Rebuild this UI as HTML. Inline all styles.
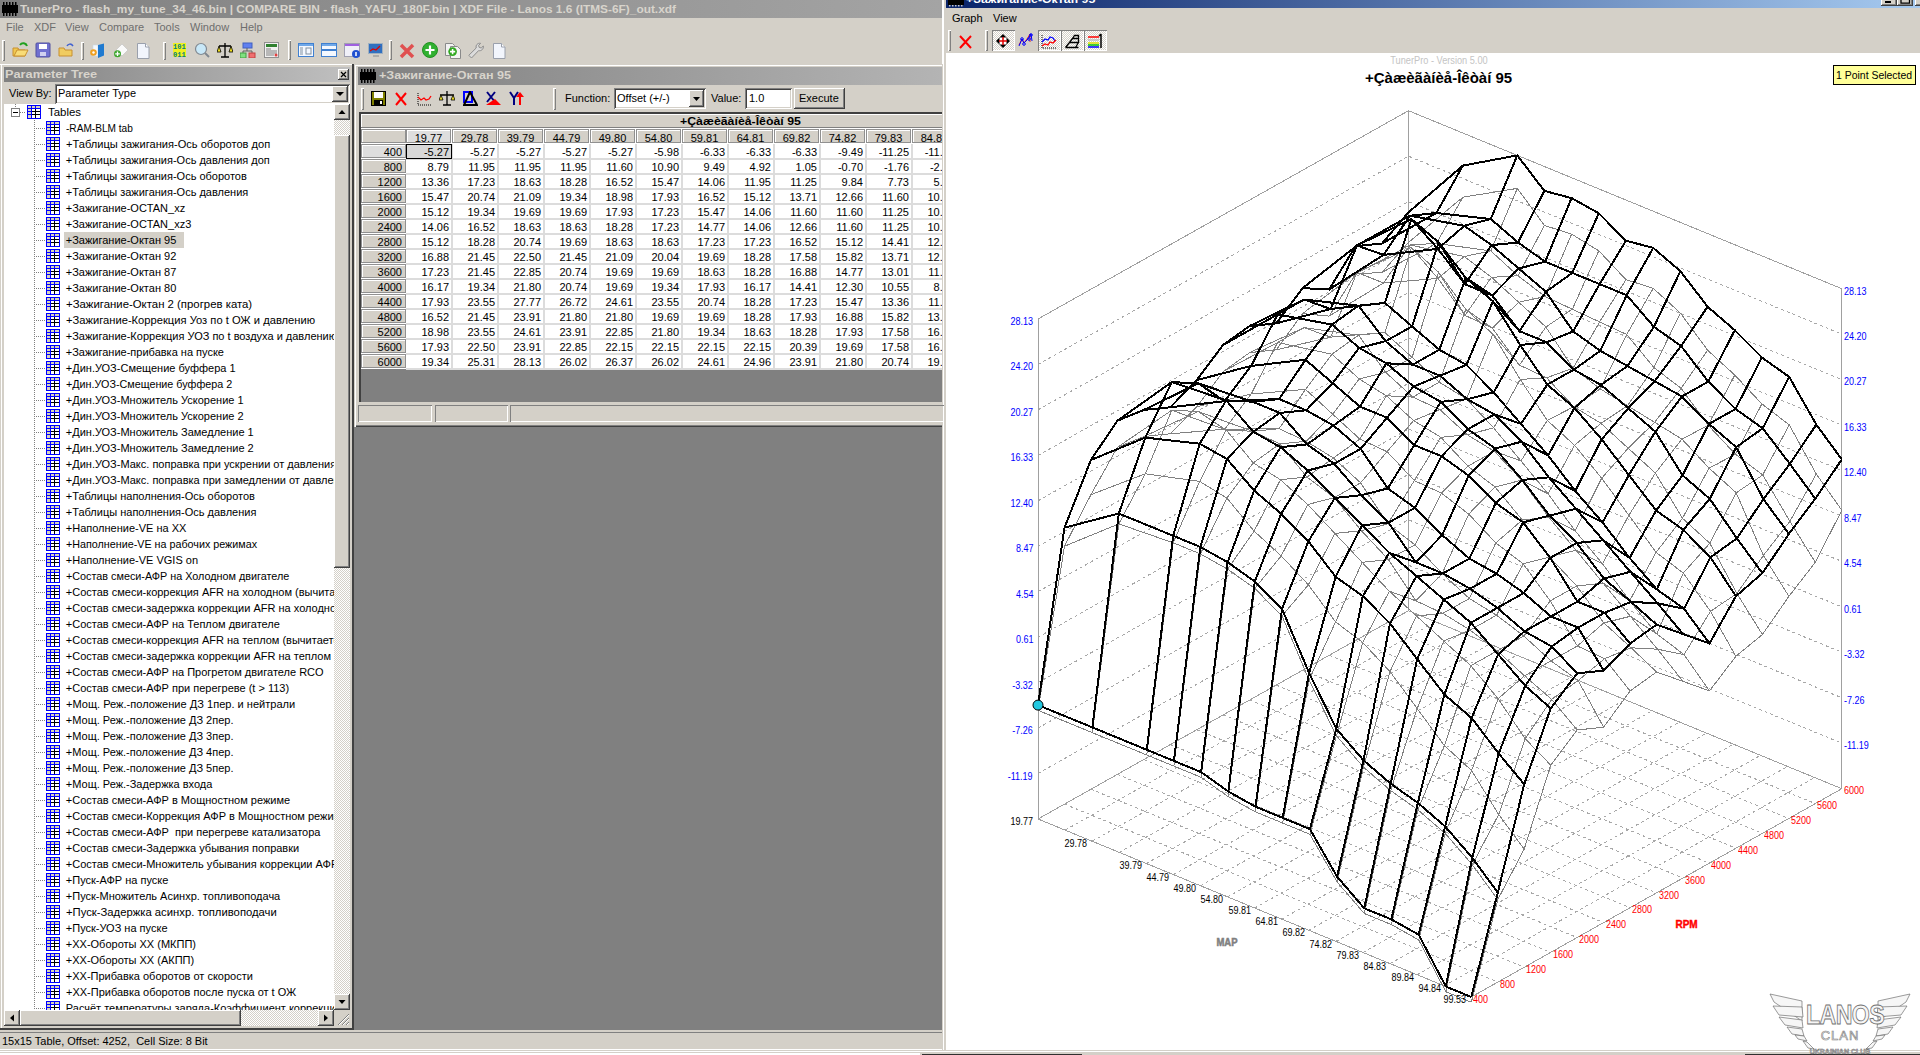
<!DOCTYPE html>
<html><head><meta charset="utf-8"><style>
html,body{margin:0;padding:0}
body{width:1920px;height:1055px;overflow:hidden;position:relative;background:#d4d0c8;font-family:"Liberation Sans", sans-serif;font-size:11px;color:#000}
div{box-sizing:content-box}
</style></head><body>
<div style="position:absolute;left:0px;top:0px;width:944px;height:1053px;background:#d4d0c8"></div><div style="position:absolute;left:0px;top:0px;width:942px;height:18px;background:linear-gradient(90deg,#808080,#a4a4a4)"></div><svg style="position:absolute;left:2px;top:2px" width="16" height="14"><rect x="0" y="3" width="16" height="8" fill="#000"/><rect x="1" y="0" width="1.5" height="3" fill="#000"/><rect x="1" y="11" width="1.5" height="3" fill="#000"/><rect x="4" y="0" width="1.5" height="3" fill="#000"/><rect x="4" y="11" width="1.5" height="3" fill="#000"/><rect x="7" y="0" width="1.5" height="3" fill="#000"/><rect x="7" y="11" width="1.5" height="3" fill="#000"/><rect x="10" y="0" width="1.5" height="3" fill="#000"/><rect x="10" y="11" width="1.5" height="3" fill="#000"/><rect x="13" y="0" width="1.5" height="3" fill="#000"/><rect x="13" y="11" width="1.5" height="3" fill="#000"/></svg><div style="position:absolute;left:19.5px;top:2.6px;font-size:11px;line-height:13px;color:#d8d4cc;font-weight:bold;white-space:pre;transform:scaleX(1.08);transform-origin:0 0;">TunerPro - flash_my_tune_34_46.bin | COMPARE BIN - flash_YAFU_180F.bin | XDF File - Lanos 1.6 (ITMS-6F)_out.xdf</div><div style="position:absolute;left:6px;top:21px;font-size:11px;line-height:13px;color:#6e6e6e;font-weight:normal;white-space:pre;">File</div><div style="position:absolute;left:34px;top:21px;font-size:11px;line-height:13px;color:#6e6e6e;font-weight:normal;white-space:pre;">XDF</div><div style="position:absolute;left:65px;top:21px;font-size:11px;line-height:13px;color:#6e6e6e;font-weight:normal;white-space:pre;">View</div><div style="position:absolute;left:99px;top:21px;font-size:11px;line-height:13px;color:#6e6e6e;font-weight:normal;white-space:pre;">Compare</div><div style="position:absolute;left:154px;top:21px;font-size:11px;line-height:13px;color:#6e6e6e;font-weight:normal;white-space:pre;">Tools</div><div style="position:absolute;left:190px;top:21px;font-size:11px;line-height:13px;color:#6e6e6e;font-weight:normal;white-space:pre;">Window</div><div style="position:absolute;left:240px;top:21px;font-size:11px;line-height:13px;color:#6e6e6e;font-weight:normal;white-space:pre;">Help</div><div style="position:absolute;left:2px;top:40px;width:3px;height:21px;box-shadow:inset 1px 1px #fff,inset -1px -1px #808080"></div><svg style="position:absolute;left:12px;top:42px" width="17" height="16" viewBox="0 0 17 16"><path d="M1 6h5l1 2h6v6H1z" fill="#f0c850" stroke="#c89030"/><path d="M2 14l3-6h11l-3 6z" fill="#f8dc78" stroke="#c89030"/><path d="M8 3c2-3 6-2 7 1" stroke="#20a020" stroke-width="2" fill="none"/></svg><svg style="position:absolute;left:35px;top:42px" width="16" height="16" viewBox="0 0 16 16"><rect x="1" y="1" width="14" height="14" rx="1" fill="#7070d0" stroke="#5050a0"/><rect x="4" y="2" width="8" height="5" fill="#fff"/><rect x="5" y="10" width="6" height="4" fill="#d0d0f0"/></svg><svg style="position:absolute;left:58px;top:42px" width="17" height="16" viewBox="0 0 17 16"><path d="M1 6h5l1 2h7v6H1z" fill="#f0cc60" stroke="#c89030"/><path d="M9 4c1-2 4-3 6 0" stroke="#4060d0" stroke-width="1.5" fill="none"/></svg><div style="position:absolute;left:81px;top:42px;width:3px;height:18px;box-shadow:inset 1px 1px #fff,inset -1px -1px #808080"></div><svg style="position:absolute;left:90px;top:42px" width="16" height="17" viewBox="0 0 16 17"><path d="M3 3h5v11H3z" fill="#f4f8fc" stroke="#c8d8e8" stroke-width="0.6"/><path d="M8 3l6-1.5v12l-6 2.5z" fill="#1f7ad0"/><circle cx="3.5" cy="10.5" r="3.3" fill="#f0a020"/><circle cx="3.5" cy="10.5" r="1.2" fill="#fff"/></svg><svg style="position:absolute;left:113px;top:42px" width="16" height="17" viewBox="0 0 16 17"><path d="M9 2l6 6-6 6-6-6z" fill="#fafafa" stroke="#c4c4c4" stroke-width="0.7"/><circle cx="4.5" cy="11.8" r="3.5" fill="#40a830"/><path d="M4.5 9.5v4.6M2.2 11.8h4.6" stroke="#fff" stroke-width="1.3"/></svg><svg style="position:absolute;left:137px;top:42px" width="13" height="17" viewBox="0 0 13 17"><path d="M0.5 1.5h8l3.5 3.5v11.5H0.5z" fill="#f2f5fc" stroke="#9aa0ac"/><path d="M8.5 1.5v3.5h3.5" fill="#fff" stroke="#9aa0ac"/></svg><div style="position:absolute;left:163px;top:42px;width:3px;height:18px;box-shadow:inset 1px 1px #fff,inset -1px -1px #808080"></div><svg style="position:absolute;left:172px;top:42px" width="16" height="16" viewBox="0 0 16 16"><rect x="1" y="1" width="13" height="14" fill="#f0f020"/><text x="1" y="7" font-size="7" font-weight="bold" fill="#008080" font-family="Liberation Mono">101</text><text x="1" y="15" font-size="7" font-weight="bold" fill="#008080" font-family="Liberation Mono">011</text></svg><svg style="position:absolute;left:194px;top:42px" width="16" height="16" viewBox="0 0 16 16"><circle cx="7" cy="7" r="5.5" fill="#c8e8f8" stroke="#808890" stroke-width="1.2"/><path d="M11 11l4 4" stroke="#808890" stroke-width="2"/></svg><svg style="position:absolute;left:217px;top:42px" width="16" height="16" viewBox="0 0 16 16"><path d="M8 1v14M4 15h8M2 4h12" stroke="#000" stroke-width="1.3"/><path d="M0 10l2-6 2 6zM12 10l2-6 2 6z" fill="#f0e020" stroke="#000" stroke-width="0.8"/></svg><svg style="position:absolute;left:240px;top:42px" width="16" height="16" viewBox="0 0 16 16"><rect x="3" y="1" width="9" height="5" fill="#6080f0" stroke="#4060c0"/><path d="M7 6v3M3 9h9v2M3 9v2" stroke="#606060" fill="none"/><rect x="0" y="11" width="6" height="5" fill="#80e080" stroke="#40a040"/><rect x="9" y="11" width="6" height="5" fill="#f07070" stroke="#c04040"/></svg><svg style="position:absolute;left:264px;top:42px" width="15" height="16" viewBox="0 0 15 16"><rect x="0.5" y="0.5" width="14" height="15" fill="#f0f0f0" stroke="#909090"/><rect x="2" y="2" width="11" height="3" fill="#308030"/><path d="M2 7h5M2 9h11M2 11h11M2 13h8" stroke="#808080"/><circle cx="12" cy="13" r="1.5" fill="#e04040"/></svg><div style="position:absolute;left:288px;top:40px;width:3px;height:20px;box-shadow:inset 1px 1px #fff,inset -1px -1px #808080"></div><svg style="position:absolute;left:298px;top:42px" width="16" height="16" viewBox="0 0 16 16"><rect x="0.5" y="1.5" width="15" height="13" fill="#f4f8ff" stroke="#4080d0"/><rect x="1" y="2" width="14" height="2" fill="#70a8e8"/><rect x="8" y="6" width="5" height="6" fill="none" stroke="#8090a0"/><path d="M2 6h3M2 8h3M2 10h3M2 12h3" stroke="#8090a0"/></svg><svg style="position:absolute;left:321px;top:42px" width="16" height="16" viewBox="0 0 16 16"><rect x="0.5" y="1.5" width="15" height="13" fill="#f4f8ff" stroke="#4080d0"/><rect x="1" y="2" width="14" height="2" fill="#70a8e8"/><path d="M1 8h14" stroke="#4080d0" stroke-width="2"/></svg><svg style="position:absolute;left:344px;top:42px" width="16" height="16" viewBox="0 0 16 16"><rect x="0.5" y="1.5" width="15" height="13" fill="#f0f0f8" stroke="#a0a0b0"/><rect x="1" y="2" width="14" height="2" fill="#a060e0"/><circle cx="12" cy="12" r="4" fill="#2050d0"/><path d="M12 10v4" stroke="#fff" stroke-width="1.5"/></svg><svg style="position:absolute;left:368px;top:42px" width="16" height="16" viewBox="0 0 16 16"><rect x="0.5" y="1.5" width="14" height="10" fill="#3070c0" stroke="#a0b0c0"/><path d="M2 9l3-2 3 1 4-4" stroke="#e00000" stroke-width="1.3" fill="none"/><path d="M5 14h6" stroke="#a0a0a0" stroke-width="1.5"/></svg><div style="position:absolute;left:389px;top:40px;width:3px;height:20px;box-shadow:inset 1px 1px #fff,inset -1px -1px #808080"></div><svg style="position:absolute;left:399px;top:43px" width="16" height="16" viewBox="0 0 16 16"><path d="M2 2l12 12M14 2L2 14" stroke="#e05050" stroke-width="3.5"/></svg><svg style="position:absolute;left:422px;top:42px" width="16" height="16" viewBox="0 0 16 16"><circle cx="8" cy="8" r="7.5" fill="#30b030" stroke="#209020"/><path d="M8 3.5v9M3.5 8h9" stroke="#fff" stroke-width="2.2"/></svg><svg style="position:absolute;left:445px;top:42px" width="17" height="17" viewBox="0 0 17 17"><path d="M0.5 1.5h7l2 2v10h-9z" fill="#f2f2f2" stroke="#8a8a8a"/><path d="M5.5 4.5h7l3 3v9h-10z" fill="#f4f4f4" stroke="#8a8a8a"/><circle cx="7.6" cy="9.6" r="4.3" fill="#30a820"/><path d="M7.6 7v5.2M5 9.6h5.2" stroke="#fff" stroke-width="1.6"/></svg><svg style="position:absolute;left:468px;top:42px" width="17" height="17" viewBox="0 0 17 17"><path d="M3.5 16 L0.8 13.3 L8.2 6 C7.5 3.2 9.5 0.8 12.6 1.3 L10.6 3.4 L11.2 5.4 L13.2 6 L15.3 4 C15.8 7 13.3 9.3 10.6 8.6 Z" fill="#dcdcdc" stroke="#8c8c8c" stroke-width="1"/></svg><svg style="position:absolute;left:493px;top:42px" width="13" height="17" viewBox="0 0 13 17"><path d="M0.5 1.5h8l3.5 3.5v11.5H0.5z" fill="#f2f5fc" stroke="#9aa0ac"/><path d="M8.5 1.5v3.5h3.5" fill="#fff" stroke="#9aa0ac"/></svg><div style="position:absolute;left:0px;top:64px;width:942px;height:1px;background:#fff"></div><div style="position:absolute;left:1px;top:65px;width:1px;height:965px;background:#fff"></div><div style="position:absolute;left:4px;top:67px;width:346px;height:15px;background:linear-gradient(90deg,#808080,#c0c0c0)"></div><div style="position:absolute;left:5px;top:68.3px;font-size:11px;line-height:13px;color:#d8d4cc;font-weight:bold;white-space:pre;transform:scaleX(1.16);transform-origin:0 0;">Parameter Tree</div><div style="position:absolute;left:338px;top:69px;width:11px;height:11px;background:#d4d0c8;box-shadow:inset -1px -1px #404040,inset 1px 1px #fff,inset -2px -2px #808080,inset 2px 2px #d4d0c8;"></div><svg style="position:absolute;left:338px;top:69px" width="11" height="11" viewBox="0 0 11 11"><path d="M3 3l5 5M8 3l-5 5" stroke="#000" stroke-width="1.2"/></svg><div style="position:absolute;left:9px;top:87px;font-size:11px;line-height:13px;color:#000;font-weight:normal;white-space:pre;">View By:</div><div style="position:absolute;left:55px;top:84px;width:295px;height:20px;background:#fff;box-shadow:inset 1px 1px #808080,inset -1px -1px #fff,inset 2px 2px #404040,inset -2px -2px #d4d0c8;"></div><div style="position:absolute;left:58px;top:87px;font-size:11px;line-height:13px;color:#000;font-weight:normal;white-space:pre;">Parameter Type</div><div style="position:absolute;left:332px;top:86px;width:16px;height:16px;background:#d4d0c8;box-shadow:inset -1px -1px #404040,inset 1px 1px #fff,inset -2px -2px #808080,inset 2px 2px #d4d0c8;"></div><svg style="position:absolute;left:332px;top:86px" width="16" height="16" viewBox="0 0 16 16"><path d="M4 6h8l-4 4z" fill="#000"/></svg><div style="position:absolute;left:4px;top:104px;width:330px;height:906px;background:#fff;overflow:hidden"></div><div style="position:absolute;left:4px;top:104px;width:330px;height:906px;overflow:hidden;background:#fff"><div style="position:absolute;left:11px;top:0px;width:1px;height:4px;background:repeating-linear-gradient(180deg,#808080 0 1px,transparent 1px 2px)"></div><div style="position:absolute;left:7px;top:4px;width:9px;height:9px;box-sizing:border-box;border:1px solid #808080;background:#fff"></div><div style="position:absolute;left:9px;top:8px;width:5px;height:1px;background:#000"></div><div style="position:absolute;left:16px;top:8px;width:6px;height:1px;background:repeating-linear-gradient(90deg,#808080 0 1px,transparent 1px 2px)"></div><svg style="position:absolute;left:23px;top:1px" width="14" height="14"><rect width="14" height="14" fill="#0000ff"/><rect x="5" y="4" width="8" height="9" fill="#fff"/><rect x="1" y="1" width="3" height="2" fill="#d8d4bc"/><rect x="5" y="1" width="3" height="2" fill="#d8d4bc"/><rect x="9" y="1" width="4" height="2" fill="#d8d4bc"/><rect x="1" y="4" width="3" height="2" fill="#d8d4bc"/><rect x="1" y="7" width="3" height="2" fill="#d8d4bc"/><rect x="1" y="10" width="3" height="3" fill="#d8d4bc"/><rect x="8" y="4" width="1" height="9" fill="#000"/><rect x="5" y="6" width="8" height="1" fill="#000"/><rect x="5" y="9" width="8" height="1" fill="#000"/></svg><div style="position:absolute;left:43.5px;top:1.7999999999999972px;font-size:11px;line-height:13px;white-space:pre;transform:scaleX(1.04);transform-origin:0 0">Tables</div><div style="position:absolute;left:30px;top:16px;width:1px;height:906px;background:repeating-linear-gradient(180deg,#808080 0 1px,transparent 1px 2px)"></div><div style="position:absolute;left:32px;top:24px;width:10px;height:1px;background:repeating-linear-gradient(90deg,#808080 0 1px,transparent 1px 2px)"></div><svg style="position:absolute;left:42px;top:17px" width="14" height="14"><rect width="14" height="14" fill="#0000ff"/><rect x="5" y="4" width="8" height="9" fill="#fff"/><rect x="1" y="1" width="3" height="2" fill="#d8d4bc"/><rect x="5" y="1" width="3" height="2" fill="#d8d4bc"/><rect x="9" y="1" width="4" height="2" fill="#d8d4bc"/><rect x="1" y="4" width="3" height="2" fill="#d8d4bc"/><rect x="1" y="7" width="3" height="2" fill="#d8d4bc"/><rect x="1" y="10" width="3" height="3" fill="#d8d4bc"/><rect x="8" y="4" width="1" height="9" fill="#000"/><rect x="5" y="6" width="8" height="1" fill="#000"/><rect x="5" y="9" width="8" height="1" fill="#000"/></svg><div style="position:absolute;left:61.8px;top:17.799999999999997px;font-size:11px;line-height:13px;white-space:pre;transform:scaleX(0.918);transform-origin:0 0">-RAM-BLM tab</div><div style="position:absolute;left:32px;top:40px;width:10px;height:1px;background:repeating-linear-gradient(90deg,#808080 0 1px,transparent 1px 2px)"></div><svg style="position:absolute;left:42px;top:33px" width="14" height="14"><rect width="14" height="14" fill="#0000ff"/><rect x="5" y="4" width="8" height="9" fill="#fff"/><rect x="1" y="1" width="3" height="2" fill="#d8d4bc"/><rect x="5" y="1" width="3" height="2" fill="#d8d4bc"/><rect x="9" y="1" width="4" height="2" fill="#d8d4bc"/><rect x="1" y="4" width="3" height="2" fill="#d8d4bc"/><rect x="1" y="7" width="3" height="2" fill="#d8d4bc"/><rect x="1" y="10" width="3" height="3" fill="#d8d4bc"/><rect x="8" y="4" width="1" height="9" fill="#000"/><rect x="5" y="6" width="8" height="1" fill="#000"/><rect x="5" y="9" width="8" height="1" fill="#000"/></svg><div style="position:absolute;left:61.8px;top:33.80000000000001px;font-size:11px;line-height:13px;white-space:pre;transform:scaleX(1.008);transform-origin:0 0">+Таблицы зажигания-Ось оборотов доп</div><div style="position:absolute;left:32px;top:56px;width:10px;height:1px;background:repeating-linear-gradient(90deg,#808080 0 1px,transparent 1px 2px)"></div><svg style="position:absolute;left:42px;top:49px" width="14" height="14"><rect width="14" height="14" fill="#0000ff"/><rect x="5" y="4" width="8" height="9" fill="#fff"/><rect x="1" y="1" width="3" height="2" fill="#d8d4bc"/><rect x="5" y="1" width="3" height="2" fill="#d8d4bc"/><rect x="9" y="1" width="4" height="2" fill="#d8d4bc"/><rect x="1" y="4" width="3" height="2" fill="#d8d4bc"/><rect x="1" y="7" width="3" height="2" fill="#d8d4bc"/><rect x="1" y="10" width="3" height="3" fill="#d8d4bc"/><rect x="8" y="4" width="1" height="9" fill="#000"/><rect x="5" y="6" width="8" height="1" fill="#000"/><rect x="5" y="9" width="8" height="1" fill="#000"/></svg><div style="position:absolute;left:61.8px;top:49.80000000000001px;font-size:11px;line-height:13px;white-space:pre;transform:scaleX(1.0);transform-origin:0 0">+Таблицы зажигания-Ось давления доп</div><div style="position:absolute;left:32px;top:72px;width:10px;height:1px;background:repeating-linear-gradient(90deg,#808080 0 1px,transparent 1px 2px)"></div><svg style="position:absolute;left:42px;top:65px" width="14" height="14"><rect width="14" height="14" fill="#0000ff"/><rect x="5" y="4" width="8" height="9" fill="#fff"/><rect x="1" y="1" width="3" height="2" fill="#d8d4bc"/><rect x="5" y="1" width="3" height="2" fill="#d8d4bc"/><rect x="9" y="1" width="4" height="2" fill="#d8d4bc"/><rect x="1" y="4" width="3" height="2" fill="#d8d4bc"/><rect x="1" y="7" width="3" height="2" fill="#d8d4bc"/><rect x="1" y="10" width="3" height="3" fill="#d8d4bc"/><rect x="8" y="4" width="1" height="9" fill="#000"/><rect x="5" y="6" width="8" height="1" fill="#000"/><rect x="5" y="9" width="8" height="1" fill="#000"/></svg><div style="position:absolute;left:61.8px;top:65.80000000000001px;font-size:11px;line-height:13px;white-space:pre;transform:scaleX(1.0);transform-origin:0 0">+Таблицы зажигания-Ось оборотов</div><div style="position:absolute;left:32px;top:88px;width:10px;height:1px;background:repeating-linear-gradient(90deg,#808080 0 1px,transparent 1px 2px)"></div><svg style="position:absolute;left:42px;top:81px" width="14" height="14"><rect width="14" height="14" fill="#0000ff"/><rect x="5" y="4" width="8" height="9" fill="#fff"/><rect x="1" y="1" width="3" height="2" fill="#d8d4bc"/><rect x="5" y="1" width="3" height="2" fill="#d8d4bc"/><rect x="9" y="1" width="4" height="2" fill="#d8d4bc"/><rect x="1" y="4" width="3" height="2" fill="#d8d4bc"/><rect x="1" y="7" width="3" height="2" fill="#d8d4bc"/><rect x="1" y="10" width="3" height="3" fill="#d8d4bc"/><rect x="8" y="4" width="1" height="9" fill="#000"/><rect x="5" y="6" width="8" height="1" fill="#000"/><rect x="5" y="9" width="8" height="1" fill="#000"/></svg><div style="position:absolute;left:61.8px;top:81.80000000000001px;font-size:11px;line-height:13px;white-space:pre;transform:scaleX(1.0);transform-origin:0 0">+Таблицы зажигания-Ось давления</div><div style="position:absolute;left:32px;top:104px;width:10px;height:1px;background:repeating-linear-gradient(90deg,#808080 0 1px,transparent 1px 2px)"></div><svg style="position:absolute;left:42px;top:97px" width="14" height="14"><rect width="14" height="14" fill="#0000ff"/><rect x="5" y="4" width="8" height="9" fill="#fff"/><rect x="1" y="1" width="3" height="2" fill="#d8d4bc"/><rect x="5" y="1" width="3" height="2" fill="#d8d4bc"/><rect x="9" y="1" width="4" height="2" fill="#d8d4bc"/><rect x="1" y="4" width="3" height="2" fill="#d8d4bc"/><rect x="1" y="7" width="3" height="2" fill="#d8d4bc"/><rect x="1" y="10" width="3" height="3" fill="#d8d4bc"/><rect x="8" y="4" width="1" height="9" fill="#000"/><rect x="5" y="6" width="8" height="1" fill="#000"/><rect x="5" y="9" width="8" height="1" fill="#000"/></svg><div style="position:absolute;left:61.8px;top:97.80000000000001px;font-size:11px;line-height:13px;white-space:pre;transform:scaleX(1.0);transform-origin:0 0">+Зажигание-OCTAN_xz</div><div style="position:absolute;left:32px;top:120px;width:10px;height:1px;background:repeating-linear-gradient(90deg,#808080 0 1px,transparent 1px 2px)"></div><svg style="position:absolute;left:42px;top:113px" width="14" height="14"><rect width="14" height="14" fill="#0000ff"/><rect x="5" y="4" width="8" height="9" fill="#fff"/><rect x="1" y="1" width="3" height="2" fill="#d8d4bc"/><rect x="5" y="1" width="3" height="2" fill="#d8d4bc"/><rect x="9" y="1" width="4" height="2" fill="#d8d4bc"/><rect x="1" y="4" width="3" height="2" fill="#d8d4bc"/><rect x="1" y="7" width="3" height="2" fill="#d8d4bc"/><rect x="1" y="10" width="3" height="3" fill="#d8d4bc"/><rect x="8" y="4" width="1" height="9" fill="#000"/><rect x="5" y="6" width="8" height="1" fill="#000"/><rect x="5" y="9" width="8" height="1" fill="#000"/></svg><div style="position:absolute;left:61.8px;top:113.80000000000001px;font-size:11px;line-height:13px;white-space:pre;transform:scaleX(1.0);transform-origin:0 0">+Зажигание-OCTAN_xz3</div><div style="position:absolute;left:32px;top:136px;width:10px;height:1px;background:repeating-linear-gradient(90deg,#808080 0 1px,transparent 1px 2px)"></div><svg style="position:absolute;left:42px;top:129px" width="14" height="14"><rect width="14" height="14" fill="#0000ff"/><rect x="5" y="4" width="8" height="9" fill="#fff"/><rect x="1" y="1" width="3" height="2" fill="#d8d4bc"/><rect x="5" y="1" width="3" height="2" fill="#d8d4bc"/><rect x="9" y="1" width="4" height="2" fill="#d8d4bc"/><rect x="1" y="4" width="3" height="2" fill="#d8d4bc"/><rect x="1" y="7" width="3" height="2" fill="#d8d4bc"/><rect x="1" y="10" width="3" height="3" fill="#d8d4bc"/><rect x="8" y="4" width="1" height="9" fill="#000"/><rect x="5" y="6" width="8" height="1" fill="#000"/><rect x="5" y="9" width="8" height="1" fill="#000"/></svg><div style="position:absolute;left:60px;top:128px;width:120px;height:16px;background:#d4d0c8"></div><div style="position:absolute;left:61.8px;top:129.8px;font-size:11px;line-height:13px;white-space:pre;transform:scaleX(1.0);transform-origin:0 0">+Зажигание-Октан 95</div><div style="position:absolute;left:32px;top:152px;width:10px;height:1px;background:repeating-linear-gradient(90deg,#808080 0 1px,transparent 1px 2px)"></div><svg style="position:absolute;left:42px;top:145px" width="14" height="14"><rect width="14" height="14" fill="#0000ff"/><rect x="5" y="4" width="8" height="9" fill="#fff"/><rect x="1" y="1" width="3" height="2" fill="#d8d4bc"/><rect x="5" y="1" width="3" height="2" fill="#d8d4bc"/><rect x="9" y="1" width="4" height="2" fill="#d8d4bc"/><rect x="1" y="4" width="3" height="2" fill="#d8d4bc"/><rect x="1" y="7" width="3" height="2" fill="#d8d4bc"/><rect x="1" y="10" width="3" height="3" fill="#d8d4bc"/><rect x="8" y="4" width="1" height="9" fill="#000"/><rect x="5" y="6" width="8" height="1" fill="#000"/><rect x="5" y="9" width="8" height="1" fill="#000"/></svg><div style="position:absolute;left:61.8px;top:145.8px;font-size:11px;line-height:13px;white-space:pre;transform:scaleX(1.0);transform-origin:0 0">+Зажигание-Октан 92</div><div style="position:absolute;left:32px;top:168px;width:10px;height:1px;background:repeating-linear-gradient(90deg,#808080 0 1px,transparent 1px 2px)"></div><svg style="position:absolute;left:42px;top:161px" width="14" height="14"><rect width="14" height="14" fill="#0000ff"/><rect x="5" y="4" width="8" height="9" fill="#fff"/><rect x="1" y="1" width="3" height="2" fill="#d8d4bc"/><rect x="5" y="1" width="3" height="2" fill="#d8d4bc"/><rect x="9" y="1" width="4" height="2" fill="#d8d4bc"/><rect x="1" y="4" width="3" height="2" fill="#d8d4bc"/><rect x="1" y="7" width="3" height="2" fill="#d8d4bc"/><rect x="1" y="10" width="3" height="3" fill="#d8d4bc"/><rect x="8" y="4" width="1" height="9" fill="#000"/><rect x="5" y="6" width="8" height="1" fill="#000"/><rect x="5" y="9" width="8" height="1" fill="#000"/></svg><div style="position:absolute;left:61.8px;top:161.8px;font-size:11px;line-height:13px;white-space:pre;transform:scaleX(1.0);transform-origin:0 0">+Зажигание-Октан 87</div><div style="position:absolute;left:32px;top:184px;width:10px;height:1px;background:repeating-linear-gradient(90deg,#808080 0 1px,transparent 1px 2px)"></div><svg style="position:absolute;left:42px;top:177px" width="14" height="14"><rect width="14" height="14" fill="#0000ff"/><rect x="5" y="4" width="8" height="9" fill="#fff"/><rect x="1" y="1" width="3" height="2" fill="#d8d4bc"/><rect x="5" y="1" width="3" height="2" fill="#d8d4bc"/><rect x="9" y="1" width="4" height="2" fill="#d8d4bc"/><rect x="1" y="4" width="3" height="2" fill="#d8d4bc"/><rect x="1" y="7" width="3" height="2" fill="#d8d4bc"/><rect x="1" y="10" width="3" height="3" fill="#d8d4bc"/><rect x="8" y="4" width="1" height="9" fill="#000"/><rect x="5" y="6" width="8" height="1" fill="#000"/><rect x="5" y="9" width="8" height="1" fill="#000"/></svg><div style="position:absolute;left:61.8px;top:177.8px;font-size:11px;line-height:13px;white-space:pre;transform:scaleX(1.0);transform-origin:0 0">+Зажигание-Октан 80</div><div style="position:absolute;left:32px;top:200px;width:10px;height:1px;background:repeating-linear-gradient(90deg,#808080 0 1px,transparent 1px 2px)"></div><svg style="position:absolute;left:42px;top:193px" width="14" height="14"><rect width="14" height="14" fill="#0000ff"/><rect x="5" y="4" width="8" height="9" fill="#fff"/><rect x="1" y="1" width="3" height="2" fill="#d8d4bc"/><rect x="5" y="1" width="3" height="2" fill="#d8d4bc"/><rect x="9" y="1" width="4" height="2" fill="#d8d4bc"/><rect x="1" y="4" width="3" height="2" fill="#d8d4bc"/><rect x="1" y="7" width="3" height="2" fill="#d8d4bc"/><rect x="1" y="10" width="3" height="3" fill="#d8d4bc"/><rect x="8" y="4" width="1" height="9" fill="#000"/><rect x="5" y="6" width="8" height="1" fill="#000"/><rect x="5" y="9" width="8" height="1" fill="#000"/></svg><div style="position:absolute;left:61.8px;top:193.8px;font-size:11px;line-height:13px;white-space:pre;transform:scaleX(1.034);transform-origin:0 0">+Зажигание-Октан 2 (прогрев ката)</div><div style="position:absolute;left:32px;top:216px;width:10px;height:1px;background:repeating-linear-gradient(90deg,#808080 0 1px,transparent 1px 2px)"></div><svg style="position:absolute;left:42px;top:209px" width="14" height="14"><rect width="14" height="14" fill="#0000ff"/><rect x="5" y="4" width="8" height="9" fill="#fff"/><rect x="1" y="1" width="3" height="2" fill="#d8d4bc"/><rect x="5" y="1" width="3" height="2" fill="#d8d4bc"/><rect x="9" y="1" width="4" height="2" fill="#d8d4bc"/><rect x="1" y="4" width="3" height="2" fill="#d8d4bc"/><rect x="1" y="7" width="3" height="2" fill="#d8d4bc"/><rect x="1" y="10" width="3" height="3" fill="#d8d4bc"/><rect x="8" y="4" width="1" height="9" fill="#000"/><rect x="5" y="6" width="8" height="1" fill="#000"/><rect x="5" y="9" width="8" height="1" fill="#000"/></svg><div style="position:absolute;left:61.8px;top:209.8px;font-size:11px;line-height:13px;white-space:pre;transform:scaleX(1.016);transform-origin:0 0">+Зажигание-Коррекция Уоз по t ОЖ и давлению</div><div style="position:absolute;left:32px;top:232px;width:10px;height:1px;background:repeating-linear-gradient(90deg,#808080 0 1px,transparent 1px 2px)"></div><svg style="position:absolute;left:42px;top:225px" width="14" height="14"><rect width="14" height="14" fill="#0000ff"/><rect x="5" y="4" width="8" height="9" fill="#fff"/><rect x="1" y="1" width="3" height="2" fill="#d8d4bc"/><rect x="5" y="1" width="3" height="2" fill="#d8d4bc"/><rect x="9" y="1" width="4" height="2" fill="#d8d4bc"/><rect x="1" y="4" width="3" height="2" fill="#d8d4bc"/><rect x="1" y="7" width="3" height="2" fill="#d8d4bc"/><rect x="1" y="10" width="3" height="3" fill="#d8d4bc"/><rect x="8" y="4" width="1" height="9" fill="#000"/><rect x="5" y="6" width="8" height="1" fill="#000"/><rect x="5" y="9" width="8" height="1" fill="#000"/></svg><div style="position:absolute;left:61.8px;top:225.8px;font-size:11px;line-height:13px;white-space:pre;transform:scaleX(1.0);transform-origin:0 0">+Зажигание-Коррекция УОЗ по t воздуха и давлению</div><div style="position:absolute;left:32px;top:248px;width:10px;height:1px;background:repeating-linear-gradient(90deg,#808080 0 1px,transparent 1px 2px)"></div><svg style="position:absolute;left:42px;top:241px" width="14" height="14"><rect width="14" height="14" fill="#0000ff"/><rect x="5" y="4" width="8" height="9" fill="#fff"/><rect x="1" y="1" width="3" height="2" fill="#d8d4bc"/><rect x="5" y="1" width="3" height="2" fill="#d8d4bc"/><rect x="9" y="1" width="4" height="2" fill="#d8d4bc"/><rect x="1" y="4" width="3" height="2" fill="#d8d4bc"/><rect x="1" y="7" width="3" height="2" fill="#d8d4bc"/><rect x="1" y="10" width="3" height="3" fill="#d8d4bc"/><rect x="8" y="4" width="1" height="9" fill="#000"/><rect x="5" y="6" width="8" height="1" fill="#000"/><rect x="5" y="9" width="8" height="1" fill="#000"/></svg><div style="position:absolute;left:61.8px;top:241.8px;font-size:11px;line-height:13px;white-space:pre;transform:scaleX(1.0);transform-origin:0 0">+Зажигание-прибавка на пуске</div><div style="position:absolute;left:32px;top:264px;width:10px;height:1px;background:repeating-linear-gradient(90deg,#808080 0 1px,transparent 1px 2px)"></div><svg style="position:absolute;left:42px;top:257px" width="14" height="14"><rect width="14" height="14" fill="#0000ff"/><rect x="5" y="4" width="8" height="9" fill="#fff"/><rect x="1" y="1" width="3" height="2" fill="#d8d4bc"/><rect x="5" y="1" width="3" height="2" fill="#d8d4bc"/><rect x="9" y="1" width="4" height="2" fill="#d8d4bc"/><rect x="1" y="4" width="3" height="2" fill="#d8d4bc"/><rect x="1" y="7" width="3" height="2" fill="#d8d4bc"/><rect x="1" y="10" width="3" height="3" fill="#d8d4bc"/><rect x="8" y="4" width="1" height="9" fill="#000"/><rect x="5" y="6" width="8" height="1" fill="#000"/><rect x="5" y="9" width="8" height="1" fill="#000"/></svg><div style="position:absolute;left:61.8px;top:257.8px;font-size:11px;line-height:13px;white-space:pre;transform:scaleX(1.0);transform-origin:0 0">+Дин.УОЗ-Смещение буффера 1</div><div style="position:absolute;left:32px;top:280px;width:10px;height:1px;background:repeating-linear-gradient(90deg,#808080 0 1px,transparent 1px 2px)"></div><svg style="position:absolute;left:42px;top:273px" width="14" height="14"><rect width="14" height="14" fill="#0000ff"/><rect x="5" y="4" width="8" height="9" fill="#fff"/><rect x="1" y="1" width="3" height="2" fill="#d8d4bc"/><rect x="5" y="1" width="3" height="2" fill="#d8d4bc"/><rect x="9" y="1" width="4" height="2" fill="#d8d4bc"/><rect x="1" y="4" width="3" height="2" fill="#d8d4bc"/><rect x="1" y="7" width="3" height="2" fill="#d8d4bc"/><rect x="1" y="10" width="3" height="3" fill="#d8d4bc"/><rect x="8" y="4" width="1" height="9" fill="#000"/><rect x="5" y="6" width="8" height="1" fill="#000"/><rect x="5" y="9" width="8" height="1" fill="#000"/></svg><div style="position:absolute;left:61.8px;top:273.8px;font-size:11px;line-height:13px;white-space:pre;transform:scaleX(0.979);transform-origin:0 0">+Дин.УОЗ-Смещение буффера 2</div><div style="position:absolute;left:32px;top:296px;width:10px;height:1px;background:repeating-linear-gradient(90deg,#808080 0 1px,transparent 1px 2px)"></div><svg style="position:absolute;left:42px;top:289px" width="14" height="14"><rect width="14" height="14" fill="#0000ff"/><rect x="5" y="4" width="8" height="9" fill="#fff"/><rect x="1" y="1" width="3" height="2" fill="#d8d4bc"/><rect x="5" y="1" width="3" height="2" fill="#d8d4bc"/><rect x="9" y="1" width="4" height="2" fill="#d8d4bc"/><rect x="1" y="4" width="3" height="2" fill="#d8d4bc"/><rect x="1" y="7" width="3" height="2" fill="#d8d4bc"/><rect x="1" y="10" width="3" height="3" fill="#d8d4bc"/><rect x="8" y="4" width="1" height="9" fill="#000"/><rect x="5" y="6" width="8" height="1" fill="#000"/><rect x="5" y="9" width="8" height="1" fill="#000"/></svg><div style="position:absolute;left:61.8px;top:289.8px;font-size:11px;line-height:13px;white-space:pre;transform:scaleX(1.0);transform-origin:0 0">+Дин.УОЗ-Множитель Ускорение 1</div><div style="position:absolute;left:32px;top:312px;width:10px;height:1px;background:repeating-linear-gradient(90deg,#808080 0 1px,transparent 1px 2px)"></div><svg style="position:absolute;left:42px;top:305px" width="14" height="14"><rect width="14" height="14" fill="#0000ff"/><rect x="5" y="4" width="8" height="9" fill="#fff"/><rect x="1" y="1" width="3" height="2" fill="#d8d4bc"/><rect x="5" y="1" width="3" height="2" fill="#d8d4bc"/><rect x="9" y="1" width="4" height="2" fill="#d8d4bc"/><rect x="1" y="4" width="3" height="2" fill="#d8d4bc"/><rect x="1" y="7" width="3" height="2" fill="#d8d4bc"/><rect x="1" y="10" width="3" height="3" fill="#d8d4bc"/><rect x="8" y="4" width="1" height="9" fill="#000"/><rect x="5" y="6" width="8" height="1" fill="#000"/><rect x="5" y="9" width="8" height="1" fill="#000"/></svg><div style="position:absolute;left:61.8px;top:305.8px;font-size:11px;line-height:13px;white-space:pre;transform:scaleX(1.0);transform-origin:0 0">+Дин.УОЗ-Множитель Ускорение 2</div><div style="position:absolute;left:32px;top:328px;width:10px;height:1px;background:repeating-linear-gradient(90deg,#808080 0 1px,transparent 1px 2px)"></div><svg style="position:absolute;left:42px;top:321px" width="14" height="14"><rect width="14" height="14" fill="#0000ff"/><rect x="5" y="4" width="8" height="9" fill="#fff"/><rect x="1" y="1" width="3" height="2" fill="#d8d4bc"/><rect x="5" y="1" width="3" height="2" fill="#d8d4bc"/><rect x="9" y="1" width="4" height="2" fill="#d8d4bc"/><rect x="1" y="4" width="3" height="2" fill="#d8d4bc"/><rect x="1" y="7" width="3" height="2" fill="#d8d4bc"/><rect x="1" y="10" width="3" height="3" fill="#d8d4bc"/><rect x="8" y="4" width="1" height="9" fill="#000"/><rect x="5" y="6" width="8" height="1" fill="#000"/><rect x="5" y="9" width="8" height="1" fill="#000"/></svg><div style="position:absolute;left:61.8px;top:321.8px;font-size:11px;line-height:13px;white-space:pre;transform:scaleX(1.0);transform-origin:0 0">+Дин.УОЗ-Множитель Замедление 1</div><div style="position:absolute;left:32px;top:344px;width:10px;height:1px;background:repeating-linear-gradient(90deg,#808080 0 1px,transparent 1px 2px)"></div><svg style="position:absolute;left:42px;top:337px" width="14" height="14"><rect width="14" height="14" fill="#0000ff"/><rect x="5" y="4" width="8" height="9" fill="#fff"/><rect x="1" y="1" width="3" height="2" fill="#d8d4bc"/><rect x="5" y="1" width="3" height="2" fill="#d8d4bc"/><rect x="9" y="1" width="4" height="2" fill="#d8d4bc"/><rect x="1" y="4" width="3" height="2" fill="#d8d4bc"/><rect x="1" y="7" width="3" height="2" fill="#d8d4bc"/><rect x="1" y="10" width="3" height="3" fill="#d8d4bc"/><rect x="8" y="4" width="1" height="9" fill="#000"/><rect x="5" y="6" width="8" height="1" fill="#000"/><rect x="5" y="9" width="8" height="1" fill="#000"/></svg><div style="position:absolute;left:61.8px;top:337.8px;font-size:11px;line-height:13px;white-space:pre;transform:scaleX(1.0);transform-origin:0 0">+Дин.УОЗ-Множитель Замедление 2</div><div style="position:absolute;left:32px;top:360px;width:10px;height:1px;background:repeating-linear-gradient(90deg,#808080 0 1px,transparent 1px 2px)"></div><svg style="position:absolute;left:42px;top:353px" width="14" height="14"><rect width="14" height="14" fill="#0000ff"/><rect x="5" y="4" width="8" height="9" fill="#fff"/><rect x="1" y="1" width="3" height="2" fill="#d8d4bc"/><rect x="5" y="1" width="3" height="2" fill="#d8d4bc"/><rect x="9" y="1" width="4" height="2" fill="#d8d4bc"/><rect x="1" y="4" width="3" height="2" fill="#d8d4bc"/><rect x="1" y="7" width="3" height="2" fill="#d8d4bc"/><rect x="1" y="10" width="3" height="3" fill="#d8d4bc"/><rect x="8" y="4" width="1" height="9" fill="#000"/><rect x="5" y="6" width="8" height="1" fill="#000"/><rect x="5" y="9" width="8" height="1" fill="#000"/></svg><div style="position:absolute;left:61.8px;top:353.8px;font-size:11px;line-height:13px;white-space:pre;transform:scaleX(1.0);transform-origin:0 0">+Дин.УОЗ-Макс. поправка при ускрении от давления</div><div style="position:absolute;left:32px;top:376px;width:10px;height:1px;background:repeating-linear-gradient(90deg,#808080 0 1px,transparent 1px 2px)"></div><svg style="position:absolute;left:42px;top:369px" width="14" height="14"><rect width="14" height="14" fill="#0000ff"/><rect x="5" y="4" width="8" height="9" fill="#fff"/><rect x="1" y="1" width="3" height="2" fill="#d8d4bc"/><rect x="5" y="1" width="3" height="2" fill="#d8d4bc"/><rect x="9" y="1" width="4" height="2" fill="#d8d4bc"/><rect x="1" y="4" width="3" height="2" fill="#d8d4bc"/><rect x="1" y="7" width="3" height="2" fill="#d8d4bc"/><rect x="1" y="10" width="3" height="3" fill="#d8d4bc"/><rect x="8" y="4" width="1" height="9" fill="#000"/><rect x="5" y="6" width="8" height="1" fill="#000"/><rect x="5" y="9" width="8" height="1" fill="#000"/></svg><div style="position:absolute;left:61.8px;top:369.8px;font-size:11px;line-height:13px;white-space:pre;transform:scaleX(1.0);transform-origin:0 0">+Дин.УОЗ-Макс. поправка при замедлении от давления</div><div style="position:absolute;left:32px;top:392px;width:10px;height:1px;background:repeating-linear-gradient(90deg,#808080 0 1px,transparent 1px 2px)"></div><svg style="position:absolute;left:42px;top:385px" width="14" height="14"><rect width="14" height="14" fill="#0000ff"/><rect x="5" y="4" width="8" height="9" fill="#fff"/><rect x="1" y="1" width="3" height="2" fill="#d8d4bc"/><rect x="5" y="1" width="3" height="2" fill="#d8d4bc"/><rect x="9" y="1" width="4" height="2" fill="#d8d4bc"/><rect x="1" y="4" width="3" height="2" fill="#d8d4bc"/><rect x="1" y="7" width="3" height="2" fill="#d8d4bc"/><rect x="1" y="10" width="3" height="3" fill="#d8d4bc"/><rect x="8" y="4" width="1" height="9" fill="#000"/><rect x="5" y="6" width="8" height="1" fill="#000"/><rect x="5" y="9" width="8" height="1" fill="#000"/></svg><div style="position:absolute;left:61.8px;top:385.8px;font-size:11px;line-height:13px;white-space:pre;transform:scaleX(1.0);transform-origin:0 0">+Таблицы наполнения-Ось оборотов</div><div style="position:absolute;left:32px;top:408px;width:10px;height:1px;background:repeating-linear-gradient(90deg,#808080 0 1px,transparent 1px 2px)"></div><svg style="position:absolute;left:42px;top:401px" width="14" height="14"><rect width="14" height="14" fill="#0000ff"/><rect x="5" y="4" width="8" height="9" fill="#fff"/><rect x="1" y="1" width="3" height="2" fill="#d8d4bc"/><rect x="5" y="1" width="3" height="2" fill="#d8d4bc"/><rect x="9" y="1" width="4" height="2" fill="#d8d4bc"/><rect x="1" y="4" width="3" height="2" fill="#d8d4bc"/><rect x="1" y="7" width="3" height="2" fill="#d8d4bc"/><rect x="1" y="10" width="3" height="3" fill="#d8d4bc"/><rect x="8" y="4" width="1" height="9" fill="#000"/><rect x="5" y="6" width="8" height="1" fill="#000"/><rect x="5" y="9" width="8" height="1" fill="#000"/></svg><div style="position:absolute;left:61.8px;top:401.8px;font-size:11px;line-height:13px;white-space:pre;transform:scaleX(1.0);transform-origin:0 0">+Таблицы наполнения-Ось давления</div><div style="position:absolute;left:32px;top:424px;width:10px;height:1px;background:repeating-linear-gradient(90deg,#808080 0 1px,transparent 1px 2px)"></div><svg style="position:absolute;left:42px;top:417px" width="14" height="14"><rect width="14" height="14" fill="#0000ff"/><rect x="5" y="4" width="8" height="9" fill="#fff"/><rect x="1" y="1" width="3" height="2" fill="#d8d4bc"/><rect x="5" y="1" width="3" height="2" fill="#d8d4bc"/><rect x="9" y="1" width="4" height="2" fill="#d8d4bc"/><rect x="1" y="4" width="3" height="2" fill="#d8d4bc"/><rect x="1" y="7" width="3" height="2" fill="#d8d4bc"/><rect x="1" y="10" width="3" height="3" fill="#d8d4bc"/><rect x="8" y="4" width="1" height="9" fill="#000"/><rect x="5" y="6" width="8" height="1" fill="#000"/><rect x="5" y="9" width="8" height="1" fill="#000"/></svg><div style="position:absolute;left:61.8px;top:417.79999999999995px;font-size:11px;line-height:13px;white-space:pre;transform:scaleX(1.0);transform-origin:0 0">+Наполнение-VE на XX</div><div style="position:absolute;left:32px;top:440px;width:10px;height:1px;background:repeating-linear-gradient(90deg,#808080 0 1px,transparent 1px 2px)"></div><svg style="position:absolute;left:42px;top:433px" width="14" height="14"><rect width="14" height="14" fill="#0000ff"/><rect x="5" y="4" width="8" height="9" fill="#fff"/><rect x="1" y="1" width="3" height="2" fill="#d8d4bc"/><rect x="5" y="1" width="3" height="2" fill="#d8d4bc"/><rect x="9" y="1" width="4" height="2" fill="#d8d4bc"/><rect x="1" y="4" width="3" height="2" fill="#d8d4bc"/><rect x="1" y="7" width="3" height="2" fill="#d8d4bc"/><rect x="1" y="10" width="3" height="3" fill="#d8d4bc"/><rect x="8" y="4" width="1" height="9" fill="#000"/><rect x="5" y="6" width="8" height="1" fill="#000"/><rect x="5" y="9" width="8" height="1" fill="#000"/></svg><div style="position:absolute;left:61.8px;top:433.79999999999995px;font-size:11px;line-height:13px;white-space:pre;transform:scaleX(0.977);transform-origin:0 0">+Наполнение-VE на рабочих режимах</div><div style="position:absolute;left:32px;top:456px;width:10px;height:1px;background:repeating-linear-gradient(90deg,#808080 0 1px,transparent 1px 2px)"></div><svg style="position:absolute;left:42px;top:449px" width="14" height="14"><rect width="14" height="14" fill="#0000ff"/><rect x="5" y="4" width="8" height="9" fill="#fff"/><rect x="1" y="1" width="3" height="2" fill="#d8d4bc"/><rect x="5" y="1" width="3" height="2" fill="#d8d4bc"/><rect x="9" y="1" width="4" height="2" fill="#d8d4bc"/><rect x="1" y="4" width="3" height="2" fill="#d8d4bc"/><rect x="1" y="7" width="3" height="2" fill="#d8d4bc"/><rect x="1" y="10" width="3" height="3" fill="#d8d4bc"/><rect x="8" y="4" width="1" height="9" fill="#000"/><rect x="5" y="6" width="8" height="1" fill="#000"/><rect x="5" y="9" width="8" height="1" fill="#000"/></svg><div style="position:absolute;left:61.8px;top:449.79999999999995px;font-size:11px;line-height:13px;white-space:pre;transform:scaleX(1.0);transform-origin:0 0">+Наполнение-VE VGIS on</div><div style="position:absolute;left:32px;top:472px;width:10px;height:1px;background:repeating-linear-gradient(90deg,#808080 0 1px,transparent 1px 2px)"></div><svg style="position:absolute;left:42px;top:465px" width="14" height="14"><rect width="14" height="14" fill="#0000ff"/><rect x="5" y="4" width="8" height="9" fill="#fff"/><rect x="1" y="1" width="3" height="2" fill="#d8d4bc"/><rect x="5" y="1" width="3" height="2" fill="#d8d4bc"/><rect x="9" y="1" width="4" height="2" fill="#d8d4bc"/><rect x="1" y="4" width="3" height="2" fill="#d8d4bc"/><rect x="1" y="7" width="3" height="2" fill="#d8d4bc"/><rect x="1" y="10" width="3" height="3" fill="#d8d4bc"/><rect x="8" y="4" width="1" height="9" fill="#000"/><rect x="5" y="6" width="8" height="1" fill="#000"/><rect x="5" y="9" width="8" height="1" fill="#000"/></svg><div style="position:absolute;left:61.8px;top:465.79999999999995px;font-size:11px;line-height:13px;white-space:pre;transform:scaleX(0.982);transform-origin:0 0">+Состав смеси-АФР на Холодном двигателе</div><div style="position:absolute;left:32px;top:488px;width:10px;height:1px;background:repeating-linear-gradient(90deg,#808080 0 1px,transparent 1px 2px)"></div><svg style="position:absolute;left:42px;top:481px" width="14" height="14"><rect width="14" height="14" fill="#0000ff"/><rect x="5" y="4" width="8" height="9" fill="#fff"/><rect x="1" y="1" width="3" height="2" fill="#d8d4bc"/><rect x="5" y="1" width="3" height="2" fill="#d8d4bc"/><rect x="9" y="1" width="4" height="2" fill="#d8d4bc"/><rect x="1" y="4" width="3" height="2" fill="#d8d4bc"/><rect x="1" y="7" width="3" height="2" fill="#d8d4bc"/><rect x="1" y="10" width="3" height="3" fill="#d8d4bc"/><rect x="8" y="4" width="1" height="9" fill="#000"/><rect x="5" y="6" width="8" height="1" fill="#000"/><rect x="5" y="9" width="8" height="1" fill="#000"/></svg><div style="position:absolute;left:61.8px;top:481.79999999999995px;font-size:11px;line-height:13px;white-space:pre;transform:scaleX(1.0);transform-origin:0 0">+Состав смеси-коррекция AFR на холодном (вычитается)</div><div style="position:absolute;left:32px;top:504px;width:10px;height:1px;background:repeating-linear-gradient(90deg,#808080 0 1px,transparent 1px 2px)"></div><svg style="position:absolute;left:42px;top:497px" width="14" height="14"><rect width="14" height="14" fill="#0000ff"/><rect x="5" y="4" width="8" height="9" fill="#fff"/><rect x="1" y="1" width="3" height="2" fill="#d8d4bc"/><rect x="5" y="1" width="3" height="2" fill="#d8d4bc"/><rect x="9" y="1" width="4" height="2" fill="#d8d4bc"/><rect x="1" y="4" width="3" height="2" fill="#d8d4bc"/><rect x="1" y="7" width="3" height="2" fill="#d8d4bc"/><rect x="1" y="10" width="3" height="3" fill="#d8d4bc"/><rect x="8" y="4" width="1" height="9" fill="#000"/><rect x="5" y="6" width="8" height="1" fill="#000"/><rect x="5" y="9" width="8" height="1" fill="#000"/></svg><div style="position:absolute;left:61.8px;top:497.79999999999995px;font-size:11px;line-height:13px;white-space:pre;transform:scaleX(1.0);transform-origin:0 0">+Состав смеси-задержка коррекции AFR на холодном</div><div style="position:absolute;left:32px;top:520px;width:10px;height:1px;background:repeating-linear-gradient(90deg,#808080 0 1px,transparent 1px 2px)"></div><svg style="position:absolute;left:42px;top:513px" width="14" height="14"><rect width="14" height="14" fill="#0000ff"/><rect x="5" y="4" width="8" height="9" fill="#fff"/><rect x="1" y="1" width="3" height="2" fill="#d8d4bc"/><rect x="5" y="1" width="3" height="2" fill="#d8d4bc"/><rect x="9" y="1" width="4" height="2" fill="#d8d4bc"/><rect x="1" y="4" width="3" height="2" fill="#d8d4bc"/><rect x="1" y="7" width="3" height="2" fill="#d8d4bc"/><rect x="1" y="10" width="3" height="3" fill="#d8d4bc"/><rect x="8" y="4" width="1" height="9" fill="#000"/><rect x="5" y="6" width="8" height="1" fill="#000"/><rect x="5" y="9" width="8" height="1" fill="#000"/></svg><div style="position:absolute;left:61.8px;top:513.8px;font-size:11px;line-height:13px;white-space:pre;transform:scaleX(1.0);transform-origin:0 0">+Состав смеси-АФР на Теплом двигателе</div><div style="position:absolute;left:32px;top:536px;width:10px;height:1px;background:repeating-linear-gradient(90deg,#808080 0 1px,transparent 1px 2px)"></div><svg style="position:absolute;left:42px;top:529px" width="14" height="14"><rect width="14" height="14" fill="#0000ff"/><rect x="5" y="4" width="8" height="9" fill="#fff"/><rect x="1" y="1" width="3" height="2" fill="#d8d4bc"/><rect x="5" y="1" width="3" height="2" fill="#d8d4bc"/><rect x="9" y="1" width="4" height="2" fill="#d8d4bc"/><rect x="1" y="4" width="3" height="2" fill="#d8d4bc"/><rect x="1" y="7" width="3" height="2" fill="#d8d4bc"/><rect x="1" y="10" width="3" height="3" fill="#d8d4bc"/><rect x="8" y="4" width="1" height="9" fill="#000"/><rect x="5" y="6" width="8" height="1" fill="#000"/><rect x="5" y="9" width="8" height="1" fill="#000"/></svg><div style="position:absolute;left:61.8px;top:529.8px;font-size:11px;line-height:13px;white-space:pre;transform:scaleX(1.0);transform-origin:0 0">+Состав смеси-коррекция AFR на теплом (вычитается)</div><div style="position:absolute;left:32px;top:552px;width:10px;height:1px;background:repeating-linear-gradient(90deg,#808080 0 1px,transparent 1px 2px)"></div><svg style="position:absolute;left:42px;top:545px" width="14" height="14"><rect width="14" height="14" fill="#0000ff"/><rect x="5" y="4" width="8" height="9" fill="#fff"/><rect x="1" y="1" width="3" height="2" fill="#d8d4bc"/><rect x="5" y="1" width="3" height="2" fill="#d8d4bc"/><rect x="9" y="1" width="4" height="2" fill="#d8d4bc"/><rect x="1" y="4" width="3" height="2" fill="#d8d4bc"/><rect x="1" y="7" width="3" height="2" fill="#d8d4bc"/><rect x="1" y="10" width="3" height="3" fill="#d8d4bc"/><rect x="8" y="4" width="1" height="9" fill="#000"/><rect x="5" y="6" width="8" height="1" fill="#000"/><rect x="5" y="9" width="8" height="1" fill="#000"/></svg><div style="position:absolute;left:61.8px;top:545.8px;font-size:11px;line-height:13px;white-space:pre;transform:scaleX(1.0);transform-origin:0 0">+Состав смеси-задержка коррекции AFR на теплом</div><div style="position:absolute;left:32px;top:568px;width:10px;height:1px;background:repeating-linear-gradient(90deg,#808080 0 1px,transparent 1px 2px)"></div><svg style="position:absolute;left:42px;top:561px" width="14" height="14"><rect width="14" height="14" fill="#0000ff"/><rect x="5" y="4" width="8" height="9" fill="#fff"/><rect x="1" y="1" width="3" height="2" fill="#d8d4bc"/><rect x="5" y="1" width="3" height="2" fill="#d8d4bc"/><rect x="9" y="1" width="4" height="2" fill="#d8d4bc"/><rect x="1" y="4" width="3" height="2" fill="#d8d4bc"/><rect x="1" y="7" width="3" height="2" fill="#d8d4bc"/><rect x="1" y="10" width="3" height="3" fill="#d8d4bc"/><rect x="8" y="4" width="1" height="9" fill="#000"/><rect x="5" y="6" width="8" height="1" fill="#000"/><rect x="5" y="9" width="8" height="1" fill="#000"/></svg><div style="position:absolute;left:61.8px;top:561.8px;font-size:11px;line-height:13px;white-space:pre;transform:scaleX(1.0);transform-origin:0 0">+Состав смеси-АФР на Прогретом двигателе RCO</div><div style="position:absolute;left:32px;top:584px;width:10px;height:1px;background:repeating-linear-gradient(90deg,#808080 0 1px,transparent 1px 2px)"></div><svg style="position:absolute;left:42px;top:577px" width="14" height="14"><rect width="14" height="14" fill="#0000ff"/><rect x="5" y="4" width="8" height="9" fill="#fff"/><rect x="1" y="1" width="3" height="2" fill="#d8d4bc"/><rect x="5" y="1" width="3" height="2" fill="#d8d4bc"/><rect x="9" y="1" width="4" height="2" fill="#d8d4bc"/><rect x="1" y="4" width="3" height="2" fill="#d8d4bc"/><rect x="1" y="7" width="3" height="2" fill="#d8d4bc"/><rect x="1" y="10" width="3" height="3" fill="#d8d4bc"/><rect x="8" y="4" width="1" height="9" fill="#000"/><rect x="5" y="6" width="8" height="1" fill="#000"/><rect x="5" y="9" width="8" height="1" fill="#000"/></svg><div style="position:absolute;left:61.8px;top:577.8px;font-size:11px;line-height:13px;white-space:pre;transform:scaleX(1.0);transform-origin:0 0">+Состав смеси-АФР при перегреве (t &gt; 113)</div><div style="position:absolute;left:32px;top:600px;width:10px;height:1px;background:repeating-linear-gradient(90deg,#808080 0 1px,transparent 1px 2px)"></div><svg style="position:absolute;left:42px;top:593px" width="14" height="14"><rect width="14" height="14" fill="#0000ff"/><rect x="5" y="4" width="8" height="9" fill="#fff"/><rect x="1" y="1" width="3" height="2" fill="#d8d4bc"/><rect x="5" y="1" width="3" height="2" fill="#d8d4bc"/><rect x="9" y="1" width="4" height="2" fill="#d8d4bc"/><rect x="1" y="4" width="3" height="2" fill="#d8d4bc"/><rect x="1" y="7" width="3" height="2" fill="#d8d4bc"/><rect x="1" y="10" width="3" height="3" fill="#d8d4bc"/><rect x="8" y="4" width="1" height="9" fill="#000"/><rect x="5" y="6" width="8" height="1" fill="#000"/><rect x="5" y="9" width="8" height="1" fill="#000"/></svg><div style="position:absolute;left:61.8px;top:593.8px;font-size:11px;line-height:13px;white-space:pre;transform:scaleX(1.005);transform-origin:0 0">+Мощ. Реж.-положение ДЗ 1пер. и нейтрали</div><div style="position:absolute;left:32px;top:616px;width:10px;height:1px;background:repeating-linear-gradient(90deg,#808080 0 1px,transparent 1px 2px)"></div><svg style="position:absolute;left:42px;top:609px" width="14" height="14"><rect width="14" height="14" fill="#0000ff"/><rect x="5" y="4" width="8" height="9" fill="#fff"/><rect x="1" y="1" width="3" height="2" fill="#d8d4bc"/><rect x="5" y="1" width="3" height="2" fill="#d8d4bc"/><rect x="9" y="1" width="4" height="2" fill="#d8d4bc"/><rect x="1" y="4" width="3" height="2" fill="#d8d4bc"/><rect x="1" y="7" width="3" height="2" fill="#d8d4bc"/><rect x="1" y="10" width="3" height="3" fill="#d8d4bc"/><rect x="8" y="4" width="1" height="9" fill="#000"/><rect x="5" y="6" width="8" height="1" fill="#000"/><rect x="5" y="9" width="8" height="1" fill="#000"/></svg><div style="position:absolute;left:61.8px;top:609.8px;font-size:11px;line-height:13px;white-space:pre;transform:scaleX(1.0);transform-origin:0 0">+Мощ. Реж.-положение ДЗ 2пер.</div><div style="position:absolute;left:32px;top:632px;width:10px;height:1px;background:repeating-linear-gradient(90deg,#808080 0 1px,transparent 1px 2px)"></div><svg style="position:absolute;left:42px;top:625px" width="14" height="14"><rect width="14" height="14" fill="#0000ff"/><rect x="5" y="4" width="8" height="9" fill="#fff"/><rect x="1" y="1" width="3" height="2" fill="#d8d4bc"/><rect x="5" y="1" width="3" height="2" fill="#d8d4bc"/><rect x="9" y="1" width="4" height="2" fill="#d8d4bc"/><rect x="1" y="4" width="3" height="2" fill="#d8d4bc"/><rect x="1" y="7" width="3" height="2" fill="#d8d4bc"/><rect x="1" y="10" width="3" height="3" fill="#d8d4bc"/><rect x="8" y="4" width="1" height="9" fill="#000"/><rect x="5" y="6" width="8" height="1" fill="#000"/><rect x="5" y="9" width="8" height="1" fill="#000"/></svg><div style="position:absolute;left:61.8px;top:625.8px;font-size:11px;line-height:13px;white-space:pre;transform:scaleX(1.0);transform-origin:0 0">+Мощ. Реж.-положение ДЗ 3пер.</div><div style="position:absolute;left:32px;top:648px;width:10px;height:1px;background:repeating-linear-gradient(90deg,#808080 0 1px,transparent 1px 2px)"></div><svg style="position:absolute;left:42px;top:641px" width="14" height="14"><rect width="14" height="14" fill="#0000ff"/><rect x="5" y="4" width="8" height="9" fill="#fff"/><rect x="1" y="1" width="3" height="2" fill="#d8d4bc"/><rect x="5" y="1" width="3" height="2" fill="#d8d4bc"/><rect x="9" y="1" width="4" height="2" fill="#d8d4bc"/><rect x="1" y="4" width="3" height="2" fill="#d8d4bc"/><rect x="1" y="7" width="3" height="2" fill="#d8d4bc"/><rect x="1" y="10" width="3" height="3" fill="#d8d4bc"/><rect x="8" y="4" width="1" height="9" fill="#000"/><rect x="5" y="6" width="8" height="1" fill="#000"/><rect x="5" y="9" width="8" height="1" fill="#000"/></svg><div style="position:absolute;left:61.8px;top:641.8px;font-size:11px;line-height:13px;white-space:pre;transform:scaleX(1.0);transform-origin:0 0">+Мощ. Реж.-положение ДЗ 4пер.</div><div style="position:absolute;left:32px;top:664px;width:10px;height:1px;background:repeating-linear-gradient(90deg,#808080 0 1px,transparent 1px 2px)"></div><svg style="position:absolute;left:42px;top:657px" width="14" height="14"><rect width="14" height="14" fill="#0000ff"/><rect x="5" y="4" width="8" height="9" fill="#fff"/><rect x="1" y="1" width="3" height="2" fill="#d8d4bc"/><rect x="5" y="1" width="3" height="2" fill="#d8d4bc"/><rect x="9" y="1" width="4" height="2" fill="#d8d4bc"/><rect x="1" y="4" width="3" height="2" fill="#d8d4bc"/><rect x="1" y="7" width="3" height="2" fill="#d8d4bc"/><rect x="1" y="10" width="3" height="3" fill="#d8d4bc"/><rect x="8" y="4" width="1" height="9" fill="#000"/><rect x="5" y="6" width="8" height="1" fill="#000"/><rect x="5" y="9" width="8" height="1" fill="#000"/></svg><div style="position:absolute;left:61.8px;top:657.8px;font-size:11px;line-height:13px;white-space:pre;transform:scaleX(1.0);transform-origin:0 0">+Мощ. Реж.-положение ДЗ 5пер.</div><div style="position:absolute;left:32px;top:680px;width:10px;height:1px;background:repeating-linear-gradient(90deg,#808080 0 1px,transparent 1px 2px)"></div><svg style="position:absolute;left:42px;top:673px" width="14" height="14"><rect width="14" height="14" fill="#0000ff"/><rect x="5" y="4" width="8" height="9" fill="#fff"/><rect x="1" y="1" width="3" height="2" fill="#d8d4bc"/><rect x="5" y="1" width="3" height="2" fill="#d8d4bc"/><rect x="9" y="1" width="4" height="2" fill="#d8d4bc"/><rect x="1" y="4" width="3" height="2" fill="#d8d4bc"/><rect x="1" y="7" width="3" height="2" fill="#d8d4bc"/><rect x="1" y="10" width="3" height="3" fill="#d8d4bc"/><rect x="8" y="4" width="1" height="9" fill="#000"/><rect x="5" y="6" width="8" height="1" fill="#000"/><rect x="5" y="9" width="8" height="1" fill="#000"/></svg><div style="position:absolute;left:61.8px;top:673.8px;font-size:11px;line-height:13px;white-space:pre;transform:scaleX(1.0);transform-origin:0 0">+Мощ. Реж.-Задержка входа</div><div style="position:absolute;left:32px;top:696px;width:10px;height:1px;background:repeating-linear-gradient(90deg,#808080 0 1px,transparent 1px 2px)"></div><svg style="position:absolute;left:42px;top:689px" width="14" height="14"><rect width="14" height="14" fill="#0000ff"/><rect x="5" y="4" width="8" height="9" fill="#fff"/><rect x="1" y="1" width="3" height="2" fill="#d8d4bc"/><rect x="5" y="1" width="3" height="2" fill="#d8d4bc"/><rect x="9" y="1" width="4" height="2" fill="#d8d4bc"/><rect x="1" y="4" width="3" height="2" fill="#d8d4bc"/><rect x="1" y="7" width="3" height="2" fill="#d8d4bc"/><rect x="1" y="10" width="3" height="3" fill="#d8d4bc"/><rect x="8" y="4" width="1" height="9" fill="#000"/><rect x="5" y="6" width="8" height="1" fill="#000"/><rect x="5" y="9" width="8" height="1" fill="#000"/></svg><div style="position:absolute;left:61.8px;top:689.8px;font-size:11px;line-height:13px;white-space:pre;transform:scaleX(1.0);transform-origin:0 0">+Состав смеси-АФР в Мощностном режиме</div><div style="position:absolute;left:32px;top:712px;width:10px;height:1px;background:repeating-linear-gradient(90deg,#808080 0 1px,transparent 1px 2px)"></div><svg style="position:absolute;left:42px;top:705px" width="14" height="14"><rect width="14" height="14" fill="#0000ff"/><rect x="5" y="4" width="8" height="9" fill="#fff"/><rect x="1" y="1" width="3" height="2" fill="#d8d4bc"/><rect x="5" y="1" width="3" height="2" fill="#d8d4bc"/><rect x="9" y="1" width="4" height="2" fill="#d8d4bc"/><rect x="1" y="4" width="3" height="2" fill="#d8d4bc"/><rect x="1" y="7" width="3" height="2" fill="#d8d4bc"/><rect x="1" y="10" width="3" height="3" fill="#d8d4bc"/><rect x="8" y="4" width="1" height="9" fill="#000"/><rect x="5" y="6" width="8" height="1" fill="#000"/><rect x="5" y="9" width="8" height="1" fill="#000"/></svg><div style="position:absolute;left:61.8px;top:705.8px;font-size:11px;line-height:13px;white-space:pre;transform:scaleX(1.0);transform-origin:0 0">+Состав смеси-Коррекция АФР в Мощностном режиме</div><div style="position:absolute;left:32px;top:728px;width:10px;height:1px;background:repeating-linear-gradient(90deg,#808080 0 1px,transparent 1px 2px)"></div><svg style="position:absolute;left:42px;top:721px" width="14" height="14"><rect width="14" height="14" fill="#0000ff"/><rect x="5" y="4" width="8" height="9" fill="#fff"/><rect x="1" y="1" width="3" height="2" fill="#d8d4bc"/><rect x="5" y="1" width="3" height="2" fill="#d8d4bc"/><rect x="9" y="1" width="4" height="2" fill="#d8d4bc"/><rect x="1" y="4" width="3" height="2" fill="#d8d4bc"/><rect x="1" y="7" width="3" height="2" fill="#d8d4bc"/><rect x="1" y="10" width="3" height="3" fill="#d8d4bc"/><rect x="8" y="4" width="1" height="9" fill="#000"/><rect x="5" y="6" width="8" height="1" fill="#000"/><rect x="5" y="9" width="8" height="1" fill="#000"/></svg><div style="position:absolute;left:61.8px;top:721.8px;font-size:11px;line-height:13px;white-space:pre;transform:scaleX(1.0);transform-origin:0 0">+Состав смеси-АФР  при перегреве катализатора</div><div style="position:absolute;left:32px;top:744px;width:10px;height:1px;background:repeating-linear-gradient(90deg,#808080 0 1px,transparent 1px 2px)"></div><svg style="position:absolute;left:42px;top:737px" width="14" height="14"><rect width="14" height="14" fill="#0000ff"/><rect x="5" y="4" width="8" height="9" fill="#fff"/><rect x="1" y="1" width="3" height="2" fill="#d8d4bc"/><rect x="5" y="1" width="3" height="2" fill="#d8d4bc"/><rect x="9" y="1" width="4" height="2" fill="#d8d4bc"/><rect x="1" y="4" width="3" height="2" fill="#d8d4bc"/><rect x="1" y="7" width="3" height="2" fill="#d8d4bc"/><rect x="1" y="10" width="3" height="3" fill="#d8d4bc"/><rect x="8" y="4" width="1" height="9" fill="#000"/><rect x="5" y="6" width="8" height="1" fill="#000"/><rect x="5" y="9" width="8" height="1" fill="#000"/></svg><div style="position:absolute;left:61.8px;top:737.8px;font-size:11px;line-height:13px;white-space:pre;transform:scaleX(1.0);transform-origin:0 0">+Состав смеси-Задержка убывания поправки</div><div style="position:absolute;left:32px;top:760px;width:10px;height:1px;background:repeating-linear-gradient(90deg,#808080 0 1px,transparent 1px 2px)"></div><svg style="position:absolute;left:42px;top:753px" width="14" height="14"><rect width="14" height="14" fill="#0000ff"/><rect x="5" y="4" width="8" height="9" fill="#fff"/><rect x="1" y="1" width="3" height="2" fill="#d8d4bc"/><rect x="5" y="1" width="3" height="2" fill="#d8d4bc"/><rect x="9" y="1" width="4" height="2" fill="#d8d4bc"/><rect x="1" y="4" width="3" height="2" fill="#d8d4bc"/><rect x="1" y="7" width="3" height="2" fill="#d8d4bc"/><rect x="1" y="10" width="3" height="3" fill="#d8d4bc"/><rect x="8" y="4" width="1" height="9" fill="#000"/><rect x="5" y="6" width="8" height="1" fill="#000"/><rect x="5" y="9" width="8" height="1" fill="#000"/></svg><div style="position:absolute;left:61.8px;top:753.8px;font-size:11px;line-height:13px;white-space:pre;transform:scaleX(1.0);transform-origin:0 0">+Состав смеси-Множитель убывания коррекции АФР</div><div style="position:absolute;left:32px;top:776px;width:10px;height:1px;background:repeating-linear-gradient(90deg,#808080 0 1px,transparent 1px 2px)"></div><svg style="position:absolute;left:42px;top:769px" width="14" height="14"><rect width="14" height="14" fill="#0000ff"/><rect x="5" y="4" width="8" height="9" fill="#fff"/><rect x="1" y="1" width="3" height="2" fill="#d8d4bc"/><rect x="5" y="1" width="3" height="2" fill="#d8d4bc"/><rect x="9" y="1" width="4" height="2" fill="#d8d4bc"/><rect x="1" y="4" width="3" height="2" fill="#d8d4bc"/><rect x="1" y="7" width="3" height="2" fill="#d8d4bc"/><rect x="1" y="10" width="3" height="3" fill="#d8d4bc"/><rect x="8" y="4" width="1" height="9" fill="#000"/><rect x="5" y="6" width="8" height="1" fill="#000"/><rect x="5" y="9" width="8" height="1" fill="#000"/></svg><div style="position:absolute;left:61.8px;top:769.8px;font-size:11px;line-height:13px;white-space:pre;transform:scaleX(1.0);transform-origin:0 0">+Пуск-АФР на пуске</div><div style="position:absolute;left:32px;top:792px;width:10px;height:1px;background:repeating-linear-gradient(90deg,#808080 0 1px,transparent 1px 2px)"></div><svg style="position:absolute;left:42px;top:785px" width="14" height="14"><rect width="14" height="14" fill="#0000ff"/><rect x="5" y="4" width="8" height="9" fill="#fff"/><rect x="1" y="1" width="3" height="2" fill="#d8d4bc"/><rect x="5" y="1" width="3" height="2" fill="#d8d4bc"/><rect x="9" y="1" width="4" height="2" fill="#d8d4bc"/><rect x="1" y="4" width="3" height="2" fill="#d8d4bc"/><rect x="1" y="7" width="3" height="2" fill="#d8d4bc"/><rect x="1" y="10" width="3" height="3" fill="#d8d4bc"/><rect x="8" y="4" width="1" height="9" fill="#000"/><rect x="5" y="6" width="8" height="1" fill="#000"/><rect x="5" y="9" width="8" height="1" fill="#000"/></svg><div style="position:absolute;left:61.8px;top:785.8px;font-size:11px;line-height:13px;white-space:pre;transform:scaleX(1.0);transform-origin:0 0">+Пуск-Множитель Асинхр. топливоподача</div><div style="position:absolute;left:32px;top:808px;width:10px;height:1px;background:repeating-linear-gradient(90deg,#808080 0 1px,transparent 1px 2px)"></div><svg style="position:absolute;left:42px;top:801px" width="14" height="14"><rect width="14" height="14" fill="#0000ff"/><rect x="5" y="4" width="8" height="9" fill="#fff"/><rect x="1" y="1" width="3" height="2" fill="#d8d4bc"/><rect x="5" y="1" width="3" height="2" fill="#d8d4bc"/><rect x="9" y="1" width="4" height="2" fill="#d8d4bc"/><rect x="1" y="4" width="3" height="2" fill="#d8d4bc"/><rect x="1" y="7" width="3" height="2" fill="#d8d4bc"/><rect x="1" y="10" width="3" height="3" fill="#d8d4bc"/><rect x="8" y="4" width="1" height="9" fill="#000"/><rect x="5" y="6" width="8" height="1" fill="#000"/><rect x="5" y="9" width="8" height="1" fill="#000"/></svg><div style="position:absolute;left:61.8px;top:801.8px;font-size:11px;line-height:13px;white-space:pre;transform:scaleX(1.025);transform-origin:0 0">+Пуск-Задержка асинхр. топливоподачи</div><div style="position:absolute;left:32px;top:824px;width:10px;height:1px;background:repeating-linear-gradient(90deg,#808080 0 1px,transparent 1px 2px)"></div><svg style="position:absolute;left:42px;top:817px" width="14" height="14"><rect width="14" height="14" fill="#0000ff"/><rect x="5" y="4" width="8" height="9" fill="#fff"/><rect x="1" y="1" width="3" height="2" fill="#d8d4bc"/><rect x="5" y="1" width="3" height="2" fill="#d8d4bc"/><rect x="9" y="1" width="4" height="2" fill="#d8d4bc"/><rect x="1" y="4" width="3" height="2" fill="#d8d4bc"/><rect x="1" y="7" width="3" height="2" fill="#d8d4bc"/><rect x="1" y="10" width="3" height="3" fill="#d8d4bc"/><rect x="8" y="4" width="1" height="9" fill="#000"/><rect x="5" y="6" width="8" height="1" fill="#000"/><rect x="5" y="9" width="8" height="1" fill="#000"/></svg><div style="position:absolute;left:61.8px;top:817.8px;font-size:11px;line-height:13px;white-space:pre;transform:scaleX(1.0);transform-origin:0 0">+Пуск-УОЗ на пуске</div><div style="position:absolute;left:32px;top:840px;width:10px;height:1px;background:repeating-linear-gradient(90deg,#808080 0 1px,transparent 1px 2px)"></div><svg style="position:absolute;left:42px;top:833px" width="14" height="14"><rect width="14" height="14" fill="#0000ff"/><rect x="5" y="4" width="8" height="9" fill="#fff"/><rect x="1" y="1" width="3" height="2" fill="#d8d4bc"/><rect x="5" y="1" width="3" height="2" fill="#d8d4bc"/><rect x="9" y="1" width="4" height="2" fill="#d8d4bc"/><rect x="1" y="4" width="3" height="2" fill="#d8d4bc"/><rect x="1" y="7" width="3" height="2" fill="#d8d4bc"/><rect x="1" y="10" width="3" height="3" fill="#d8d4bc"/><rect x="8" y="4" width="1" height="9" fill="#000"/><rect x="5" y="6" width="8" height="1" fill="#000"/><rect x="5" y="9" width="8" height="1" fill="#000"/></svg><div style="position:absolute;left:61.8px;top:833.8px;font-size:11px;line-height:13px;white-space:pre;transform:scaleX(1.0);transform-origin:0 0">+XX-Обороты XX (МКПП)</div><div style="position:absolute;left:32px;top:856px;width:10px;height:1px;background:repeating-linear-gradient(90deg,#808080 0 1px,transparent 1px 2px)"></div><svg style="position:absolute;left:42px;top:849px" width="14" height="14"><rect width="14" height="14" fill="#0000ff"/><rect x="5" y="4" width="8" height="9" fill="#fff"/><rect x="1" y="1" width="3" height="2" fill="#d8d4bc"/><rect x="5" y="1" width="3" height="2" fill="#d8d4bc"/><rect x="9" y="1" width="4" height="2" fill="#d8d4bc"/><rect x="1" y="4" width="3" height="2" fill="#d8d4bc"/><rect x="1" y="7" width="3" height="2" fill="#d8d4bc"/><rect x="1" y="10" width="3" height="3" fill="#d8d4bc"/><rect x="8" y="4" width="1" height="9" fill="#000"/><rect x="5" y="6" width="8" height="1" fill="#000"/><rect x="5" y="9" width="8" height="1" fill="#000"/></svg><div style="position:absolute;left:61.8px;top:849.8px;font-size:11px;line-height:13px;white-space:pre;transform:scaleX(1.0);transform-origin:0 0">+XX-Обороты XX (АКПП)</div><div style="position:absolute;left:32px;top:872px;width:10px;height:1px;background:repeating-linear-gradient(90deg,#808080 0 1px,transparent 1px 2px)"></div><svg style="position:absolute;left:42px;top:865px" width="14" height="14"><rect width="14" height="14" fill="#0000ff"/><rect x="5" y="4" width="8" height="9" fill="#fff"/><rect x="1" y="1" width="3" height="2" fill="#d8d4bc"/><rect x="5" y="1" width="3" height="2" fill="#d8d4bc"/><rect x="9" y="1" width="4" height="2" fill="#d8d4bc"/><rect x="1" y="4" width="3" height="2" fill="#d8d4bc"/><rect x="1" y="7" width="3" height="2" fill="#d8d4bc"/><rect x="1" y="10" width="3" height="3" fill="#d8d4bc"/><rect x="8" y="4" width="1" height="9" fill="#000"/><rect x="5" y="6" width="8" height="1" fill="#000"/><rect x="5" y="9" width="8" height="1" fill="#000"/></svg><div style="position:absolute;left:61.8px;top:865.8px;font-size:11px;line-height:13px;white-space:pre;transform:scaleX(1.0);transform-origin:0 0">+XX-Прибавка оборотов от скорости</div><div style="position:absolute;left:32px;top:888px;width:10px;height:1px;background:repeating-linear-gradient(90deg,#808080 0 1px,transparent 1px 2px)"></div><svg style="position:absolute;left:42px;top:881px" width="14" height="14"><rect width="14" height="14" fill="#0000ff"/><rect x="5" y="4" width="8" height="9" fill="#fff"/><rect x="1" y="1" width="3" height="2" fill="#d8d4bc"/><rect x="5" y="1" width="3" height="2" fill="#d8d4bc"/><rect x="9" y="1" width="4" height="2" fill="#d8d4bc"/><rect x="1" y="4" width="3" height="2" fill="#d8d4bc"/><rect x="1" y="7" width="3" height="2" fill="#d8d4bc"/><rect x="1" y="10" width="3" height="3" fill="#d8d4bc"/><rect x="8" y="4" width="1" height="9" fill="#000"/><rect x="5" y="6" width="8" height="1" fill="#000"/><rect x="5" y="9" width="8" height="1" fill="#000"/></svg><div style="position:absolute;left:61.8px;top:881.8px;font-size:11px;line-height:13px;white-space:pre;transform:scaleX(0.999);transform-origin:0 0">+XX-Прибавка оборотов после пуска от t ОЖ</div><div style="position:absolute;left:32px;top:904px;width:10px;height:1px;background:repeating-linear-gradient(90deg,#808080 0 1px,transparent 1px 2px)"></div><svg style="position:absolute;left:42px;top:897px" width="14" height="14"><rect width="14" height="14" fill="#0000ff"/><rect x="5" y="4" width="8" height="9" fill="#fff"/><rect x="1" y="1" width="3" height="2" fill="#d8d4bc"/><rect x="5" y="1" width="3" height="2" fill="#d8d4bc"/><rect x="9" y="1" width="4" height="2" fill="#d8d4bc"/><rect x="1" y="4" width="3" height="2" fill="#d8d4bc"/><rect x="1" y="7" width="3" height="2" fill="#d8d4bc"/><rect x="1" y="10" width="3" height="3" fill="#d8d4bc"/><rect x="8" y="4" width="1" height="9" fill="#000"/><rect x="5" y="6" width="8" height="1" fill="#000"/><rect x="5" y="9" width="8" height="1" fill="#000"/></svg><div style="position:absolute;left:61.8px;top:897.8px;font-size:11px;line-height:13px;white-space:pre;transform:scaleX(1.0);transform-origin:0 0">Расчёт температуры заряда-Коэффициент коррекции</div></div><div style="position:absolute;left:334px;top:104px;width:16px;height:906px;background:repeating-conic-gradient(#fff 0 25%,#d4d0c8 0 50%) 0 0/2px 2px;"></div><div style="position:absolute;left:334px;top:104px;width:16px;height:16px;background:#d4d0c8;box-shadow:inset -1px -1px #404040,inset 1px 1px #fff,inset -2px -2px #808080,inset 2px 2px #d4d0c8;"></div><svg style="position:absolute;left:334px;top:104px" width="16" height="16" viewBox="0 0 16 16"><path d="M4.5 10.0h7l-3.5-4z" fill="#000"/></svg><div style="position:absolute;left:334px;top:135px;width:16px;height:433px;background:#d4d0c8;box-shadow:inset -1px -1px #404040,inset 1px 1px #fff,inset -2px -2px #808080,inset 2px 2px #d4d0c8;"></div><div style="position:absolute;left:334px;top:994px;width:16px;height:16px;background:#d4d0c8;box-shadow:inset -1px -1px #404040,inset 1px 1px #fff,inset -2px -2px #808080,inset 2px 2px #d4d0c8;"></div><svg style="position:absolute;left:334px;top:994px" width="16" height="16" viewBox="0 0 16 16"><path d="M4.5 6.0h7l-3.5 4z" fill="#000"/></svg><div style="position:absolute;left:4px;top:1010px;width:330px;height:16px;background:repeating-conic-gradient(#fff 0 25%,#d4d0c8 0 50%) 0 0/2px 2px;"></div><div style="position:absolute;left:4px;top:1010px;width:16px;height:16px;background:#d4d0c8;box-shadow:inset -1px -1px #404040,inset 1px 1px #fff,inset -2px -2px #808080,inset 2px 2px #d4d0c8;"></div><svg style="position:absolute;left:4px;top:1010px" width="16" height="16" viewBox="0 0 16 16"><path d="M10.0 4.5v7l-4-3.5z" fill="#000"/></svg><div style="position:absolute;left:20px;top:1010px;width:221px;height:16px;background:#d4d0c8;box-shadow:inset -1px -1px #404040,inset 1px 1px #fff,inset -2px -2px #808080,inset 2px 2px #d4d0c8;"></div><div style="position:absolute;left:318px;top:1010px;width:16px;height:16px;background:#d4d0c8;box-shadow:inset -1px -1px #404040,inset 1px 1px #fff,inset -2px -2px #808080,inset 2px 2px #d4d0c8;"></div><svg style="position:absolute;left:318px;top:1010px" width="16" height="16" viewBox="0 0 16 16"><path d="M6.0 4.5v7l4-3.5z" fill="#000"/></svg><div style="position:absolute;left:334px;top:1010px;width:16px;height:16px;background:#d4d0c8"></div><svg style="position:absolute;left:334px;top:1010px" width="16" height="16" viewBox="0 0 16 16"><path d="M15 4L4 15M15 8L8 15M15 12L12 15" stroke="#808080" stroke-width="1"/><path d="M15 5L5 15M15 9L9 15M15 13L13 15" stroke="#fff" stroke-width="1"/></svg><div style="position:absolute;left:352px;top:64px;width:2px;height:966px;background:#404040"></div><div style="position:absolute;left:0px;top:1028px;width:354px;height:2px;background:#404040"></div><div style="position:absolute;left:354px;top:64px;width:588px;height:966px;background:#808080"></div><div style="position:absolute;left:942px;top:0px;width:2px;height:1050px;background:#fff"></div><div style="position:absolute;left:354px;top:64px;width:592px;height:363px;background:#d4d0c8;box-shadow:inset 1px 1px #d4d0c8,inset 2px 2px #fff,inset -1px -1px #404040,inset -2px -2px #808080"></div><div style="position:absolute;left:358px;top:67px;width:584px;height:18px;background:linear-gradient(90deg,#808080,#b4b4b4)"></div><svg style="position:absolute;left:360px;top:69px" width="16" height="14"><rect x="0" y="3" width="16" height="8" fill="#000"/><rect x="1" y="0" width="1.5" height="3" fill="#000"/><rect x="1" y="11" width="1.5" height="3" fill="#000"/><rect x="4" y="0" width="1.5" height="3" fill="#000"/><rect x="4" y="11" width="1.5" height="3" fill="#000"/><rect x="7" y="0" width="1.5" height="3" fill="#000"/><rect x="7" y="11" width="1.5" height="3" fill="#000"/><rect x="10" y="0" width="1.5" height="3" fill="#000"/><rect x="10" y="11" width="1.5" height="3" fill="#000"/><rect x="13" y="0" width="1.5" height="3" fill="#000"/><rect x="13" y="11" width="1.5" height="3" fill="#000"/></svg><div style="position:absolute;left:378.5px;top:69px;font-size:11px;line-height:13px;color:#d8d4cc;font-weight:bold;white-space:pre;transform:scaleX(1.145);transform-origin:0 0;">+Зажигание-Октан 95</div><div style="position:absolute;left:361px;top:88px;width:3px;height:22px;box-shadow:inset 1px 1px #fff,inset -1px -1px #808080"></div><div style="position:absolute;left:553px;top:88px;width:3px;height:22px;box-shadow:inset 1px 1px #fff,inset -1px -1px #808080"></div><svg style="position:absolute;left:371px;top:91px" width="15" height="15" viewBox="0 0 15 15"><rect x="0.5" y="0.5" width="14" height="14" fill="#808000" stroke="#000"/><rect x="3" y="1" width="9" height="6" fill="#fff"/><rect x="3" y="9" width="9" height="5" fill="#000"/><rect x="9" y="10" width="2" height="3" fill="#fff"/></svg><svg style="position:absolute;left:395px;top:92px" width="12" height="14" viewBox="0 0 12 14"><path d="M1 1l10 12M11 1L1 13" stroke="#ff0000" stroke-width="2"/></svg><svg style="position:absolute;left:417px;top:91px" width="15" height="15" viewBox="0 0 15 15"><path d="M1 2v12h14" stroke="#000" stroke-dasharray="1,1" fill="none"/><path d="M1 6l3 3 3-2 2 2 3-1 2-3" stroke="#ff0000" stroke-width="1.3" fill="none"/></svg><svg style="position:absolute;left:439px;top:91px" width="16" height="15" viewBox="0 0 16 15"><path d="M8 0v14M4 14h8M1 4h14" stroke="#000" stroke-width="1.3"/><path d="M0 9l2-5 2 5zM12 9l2-5 2 5z" fill="#f0e020" stroke="#000" stroke-width="0.8"/></svg><svg style="position:absolute;left:463px;top:91px" width="15" height="15" viewBox="0 0 15 15"><rect x="1" y="1" width="8" height="10" fill="none" stroke="#0000ff" stroke-width="2"/><path d="M7 1L1 14h13z" fill="none" stroke="#000" stroke-width="2"/></svg><svg style="position:absolute;left:486px;top:91px" width="16" height="15" viewBox="0 0 16 15"><path d="M1 1l8 10M9 1L1 11" stroke="#000080" stroke-width="2"/><path d="M0 14h15L9 8z" fill="#ff0000"/></svg><svg style="position:absolute;left:509px;top:91px" width="16" height="15" viewBox="0 0 16 15"><path d="M1 1l4 6 4-6M5 7v7" stroke="#000080" stroke-width="2" fill="none"/><path d="M11 14V4" stroke="#ff0000" stroke-width="2"/><path d="M7 6l4-5 4 5z" fill="#ff0000"/></svg><div style="position:absolute;left:565px;top:92px;font-size:11px;line-height:13px;color:#000;font-weight:normal;white-space:pre;">Function:</div><div style="position:absolute;left:614px;top:88px;width:92px;height:21px;background:#fff;box-shadow:inset 1px 1px #808080,inset -1px -1px #fff,inset 2px 2px #404040,inset -2px -2px #d4d0c8;"></div><div style="position:absolute;left:617px;top:92px;font-size:11px;line-height:13px;color:#000;font-weight:normal;white-space:pre;">Offset (+/-)</div><div style="position:absolute;left:689px;top:90px;width:15px;height:17px;background:#d4d0c8;box-shadow:inset -1px -1px #404040,inset 1px 1px #fff,inset -2px -2px #808080,inset 2px 2px #d4d0c8;"></div><svg style="position:absolute;left:689px;top:90px" width="15" height="17" viewBox="0 0 15 17"><path d="M4 7h7l-3.5 4z" fill="#000"/></svg><div style="position:absolute;left:711px;top:92px;font-size:11px;line-height:13px;color:#000;font-weight:normal;white-space:pre;">Value:</div><div style="position:absolute;left:745px;top:88px;width:47px;height:21px;background:#fff;box-shadow:inset 1px 1px #808080,inset -1px -1px #fff,inset 2px 2px #404040,inset -2px -2px #d4d0c8;"></div><div style="position:absolute;left:749px;top:92px;font-size:11px;line-height:13px;color:#000;font-weight:normal;white-space:pre;">1.0</div><div style="position:absolute;left:794px;top:88px;width:51px;height:21px;background:#d4d0c8;box-shadow:inset -1px -1px #404040,inset 1px 1px #fff,inset -2px -2px #808080,inset 2px 2px #d4d0c8;"></div><div style="position:absolute;left:799px;top:92px;font-size:11px;line-height:13px;color:#000;font-weight:normal;white-space:pre;">Execute</div><div style="position:absolute;left:359px;top:112px;width:590px;height:290px;background:#808080;box-shadow:inset 1px 1px #404040,inset 2px 2px #404040"></div><div style="position:absolute;left:361px;top:114px;width:581px;height:14px;background:#d4d0c8;box-shadow:inset 1px 1px #fff"></div><div style="position:absolute;left:361px;top:127px;width:581px;height:1px;background:#808080"></div><div style="position:absolute;left:361px;top:128px;width:581px;height:1px;background:#fff"></div><div style="position:absolute;left:680px;top:115px;font-size:11px;line-height:13px;color:#000;font-weight:bold;white-space:pre;transform:scaleX(1.12);transform-origin:0 0;">+Çàæèãàíèå-Îêòàí 95</div><div style="position:absolute;left:361px;top:129px;width:581px;height:15px;background:#fff"></div><div style="position:absolute;left:361px;top:129px;width:45px;height:14px;box-sizing:border-box;border:1px solid #909090;background:#d4d0c8;box-shadow:inset 1px 1px #fff"></div><div style="position:absolute;left:361px;top:132px;width:45px;text-align:center;font-size:11px;line-height:13px;white-space:pre"></div><div style="position:absolute;left:406px;top:129px;width:45px;height:14px;box-sizing:border-box;border:1px solid #909090;background:#dedede;box-shadow:inset 1px 1px #fff"></div><div style="position:absolute;left:406px;top:132px;width:45px;text-align:center;font-size:11px;line-height:13px;white-space:pre">19.77</div><div style="position:absolute;left:452px;top:129px;width:45px;height:14px;box-sizing:border-box;border:1px solid #909090;background:#d4d0c8;box-shadow:inset 1px 1px #fff"></div><div style="position:absolute;left:452px;top:132px;width:45px;text-align:center;font-size:11px;line-height:13px;white-space:pre">29.78</div><div style="position:absolute;left:498px;top:129px;width:45px;height:14px;box-sizing:border-box;border:1px solid #909090;background:#d4d0c8;box-shadow:inset 1px 1px #fff"></div><div style="position:absolute;left:498px;top:132px;width:45px;text-align:center;font-size:11px;line-height:13px;white-space:pre">39.79</div><div style="position:absolute;left:544px;top:129px;width:45px;height:14px;box-sizing:border-box;border:1px solid #909090;background:#d4d0c8;box-shadow:inset 1px 1px #fff"></div><div style="position:absolute;left:544px;top:132px;width:45px;text-align:center;font-size:11px;line-height:13px;white-space:pre">44.79</div><div style="position:absolute;left:590px;top:129px;width:45px;height:14px;box-sizing:border-box;border:1px solid #909090;background:#d4d0c8;box-shadow:inset 1px 1px #fff"></div><div style="position:absolute;left:590px;top:132px;width:45px;text-align:center;font-size:11px;line-height:13px;white-space:pre">49.80</div><div style="position:absolute;left:636px;top:129px;width:45px;height:14px;box-sizing:border-box;border:1px solid #909090;background:#d4d0c8;box-shadow:inset 1px 1px #fff"></div><div style="position:absolute;left:636px;top:132px;width:45px;text-align:center;font-size:11px;line-height:13px;white-space:pre">54.80</div><div style="position:absolute;left:682px;top:129px;width:45px;height:14px;box-sizing:border-box;border:1px solid #909090;background:#d4d0c8;box-shadow:inset 1px 1px #fff"></div><div style="position:absolute;left:682px;top:132px;width:45px;text-align:center;font-size:11px;line-height:13px;white-space:pre">59.81</div><div style="position:absolute;left:728px;top:129px;width:45px;height:14px;box-sizing:border-box;border:1px solid #909090;background:#d4d0c8;box-shadow:inset 1px 1px #fff"></div><div style="position:absolute;left:728px;top:132px;width:45px;text-align:center;font-size:11px;line-height:13px;white-space:pre">64.81</div><div style="position:absolute;left:774px;top:129px;width:45px;height:14px;box-sizing:border-box;border:1px solid #909090;background:#d4d0c8;box-shadow:inset 1px 1px #fff"></div><div style="position:absolute;left:774px;top:132px;width:45px;text-align:center;font-size:11px;line-height:13px;white-space:pre">69.82</div><div style="position:absolute;left:820px;top:129px;width:45px;height:14px;box-sizing:border-box;border:1px solid #909090;background:#d4d0c8;box-shadow:inset 1px 1px #fff"></div><div style="position:absolute;left:820px;top:132px;width:45px;text-align:center;font-size:11px;line-height:13px;white-space:pre">74.82</div><div style="position:absolute;left:866px;top:129px;width:45px;height:14px;box-sizing:border-box;border:1px solid #909090;background:#d4d0c8;box-shadow:inset 1px 1px #fff"></div><div style="position:absolute;left:866px;top:132px;width:45px;text-align:center;font-size:11px;line-height:13px;white-space:pre">79.83</div><div style="position:absolute;left:912px;top:129px;width:45px;height:14px;box-sizing:border-box;border:1px solid #909090;background:#d4d0c8;box-shadow:inset 1px 1px #fff"></div><div style="position:absolute;left:912px;top:132px;width:45px;text-align:center;font-size:11px;line-height:13px;white-space:pre">84.83</div><div style="position:absolute;left:361px;top:144px;width:581px;height:225px;background:#fff"></div><div style="position:absolute;left:361px;top:144px;width:45px;height:14px;box-sizing:border-box;border:1px solid #909090;background:#dedede;box-shadow:inset 1px 1px #fff"></div><div style="position:absolute;left:361px;top:146px;width:41px;text-align:right;font-size:11px;line-height:13px;white-space:pre">400</div><div style="position:absolute;left:450.5px;top:144px;width:2px;height:15px;background:#dcdcdc"></div><div style="position:absolute;left:406px;top:158px;width:46px;height:1.5px;background:#dcdcdc"></div><div style="position:absolute;left:496.5px;top:144px;width:2px;height:15px;background:#dcdcdc"></div><div style="position:absolute;left:452px;top:158px;width:46px;height:1.5px;background:#dcdcdc"></div><div style="position:absolute;left:542.5px;top:144px;width:2px;height:15px;background:#dcdcdc"></div><div style="position:absolute;left:498px;top:158px;width:46px;height:1.5px;background:#dcdcdc"></div><div style="position:absolute;left:588.5px;top:144px;width:2px;height:15px;background:#dcdcdc"></div><div style="position:absolute;left:544px;top:158px;width:46px;height:1.5px;background:#dcdcdc"></div><div style="position:absolute;left:634.5px;top:144px;width:2px;height:15px;background:#dcdcdc"></div><div style="position:absolute;left:590px;top:158px;width:46px;height:1.5px;background:#dcdcdc"></div><div style="position:absolute;left:680.5px;top:144px;width:2px;height:15px;background:#dcdcdc"></div><div style="position:absolute;left:636px;top:158px;width:46px;height:1.5px;background:#dcdcdc"></div><div style="position:absolute;left:726.5px;top:144px;width:2px;height:15px;background:#dcdcdc"></div><div style="position:absolute;left:682px;top:158px;width:46px;height:1.5px;background:#dcdcdc"></div><div style="position:absolute;left:772.5px;top:144px;width:2px;height:15px;background:#dcdcdc"></div><div style="position:absolute;left:728px;top:158px;width:46px;height:1.5px;background:#dcdcdc"></div><div style="position:absolute;left:818.5px;top:144px;width:2px;height:15px;background:#dcdcdc"></div><div style="position:absolute;left:774px;top:158px;width:46px;height:1.5px;background:#dcdcdc"></div><div style="position:absolute;left:864.5px;top:144px;width:2px;height:15px;background:#dcdcdc"></div><div style="position:absolute;left:820px;top:158px;width:46px;height:1.5px;background:#dcdcdc"></div><div style="position:absolute;left:910.5px;top:144px;width:2px;height:15px;background:#dcdcdc"></div><div style="position:absolute;left:866px;top:158px;width:46px;height:1.5px;background:#dcdcdc"></div><div style="position:absolute;left:956.5px;top:144px;width:2px;height:15px;background:#dcdcdc"></div><div style="position:absolute;left:912px;top:158px;width:46px;height:1.5px;background:#dcdcdc"></div><div style="position:absolute;left:0;top:0;font-size:11px;line-height:13px;white-space:pre"><div style="position:absolute;left:406px;top:145.7px;width:43px;text-align:right">-5.27</div><div style="position:absolute;left:452px;top:145.7px;width:43px;text-align:right">-5.27</div><div style="position:absolute;left:498px;top:145.7px;width:43px;text-align:right">-5.27</div><div style="position:absolute;left:544px;top:145.7px;width:43px;text-align:right">-5.27</div><div style="position:absolute;left:590px;top:145.7px;width:43px;text-align:right">-5.27</div><div style="position:absolute;left:636px;top:145.7px;width:43px;text-align:right">-5.98</div><div style="position:absolute;left:682px;top:145.7px;width:43px;text-align:right">-6.33</div><div style="position:absolute;left:728px;top:145.7px;width:43px;text-align:right">-6.33</div><div style="position:absolute;left:774px;top:145.7px;width:43px;text-align:right">-6.33</div><div style="position:absolute;left:820px;top:145.7px;width:43px;text-align:right">-9.49</div><div style="position:absolute;left:866px;top:145.7px;width:43px;text-align:right">-11.25</div><div style="position:absolute;left:912px;top:145.7px;width:43px;text-align:right">-11.25</div></div><div style="position:absolute;left:361px;top:159px;width:45px;height:14px;box-sizing:border-box;border:1px solid #909090;background:#d4d0c8;box-shadow:inset 1px 1px #fff"></div><div style="position:absolute;left:361px;top:161px;width:41px;text-align:right;font-size:11px;line-height:13px;white-space:pre">800</div><div style="position:absolute;left:450.5px;top:159px;width:2px;height:15px;background:#dcdcdc"></div><div style="position:absolute;left:406px;top:173px;width:46px;height:1.5px;background:#dcdcdc"></div><div style="position:absolute;left:496.5px;top:159px;width:2px;height:15px;background:#dcdcdc"></div><div style="position:absolute;left:452px;top:173px;width:46px;height:1.5px;background:#dcdcdc"></div><div style="position:absolute;left:542.5px;top:159px;width:2px;height:15px;background:#dcdcdc"></div><div style="position:absolute;left:498px;top:173px;width:46px;height:1.5px;background:#dcdcdc"></div><div style="position:absolute;left:588.5px;top:159px;width:2px;height:15px;background:#dcdcdc"></div><div style="position:absolute;left:544px;top:173px;width:46px;height:1.5px;background:#dcdcdc"></div><div style="position:absolute;left:634.5px;top:159px;width:2px;height:15px;background:#dcdcdc"></div><div style="position:absolute;left:590px;top:173px;width:46px;height:1.5px;background:#dcdcdc"></div><div style="position:absolute;left:680.5px;top:159px;width:2px;height:15px;background:#dcdcdc"></div><div style="position:absolute;left:636px;top:173px;width:46px;height:1.5px;background:#dcdcdc"></div><div style="position:absolute;left:726.5px;top:159px;width:2px;height:15px;background:#dcdcdc"></div><div style="position:absolute;left:682px;top:173px;width:46px;height:1.5px;background:#dcdcdc"></div><div style="position:absolute;left:772.5px;top:159px;width:2px;height:15px;background:#dcdcdc"></div><div style="position:absolute;left:728px;top:173px;width:46px;height:1.5px;background:#dcdcdc"></div><div style="position:absolute;left:818.5px;top:159px;width:2px;height:15px;background:#dcdcdc"></div><div style="position:absolute;left:774px;top:173px;width:46px;height:1.5px;background:#dcdcdc"></div><div style="position:absolute;left:864.5px;top:159px;width:2px;height:15px;background:#dcdcdc"></div><div style="position:absolute;left:820px;top:173px;width:46px;height:1.5px;background:#dcdcdc"></div><div style="position:absolute;left:910.5px;top:159px;width:2px;height:15px;background:#dcdcdc"></div><div style="position:absolute;left:866px;top:173px;width:46px;height:1.5px;background:#dcdcdc"></div><div style="position:absolute;left:956.5px;top:159px;width:2px;height:15px;background:#dcdcdc"></div><div style="position:absolute;left:912px;top:173px;width:46px;height:1.5px;background:#dcdcdc"></div><div style="position:absolute;left:0;top:0;font-size:11px;line-height:13px;white-space:pre"><div style="position:absolute;left:406px;top:160.7px;width:43px;text-align:right">8.79</div><div style="position:absolute;left:452px;top:160.7px;width:43px;text-align:right">11.95</div><div style="position:absolute;left:498px;top:160.7px;width:43px;text-align:right">11.95</div><div style="position:absolute;left:544px;top:160.7px;width:43px;text-align:right">11.95</div><div style="position:absolute;left:590px;top:160.7px;width:43px;text-align:right">11.60</div><div style="position:absolute;left:636px;top:160.7px;width:43px;text-align:right">10.90</div><div style="position:absolute;left:682px;top:160.7px;width:43px;text-align:right">9.49</div><div style="position:absolute;left:728px;top:160.7px;width:43px;text-align:right">4.92</div><div style="position:absolute;left:774px;top:160.7px;width:43px;text-align:right">1.05</div><div style="position:absolute;left:820px;top:160.7px;width:43px;text-align:right">-0.70</div><div style="position:absolute;left:866px;top:160.7px;width:43px;text-align:right">-1.76</div><div style="position:absolute;left:912px;top:160.7px;width:43px;text-align:right">-2.46</div></div><div style="position:absolute;left:361px;top:174px;width:45px;height:14px;box-sizing:border-box;border:1px solid #909090;background:#d4d0c8;box-shadow:inset 1px 1px #fff"></div><div style="position:absolute;left:361px;top:176px;width:41px;text-align:right;font-size:11px;line-height:13px;white-space:pre">1200</div><div style="position:absolute;left:450.5px;top:174px;width:2px;height:15px;background:#dcdcdc"></div><div style="position:absolute;left:406px;top:188px;width:46px;height:1.5px;background:#dcdcdc"></div><div style="position:absolute;left:496.5px;top:174px;width:2px;height:15px;background:#dcdcdc"></div><div style="position:absolute;left:452px;top:188px;width:46px;height:1.5px;background:#dcdcdc"></div><div style="position:absolute;left:542.5px;top:174px;width:2px;height:15px;background:#dcdcdc"></div><div style="position:absolute;left:498px;top:188px;width:46px;height:1.5px;background:#dcdcdc"></div><div style="position:absolute;left:588.5px;top:174px;width:2px;height:15px;background:#dcdcdc"></div><div style="position:absolute;left:544px;top:188px;width:46px;height:1.5px;background:#dcdcdc"></div><div style="position:absolute;left:634.5px;top:174px;width:2px;height:15px;background:#dcdcdc"></div><div style="position:absolute;left:590px;top:188px;width:46px;height:1.5px;background:#dcdcdc"></div><div style="position:absolute;left:680.5px;top:174px;width:2px;height:15px;background:#dcdcdc"></div><div style="position:absolute;left:636px;top:188px;width:46px;height:1.5px;background:#dcdcdc"></div><div style="position:absolute;left:726.5px;top:174px;width:2px;height:15px;background:#dcdcdc"></div><div style="position:absolute;left:682px;top:188px;width:46px;height:1.5px;background:#dcdcdc"></div><div style="position:absolute;left:772.5px;top:174px;width:2px;height:15px;background:#dcdcdc"></div><div style="position:absolute;left:728px;top:188px;width:46px;height:1.5px;background:#dcdcdc"></div><div style="position:absolute;left:818.5px;top:174px;width:2px;height:15px;background:#dcdcdc"></div><div style="position:absolute;left:774px;top:188px;width:46px;height:1.5px;background:#dcdcdc"></div><div style="position:absolute;left:864.5px;top:174px;width:2px;height:15px;background:#dcdcdc"></div><div style="position:absolute;left:820px;top:188px;width:46px;height:1.5px;background:#dcdcdc"></div><div style="position:absolute;left:910.5px;top:174px;width:2px;height:15px;background:#dcdcdc"></div><div style="position:absolute;left:866px;top:188px;width:46px;height:1.5px;background:#dcdcdc"></div><div style="position:absolute;left:956.5px;top:174px;width:2px;height:15px;background:#dcdcdc"></div><div style="position:absolute;left:912px;top:188px;width:46px;height:1.5px;background:#dcdcdc"></div><div style="position:absolute;left:0;top:0;font-size:11px;line-height:13px;white-space:pre"><div style="position:absolute;left:406px;top:175.7px;width:43px;text-align:right">13.36</div><div style="position:absolute;left:452px;top:175.7px;width:43px;text-align:right">17.23</div><div style="position:absolute;left:498px;top:175.7px;width:43px;text-align:right">18.63</div><div style="position:absolute;left:544px;top:175.7px;width:43px;text-align:right">18.28</div><div style="position:absolute;left:590px;top:175.7px;width:43px;text-align:right">16.52</div><div style="position:absolute;left:636px;top:175.7px;width:43px;text-align:right">15.47</div><div style="position:absolute;left:682px;top:175.7px;width:43px;text-align:right">14.06</div><div style="position:absolute;left:728px;top:175.7px;width:43px;text-align:right">11.95</div><div style="position:absolute;left:774px;top:175.7px;width:43px;text-align:right">11.25</div><div style="position:absolute;left:820px;top:175.7px;width:43px;text-align:right">9.84</div><div style="position:absolute;left:866px;top:175.7px;width:43px;text-align:right">7.73</div><div style="position:absolute;left:912px;top:175.7px;width:43px;text-align:right">5.63</div></div><div style="position:absolute;left:361px;top:189px;width:45px;height:14px;box-sizing:border-box;border:1px solid #909090;background:#d4d0c8;box-shadow:inset 1px 1px #fff"></div><div style="position:absolute;left:361px;top:191px;width:41px;text-align:right;font-size:11px;line-height:13px;white-space:pre">1600</div><div style="position:absolute;left:450.5px;top:189px;width:2px;height:15px;background:#dcdcdc"></div><div style="position:absolute;left:406px;top:203px;width:46px;height:1.5px;background:#dcdcdc"></div><div style="position:absolute;left:496.5px;top:189px;width:2px;height:15px;background:#dcdcdc"></div><div style="position:absolute;left:452px;top:203px;width:46px;height:1.5px;background:#dcdcdc"></div><div style="position:absolute;left:542.5px;top:189px;width:2px;height:15px;background:#dcdcdc"></div><div style="position:absolute;left:498px;top:203px;width:46px;height:1.5px;background:#dcdcdc"></div><div style="position:absolute;left:588.5px;top:189px;width:2px;height:15px;background:#dcdcdc"></div><div style="position:absolute;left:544px;top:203px;width:46px;height:1.5px;background:#dcdcdc"></div><div style="position:absolute;left:634.5px;top:189px;width:2px;height:15px;background:#dcdcdc"></div><div style="position:absolute;left:590px;top:203px;width:46px;height:1.5px;background:#dcdcdc"></div><div style="position:absolute;left:680.5px;top:189px;width:2px;height:15px;background:#dcdcdc"></div><div style="position:absolute;left:636px;top:203px;width:46px;height:1.5px;background:#dcdcdc"></div><div style="position:absolute;left:726.5px;top:189px;width:2px;height:15px;background:#dcdcdc"></div><div style="position:absolute;left:682px;top:203px;width:46px;height:1.5px;background:#dcdcdc"></div><div style="position:absolute;left:772.5px;top:189px;width:2px;height:15px;background:#dcdcdc"></div><div style="position:absolute;left:728px;top:203px;width:46px;height:1.5px;background:#dcdcdc"></div><div style="position:absolute;left:818.5px;top:189px;width:2px;height:15px;background:#dcdcdc"></div><div style="position:absolute;left:774px;top:203px;width:46px;height:1.5px;background:#dcdcdc"></div><div style="position:absolute;left:864.5px;top:189px;width:2px;height:15px;background:#dcdcdc"></div><div style="position:absolute;left:820px;top:203px;width:46px;height:1.5px;background:#dcdcdc"></div><div style="position:absolute;left:910.5px;top:189px;width:2px;height:15px;background:#dcdcdc"></div><div style="position:absolute;left:866px;top:203px;width:46px;height:1.5px;background:#dcdcdc"></div><div style="position:absolute;left:956.5px;top:189px;width:2px;height:15px;background:#dcdcdc"></div><div style="position:absolute;left:912px;top:203px;width:46px;height:1.5px;background:#dcdcdc"></div><div style="position:absolute;left:0;top:0;font-size:11px;line-height:13px;white-space:pre"><div style="position:absolute;left:406px;top:190.7px;width:43px;text-align:right">15.47</div><div style="position:absolute;left:452px;top:190.7px;width:43px;text-align:right">20.74</div><div style="position:absolute;left:498px;top:190.7px;width:43px;text-align:right">21.09</div><div style="position:absolute;left:544px;top:190.7px;width:43px;text-align:right">19.34</div><div style="position:absolute;left:590px;top:190.7px;width:43px;text-align:right">18.98</div><div style="position:absolute;left:636px;top:190.7px;width:43px;text-align:right">17.93</div><div style="position:absolute;left:682px;top:190.7px;width:43px;text-align:right">16.52</div><div style="position:absolute;left:728px;top:190.7px;width:43px;text-align:right">15.12</div><div style="position:absolute;left:774px;top:190.7px;width:43px;text-align:right">13.71</div><div style="position:absolute;left:820px;top:190.7px;width:43px;text-align:right">12.66</div><div style="position:absolute;left:866px;top:190.7px;width:43px;text-align:right">11.60</div><div style="position:absolute;left:912px;top:190.7px;width:43px;text-align:right">10.55</div></div><div style="position:absolute;left:361px;top:204px;width:45px;height:14px;box-sizing:border-box;border:1px solid #909090;background:#d4d0c8;box-shadow:inset 1px 1px #fff"></div><div style="position:absolute;left:361px;top:206px;width:41px;text-align:right;font-size:11px;line-height:13px;white-space:pre">2000</div><div style="position:absolute;left:450.5px;top:204px;width:2px;height:15px;background:#dcdcdc"></div><div style="position:absolute;left:406px;top:218px;width:46px;height:1.5px;background:#dcdcdc"></div><div style="position:absolute;left:496.5px;top:204px;width:2px;height:15px;background:#dcdcdc"></div><div style="position:absolute;left:452px;top:218px;width:46px;height:1.5px;background:#dcdcdc"></div><div style="position:absolute;left:542.5px;top:204px;width:2px;height:15px;background:#dcdcdc"></div><div style="position:absolute;left:498px;top:218px;width:46px;height:1.5px;background:#dcdcdc"></div><div style="position:absolute;left:588.5px;top:204px;width:2px;height:15px;background:#dcdcdc"></div><div style="position:absolute;left:544px;top:218px;width:46px;height:1.5px;background:#dcdcdc"></div><div style="position:absolute;left:634.5px;top:204px;width:2px;height:15px;background:#dcdcdc"></div><div style="position:absolute;left:590px;top:218px;width:46px;height:1.5px;background:#dcdcdc"></div><div style="position:absolute;left:680.5px;top:204px;width:2px;height:15px;background:#dcdcdc"></div><div style="position:absolute;left:636px;top:218px;width:46px;height:1.5px;background:#dcdcdc"></div><div style="position:absolute;left:726.5px;top:204px;width:2px;height:15px;background:#dcdcdc"></div><div style="position:absolute;left:682px;top:218px;width:46px;height:1.5px;background:#dcdcdc"></div><div style="position:absolute;left:772.5px;top:204px;width:2px;height:15px;background:#dcdcdc"></div><div style="position:absolute;left:728px;top:218px;width:46px;height:1.5px;background:#dcdcdc"></div><div style="position:absolute;left:818.5px;top:204px;width:2px;height:15px;background:#dcdcdc"></div><div style="position:absolute;left:774px;top:218px;width:46px;height:1.5px;background:#dcdcdc"></div><div style="position:absolute;left:864.5px;top:204px;width:2px;height:15px;background:#dcdcdc"></div><div style="position:absolute;left:820px;top:218px;width:46px;height:1.5px;background:#dcdcdc"></div><div style="position:absolute;left:910.5px;top:204px;width:2px;height:15px;background:#dcdcdc"></div><div style="position:absolute;left:866px;top:218px;width:46px;height:1.5px;background:#dcdcdc"></div><div style="position:absolute;left:956.5px;top:204px;width:2px;height:15px;background:#dcdcdc"></div><div style="position:absolute;left:912px;top:218px;width:46px;height:1.5px;background:#dcdcdc"></div><div style="position:absolute;left:0;top:0;font-size:11px;line-height:13px;white-space:pre"><div style="position:absolute;left:406px;top:205.7px;width:43px;text-align:right">15.12</div><div style="position:absolute;left:452px;top:205.7px;width:43px;text-align:right">19.34</div><div style="position:absolute;left:498px;top:205.7px;width:43px;text-align:right">19.69</div><div style="position:absolute;left:544px;top:205.7px;width:43px;text-align:right">19.69</div><div style="position:absolute;left:590px;top:205.7px;width:43px;text-align:right">17.93</div><div style="position:absolute;left:636px;top:205.7px;width:43px;text-align:right">17.23</div><div style="position:absolute;left:682px;top:205.7px;width:43px;text-align:right">15.47</div><div style="position:absolute;left:728px;top:205.7px;width:43px;text-align:right">14.06</div><div style="position:absolute;left:774px;top:205.7px;width:43px;text-align:right">11.60</div><div style="position:absolute;left:820px;top:205.7px;width:43px;text-align:right">11.60</div><div style="position:absolute;left:866px;top:205.7px;width:43px;text-align:right">11.25</div><div style="position:absolute;left:912px;top:205.7px;width:43px;text-align:right">10.55</div></div><div style="position:absolute;left:361px;top:219px;width:45px;height:14px;box-sizing:border-box;border:1px solid #909090;background:#d4d0c8;box-shadow:inset 1px 1px #fff"></div><div style="position:absolute;left:361px;top:221px;width:41px;text-align:right;font-size:11px;line-height:13px;white-space:pre">2400</div><div style="position:absolute;left:450.5px;top:219px;width:2px;height:15px;background:#dcdcdc"></div><div style="position:absolute;left:406px;top:233px;width:46px;height:1.5px;background:#dcdcdc"></div><div style="position:absolute;left:496.5px;top:219px;width:2px;height:15px;background:#dcdcdc"></div><div style="position:absolute;left:452px;top:233px;width:46px;height:1.5px;background:#dcdcdc"></div><div style="position:absolute;left:542.5px;top:219px;width:2px;height:15px;background:#dcdcdc"></div><div style="position:absolute;left:498px;top:233px;width:46px;height:1.5px;background:#dcdcdc"></div><div style="position:absolute;left:588.5px;top:219px;width:2px;height:15px;background:#dcdcdc"></div><div style="position:absolute;left:544px;top:233px;width:46px;height:1.5px;background:#dcdcdc"></div><div style="position:absolute;left:634.5px;top:219px;width:2px;height:15px;background:#dcdcdc"></div><div style="position:absolute;left:590px;top:233px;width:46px;height:1.5px;background:#dcdcdc"></div><div style="position:absolute;left:680.5px;top:219px;width:2px;height:15px;background:#dcdcdc"></div><div style="position:absolute;left:636px;top:233px;width:46px;height:1.5px;background:#dcdcdc"></div><div style="position:absolute;left:726.5px;top:219px;width:2px;height:15px;background:#dcdcdc"></div><div style="position:absolute;left:682px;top:233px;width:46px;height:1.5px;background:#dcdcdc"></div><div style="position:absolute;left:772.5px;top:219px;width:2px;height:15px;background:#dcdcdc"></div><div style="position:absolute;left:728px;top:233px;width:46px;height:1.5px;background:#dcdcdc"></div><div style="position:absolute;left:818.5px;top:219px;width:2px;height:15px;background:#dcdcdc"></div><div style="position:absolute;left:774px;top:233px;width:46px;height:1.5px;background:#dcdcdc"></div><div style="position:absolute;left:864.5px;top:219px;width:2px;height:15px;background:#dcdcdc"></div><div style="position:absolute;left:820px;top:233px;width:46px;height:1.5px;background:#dcdcdc"></div><div style="position:absolute;left:910.5px;top:219px;width:2px;height:15px;background:#dcdcdc"></div><div style="position:absolute;left:866px;top:233px;width:46px;height:1.5px;background:#dcdcdc"></div><div style="position:absolute;left:956.5px;top:219px;width:2px;height:15px;background:#dcdcdc"></div><div style="position:absolute;left:912px;top:233px;width:46px;height:1.5px;background:#dcdcdc"></div><div style="position:absolute;left:0;top:0;font-size:11px;line-height:13px;white-space:pre"><div style="position:absolute;left:406px;top:220.7px;width:43px;text-align:right">14.06</div><div style="position:absolute;left:452px;top:220.7px;width:43px;text-align:right">16.52</div><div style="position:absolute;left:498px;top:220.7px;width:43px;text-align:right">18.63</div><div style="position:absolute;left:544px;top:220.7px;width:43px;text-align:right">18.63</div><div style="position:absolute;left:590px;top:220.7px;width:43px;text-align:right">18.28</div><div style="position:absolute;left:636px;top:220.7px;width:43px;text-align:right">17.23</div><div style="position:absolute;left:682px;top:220.7px;width:43px;text-align:right">14.77</div><div style="position:absolute;left:728px;top:220.7px;width:43px;text-align:right">14.06</div><div style="position:absolute;left:774px;top:220.7px;width:43px;text-align:right">12.66</div><div style="position:absolute;left:820px;top:220.7px;width:43px;text-align:right">11.60</div><div style="position:absolute;left:866px;top:220.7px;width:43px;text-align:right">11.25</div><div style="position:absolute;left:912px;top:220.7px;width:43px;text-align:right">10.55</div></div><div style="position:absolute;left:361px;top:234px;width:45px;height:14px;box-sizing:border-box;border:1px solid #909090;background:#d4d0c8;box-shadow:inset 1px 1px #fff"></div><div style="position:absolute;left:361px;top:236px;width:41px;text-align:right;font-size:11px;line-height:13px;white-space:pre">2800</div><div style="position:absolute;left:450.5px;top:234px;width:2px;height:15px;background:#dcdcdc"></div><div style="position:absolute;left:406px;top:248px;width:46px;height:1.5px;background:#dcdcdc"></div><div style="position:absolute;left:496.5px;top:234px;width:2px;height:15px;background:#dcdcdc"></div><div style="position:absolute;left:452px;top:248px;width:46px;height:1.5px;background:#dcdcdc"></div><div style="position:absolute;left:542.5px;top:234px;width:2px;height:15px;background:#dcdcdc"></div><div style="position:absolute;left:498px;top:248px;width:46px;height:1.5px;background:#dcdcdc"></div><div style="position:absolute;left:588.5px;top:234px;width:2px;height:15px;background:#dcdcdc"></div><div style="position:absolute;left:544px;top:248px;width:46px;height:1.5px;background:#dcdcdc"></div><div style="position:absolute;left:634.5px;top:234px;width:2px;height:15px;background:#dcdcdc"></div><div style="position:absolute;left:590px;top:248px;width:46px;height:1.5px;background:#dcdcdc"></div><div style="position:absolute;left:680.5px;top:234px;width:2px;height:15px;background:#dcdcdc"></div><div style="position:absolute;left:636px;top:248px;width:46px;height:1.5px;background:#dcdcdc"></div><div style="position:absolute;left:726.5px;top:234px;width:2px;height:15px;background:#dcdcdc"></div><div style="position:absolute;left:682px;top:248px;width:46px;height:1.5px;background:#dcdcdc"></div><div style="position:absolute;left:772.5px;top:234px;width:2px;height:15px;background:#dcdcdc"></div><div style="position:absolute;left:728px;top:248px;width:46px;height:1.5px;background:#dcdcdc"></div><div style="position:absolute;left:818.5px;top:234px;width:2px;height:15px;background:#dcdcdc"></div><div style="position:absolute;left:774px;top:248px;width:46px;height:1.5px;background:#dcdcdc"></div><div style="position:absolute;left:864.5px;top:234px;width:2px;height:15px;background:#dcdcdc"></div><div style="position:absolute;left:820px;top:248px;width:46px;height:1.5px;background:#dcdcdc"></div><div style="position:absolute;left:910.5px;top:234px;width:2px;height:15px;background:#dcdcdc"></div><div style="position:absolute;left:866px;top:248px;width:46px;height:1.5px;background:#dcdcdc"></div><div style="position:absolute;left:956.5px;top:234px;width:2px;height:15px;background:#dcdcdc"></div><div style="position:absolute;left:912px;top:248px;width:46px;height:1.5px;background:#dcdcdc"></div><div style="position:absolute;left:0;top:0;font-size:11px;line-height:13px;white-space:pre"><div style="position:absolute;left:406px;top:235.7px;width:43px;text-align:right">15.12</div><div style="position:absolute;left:452px;top:235.7px;width:43px;text-align:right">18.28</div><div style="position:absolute;left:498px;top:235.7px;width:43px;text-align:right">20.74</div><div style="position:absolute;left:544px;top:235.7px;width:43px;text-align:right">19.69</div><div style="position:absolute;left:590px;top:235.7px;width:43px;text-align:right">18.63</div><div style="position:absolute;left:636px;top:235.7px;width:43px;text-align:right">18.63</div><div style="position:absolute;left:682px;top:235.7px;width:43px;text-align:right">17.23</div><div style="position:absolute;left:728px;top:235.7px;width:43px;text-align:right">17.23</div><div style="position:absolute;left:774px;top:235.7px;width:43px;text-align:right">16.52</div><div style="position:absolute;left:820px;top:235.7px;width:43px;text-align:right">15.12</div><div style="position:absolute;left:866px;top:235.7px;width:43px;text-align:right">14.41</div><div style="position:absolute;left:912px;top:235.7px;width:43px;text-align:right">12.30</div></div><div style="position:absolute;left:361px;top:249px;width:45px;height:14px;box-sizing:border-box;border:1px solid #909090;background:#d4d0c8;box-shadow:inset 1px 1px #fff"></div><div style="position:absolute;left:361px;top:251px;width:41px;text-align:right;font-size:11px;line-height:13px;white-space:pre">3200</div><div style="position:absolute;left:450.5px;top:249px;width:2px;height:15px;background:#dcdcdc"></div><div style="position:absolute;left:406px;top:263px;width:46px;height:1.5px;background:#dcdcdc"></div><div style="position:absolute;left:496.5px;top:249px;width:2px;height:15px;background:#dcdcdc"></div><div style="position:absolute;left:452px;top:263px;width:46px;height:1.5px;background:#dcdcdc"></div><div style="position:absolute;left:542.5px;top:249px;width:2px;height:15px;background:#dcdcdc"></div><div style="position:absolute;left:498px;top:263px;width:46px;height:1.5px;background:#dcdcdc"></div><div style="position:absolute;left:588.5px;top:249px;width:2px;height:15px;background:#dcdcdc"></div><div style="position:absolute;left:544px;top:263px;width:46px;height:1.5px;background:#dcdcdc"></div><div style="position:absolute;left:634.5px;top:249px;width:2px;height:15px;background:#dcdcdc"></div><div style="position:absolute;left:590px;top:263px;width:46px;height:1.5px;background:#dcdcdc"></div><div style="position:absolute;left:680.5px;top:249px;width:2px;height:15px;background:#dcdcdc"></div><div style="position:absolute;left:636px;top:263px;width:46px;height:1.5px;background:#dcdcdc"></div><div style="position:absolute;left:726.5px;top:249px;width:2px;height:15px;background:#dcdcdc"></div><div style="position:absolute;left:682px;top:263px;width:46px;height:1.5px;background:#dcdcdc"></div><div style="position:absolute;left:772.5px;top:249px;width:2px;height:15px;background:#dcdcdc"></div><div style="position:absolute;left:728px;top:263px;width:46px;height:1.5px;background:#dcdcdc"></div><div style="position:absolute;left:818.5px;top:249px;width:2px;height:15px;background:#dcdcdc"></div><div style="position:absolute;left:774px;top:263px;width:46px;height:1.5px;background:#dcdcdc"></div><div style="position:absolute;left:864.5px;top:249px;width:2px;height:15px;background:#dcdcdc"></div><div style="position:absolute;left:820px;top:263px;width:46px;height:1.5px;background:#dcdcdc"></div><div style="position:absolute;left:910.5px;top:249px;width:2px;height:15px;background:#dcdcdc"></div><div style="position:absolute;left:866px;top:263px;width:46px;height:1.5px;background:#dcdcdc"></div><div style="position:absolute;left:956.5px;top:249px;width:2px;height:15px;background:#dcdcdc"></div><div style="position:absolute;left:912px;top:263px;width:46px;height:1.5px;background:#dcdcdc"></div><div style="position:absolute;left:0;top:0;font-size:11px;line-height:13px;white-space:pre"><div style="position:absolute;left:406px;top:250.7px;width:43px;text-align:right">16.88</div><div style="position:absolute;left:452px;top:250.7px;width:43px;text-align:right">21.45</div><div style="position:absolute;left:498px;top:250.7px;width:43px;text-align:right">22.50</div><div style="position:absolute;left:544px;top:250.7px;width:43px;text-align:right">21.45</div><div style="position:absolute;left:590px;top:250.7px;width:43px;text-align:right">21.09</div><div style="position:absolute;left:636px;top:250.7px;width:43px;text-align:right">20.04</div><div style="position:absolute;left:682px;top:250.7px;width:43px;text-align:right">19.69</div><div style="position:absolute;left:728px;top:250.7px;width:43px;text-align:right">18.28</div><div style="position:absolute;left:774px;top:250.7px;width:43px;text-align:right">17.58</div><div style="position:absolute;left:820px;top:250.7px;width:43px;text-align:right">15.82</div><div style="position:absolute;left:866px;top:250.7px;width:43px;text-align:right">13.71</div><div style="position:absolute;left:912px;top:250.7px;width:43px;text-align:right">12.30</div></div><div style="position:absolute;left:361px;top:264px;width:45px;height:14px;box-sizing:border-box;border:1px solid #909090;background:#d4d0c8;box-shadow:inset 1px 1px #fff"></div><div style="position:absolute;left:361px;top:266px;width:41px;text-align:right;font-size:11px;line-height:13px;white-space:pre">3600</div><div style="position:absolute;left:450.5px;top:264px;width:2px;height:15px;background:#dcdcdc"></div><div style="position:absolute;left:406px;top:278px;width:46px;height:1.5px;background:#dcdcdc"></div><div style="position:absolute;left:496.5px;top:264px;width:2px;height:15px;background:#dcdcdc"></div><div style="position:absolute;left:452px;top:278px;width:46px;height:1.5px;background:#dcdcdc"></div><div style="position:absolute;left:542.5px;top:264px;width:2px;height:15px;background:#dcdcdc"></div><div style="position:absolute;left:498px;top:278px;width:46px;height:1.5px;background:#dcdcdc"></div><div style="position:absolute;left:588.5px;top:264px;width:2px;height:15px;background:#dcdcdc"></div><div style="position:absolute;left:544px;top:278px;width:46px;height:1.5px;background:#dcdcdc"></div><div style="position:absolute;left:634.5px;top:264px;width:2px;height:15px;background:#dcdcdc"></div><div style="position:absolute;left:590px;top:278px;width:46px;height:1.5px;background:#dcdcdc"></div><div style="position:absolute;left:680.5px;top:264px;width:2px;height:15px;background:#dcdcdc"></div><div style="position:absolute;left:636px;top:278px;width:46px;height:1.5px;background:#dcdcdc"></div><div style="position:absolute;left:726.5px;top:264px;width:2px;height:15px;background:#dcdcdc"></div><div style="position:absolute;left:682px;top:278px;width:46px;height:1.5px;background:#dcdcdc"></div><div style="position:absolute;left:772.5px;top:264px;width:2px;height:15px;background:#dcdcdc"></div><div style="position:absolute;left:728px;top:278px;width:46px;height:1.5px;background:#dcdcdc"></div><div style="position:absolute;left:818.5px;top:264px;width:2px;height:15px;background:#dcdcdc"></div><div style="position:absolute;left:774px;top:278px;width:46px;height:1.5px;background:#dcdcdc"></div><div style="position:absolute;left:864.5px;top:264px;width:2px;height:15px;background:#dcdcdc"></div><div style="position:absolute;left:820px;top:278px;width:46px;height:1.5px;background:#dcdcdc"></div><div style="position:absolute;left:910.5px;top:264px;width:2px;height:15px;background:#dcdcdc"></div><div style="position:absolute;left:866px;top:278px;width:46px;height:1.5px;background:#dcdcdc"></div><div style="position:absolute;left:956.5px;top:264px;width:2px;height:15px;background:#dcdcdc"></div><div style="position:absolute;left:912px;top:278px;width:46px;height:1.5px;background:#dcdcdc"></div><div style="position:absolute;left:0;top:0;font-size:11px;line-height:13px;white-space:pre"><div style="position:absolute;left:406px;top:265.7px;width:43px;text-align:right">17.23</div><div style="position:absolute;left:452px;top:265.7px;width:43px;text-align:right">21.45</div><div style="position:absolute;left:498px;top:265.7px;width:43px;text-align:right">22.85</div><div style="position:absolute;left:544px;top:265.7px;width:43px;text-align:right">20.74</div><div style="position:absolute;left:590px;top:265.7px;width:43px;text-align:right">19.69</div><div style="position:absolute;left:636px;top:265.7px;width:43px;text-align:right">19.69</div><div style="position:absolute;left:682px;top:265.7px;width:43px;text-align:right">18.63</div><div style="position:absolute;left:728px;top:265.7px;width:43px;text-align:right">18.28</div><div style="position:absolute;left:774px;top:265.7px;width:43px;text-align:right">16.88</div><div style="position:absolute;left:820px;top:265.7px;width:43px;text-align:right">14.77</div><div style="position:absolute;left:866px;top:265.7px;width:43px;text-align:right">13.01</div><div style="position:absolute;left:912px;top:265.7px;width:43px;text-align:right">11.25</div></div><div style="position:absolute;left:361px;top:279px;width:45px;height:14px;box-sizing:border-box;border:1px solid #909090;background:#d4d0c8;box-shadow:inset 1px 1px #fff"></div><div style="position:absolute;left:361px;top:281px;width:41px;text-align:right;font-size:11px;line-height:13px;white-space:pre">4000</div><div style="position:absolute;left:450.5px;top:279px;width:2px;height:15px;background:#dcdcdc"></div><div style="position:absolute;left:406px;top:293px;width:46px;height:1.5px;background:#dcdcdc"></div><div style="position:absolute;left:496.5px;top:279px;width:2px;height:15px;background:#dcdcdc"></div><div style="position:absolute;left:452px;top:293px;width:46px;height:1.5px;background:#dcdcdc"></div><div style="position:absolute;left:542.5px;top:279px;width:2px;height:15px;background:#dcdcdc"></div><div style="position:absolute;left:498px;top:293px;width:46px;height:1.5px;background:#dcdcdc"></div><div style="position:absolute;left:588.5px;top:279px;width:2px;height:15px;background:#dcdcdc"></div><div style="position:absolute;left:544px;top:293px;width:46px;height:1.5px;background:#dcdcdc"></div><div style="position:absolute;left:634.5px;top:279px;width:2px;height:15px;background:#dcdcdc"></div><div style="position:absolute;left:590px;top:293px;width:46px;height:1.5px;background:#dcdcdc"></div><div style="position:absolute;left:680.5px;top:279px;width:2px;height:15px;background:#dcdcdc"></div><div style="position:absolute;left:636px;top:293px;width:46px;height:1.5px;background:#dcdcdc"></div><div style="position:absolute;left:726.5px;top:279px;width:2px;height:15px;background:#dcdcdc"></div><div style="position:absolute;left:682px;top:293px;width:46px;height:1.5px;background:#dcdcdc"></div><div style="position:absolute;left:772.5px;top:279px;width:2px;height:15px;background:#dcdcdc"></div><div style="position:absolute;left:728px;top:293px;width:46px;height:1.5px;background:#dcdcdc"></div><div style="position:absolute;left:818.5px;top:279px;width:2px;height:15px;background:#dcdcdc"></div><div style="position:absolute;left:774px;top:293px;width:46px;height:1.5px;background:#dcdcdc"></div><div style="position:absolute;left:864.5px;top:279px;width:2px;height:15px;background:#dcdcdc"></div><div style="position:absolute;left:820px;top:293px;width:46px;height:1.5px;background:#dcdcdc"></div><div style="position:absolute;left:910.5px;top:279px;width:2px;height:15px;background:#dcdcdc"></div><div style="position:absolute;left:866px;top:293px;width:46px;height:1.5px;background:#dcdcdc"></div><div style="position:absolute;left:956.5px;top:279px;width:2px;height:15px;background:#dcdcdc"></div><div style="position:absolute;left:912px;top:293px;width:46px;height:1.5px;background:#dcdcdc"></div><div style="position:absolute;left:0;top:0;font-size:11px;line-height:13px;white-space:pre"><div style="position:absolute;left:406px;top:280.7px;width:43px;text-align:right">16.17</div><div style="position:absolute;left:452px;top:280.7px;width:43px;text-align:right">19.34</div><div style="position:absolute;left:498px;top:280.7px;width:43px;text-align:right">21.80</div><div style="position:absolute;left:544px;top:280.7px;width:43px;text-align:right">20.74</div><div style="position:absolute;left:590px;top:280.7px;width:43px;text-align:right">19.69</div><div style="position:absolute;left:636px;top:280.7px;width:43px;text-align:right">19.34</div><div style="position:absolute;left:682px;top:280.7px;width:43px;text-align:right">17.93</div><div style="position:absolute;left:728px;top:280.7px;width:43px;text-align:right">16.17</div><div style="position:absolute;left:774px;top:280.7px;width:43px;text-align:right">14.41</div><div style="position:absolute;left:820px;top:280.7px;width:43px;text-align:right">12.30</div><div style="position:absolute;left:866px;top:280.7px;width:43px;text-align:right">10.55</div><div style="position:absolute;left:912px;top:280.7px;width:43px;text-align:right">8.44</div></div><div style="position:absolute;left:361px;top:294px;width:45px;height:14px;box-sizing:border-box;border:1px solid #909090;background:#d4d0c8;box-shadow:inset 1px 1px #fff"></div><div style="position:absolute;left:361px;top:296px;width:41px;text-align:right;font-size:11px;line-height:13px;white-space:pre">4400</div><div style="position:absolute;left:450.5px;top:294px;width:2px;height:15px;background:#dcdcdc"></div><div style="position:absolute;left:406px;top:308px;width:46px;height:1.5px;background:#dcdcdc"></div><div style="position:absolute;left:496.5px;top:294px;width:2px;height:15px;background:#dcdcdc"></div><div style="position:absolute;left:452px;top:308px;width:46px;height:1.5px;background:#dcdcdc"></div><div style="position:absolute;left:542.5px;top:294px;width:2px;height:15px;background:#dcdcdc"></div><div style="position:absolute;left:498px;top:308px;width:46px;height:1.5px;background:#dcdcdc"></div><div style="position:absolute;left:588.5px;top:294px;width:2px;height:15px;background:#dcdcdc"></div><div style="position:absolute;left:544px;top:308px;width:46px;height:1.5px;background:#dcdcdc"></div><div style="position:absolute;left:634.5px;top:294px;width:2px;height:15px;background:#dcdcdc"></div><div style="position:absolute;left:590px;top:308px;width:46px;height:1.5px;background:#dcdcdc"></div><div style="position:absolute;left:680.5px;top:294px;width:2px;height:15px;background:#dcdcdc"></div><div style="position:absolute;left:636px;top:308px;width:46px;height:1.5px;background:#dcdcdc"></div><div style="position:absolute;left:726.5px;top:294px;width:2px;height:15px;background:#dcdcdc"></div><div style="position:absolute;left:682px;top:308px;width:46px;height:1.5px;background:#dcdcdc"></div><div style="position:absolute;left:772.5px;top:294px;width:2px;height:15px;background:#dcdcdc"></div><div style="position:absolute;left:728px;top:308px;width:46px;height:1.5px;background:#dcdcdc"></div><div style="position:absolute;left:818.5px;top:294px;width:2px;height:15px;background:#dcdcdc"></div><div style="position:absolute;left:774px;top:308px;width:46px;height:1.5px;background:#dcdcdc"></div><div style="position:absolute;left:864.5px;top:294px;width:2px;height:15px;background:#dcdcdc"></div><div style="position:absolute;left:820px;top:308px;width:46px;height:1.5px;background:#dcdcdc"></div><div style="position:absolute;left:910.5px;top:294px;width:2px;height:15px;background:#dcdcdc"></div><div style="position:absolute;left:866px;top:308px;width:46px;height:1.5px;background:#dcdcdc"></div><div style="position:absolute;left:956.5px;top:294px;width:2px;height:15px;background:#dcdcdc"></div><div style="position:absolute;left:912px;top:308px;width:46px;height:1.5px;background:#dcdcdc"></div><div style="position:absolute;left:0;top:0;font-size:11px;line-height:13px;white-space:pre"><div style="position:absolute;left:406px;top:295.7px;width:43px;text-align:right">17.93</div><div style="position:absolute;left:452px;top:295.7px;width:43px;text-align:right">23.55</div><div style="position:absolute;left:498px;top:295.7px;width:43px;text-align:right">27.77</div><div style="position:absolute;left:544px;top:295.7px;width:43px;text-align:right">26.72</div><div style="position:absolute;left:590px;top:295.7px;width:43px;text-align:right">24.61</div><div style="position:absolute;left:636px;top:295.7px;width:43px;text-align:right">23.55</div><div style="position:absolute;left:682px;top:295.7px;width:43px;text-align:right">20.74</div><div style="position:absolute;left:728px;top:295.7px;width:43px;text-align:right">18.28</div><div style="position:absolute;left:774px;top:295.7px;width:43px;text-align:right">17.23</div><div style="position:absolute;left:820px;top:295.7px;width:43px;text-align:right">15.47</div><div style="position:absolute;left:866px;top:295.7px;width:43px;text-align:right">13.36</div><div style="position:absolute;left:912px;top:295.7px;width:43px;text-align:right">11.25</div></div><div style="position:absolute;left:361px;top:309px;width:45px;height:14px;box-sizing:border-box;border:1px solid #909090;background:#d4d0c8;box-shadow:inset 1px 1px #fff"></div><div style="position:absolute;left:361px;top:311px;width:41px;text-align:right;font-size:11px;line-height:13px;white-space:pre">4800</div><div style="position:absolute;left:450.5px;top:309px;width:2px;height:15px;background:#dcdcdc"></div><div style="position:absolute;left:406px;top:323px;width:46px;height:1.5px;background:#dcdcdc"></div><div style="position:absolute;left:496.5px;top:309px;width:2px;height:15px;background:#dcdcdc"></div><div style="position:absolute;left:452px;top:323px;width:46px;height:1.5px;background:#dcdcdc"></div><div style="position:absolute;left:542.5px;top:309px;width:2px;height:15px;background:#dcdcdc"></div><div style="position:absolute;left:498px;top:323px;width:46px;height:1.5px;background:#dcdcdc"></div><div style="position:absolute;left:588.5px;top:309px;width:2px;height:15px;background:#dcdcdc"></div><div style="position:absolute;left:544px;top:323px;width:46px;height:1.5px;background:#dcdcdc"></div><div style="position:absolute;left:634.5px;top:309px;width:2px;height:15px;background:#dcdcdc"></div><div style="position:absolute;left:590px;top:323px;width:46px;height:1.5px;background:#dcdcdc"></div><div style="position:absolute;left:680.5px;top:309px;width:2px;height:15px;background:#dcdcdc"></div><div style="position:absolute;left:636px;top:323px;width:46px;height:1.5px;background:#dcdcdc"></div><div style="position:absolute;left:726.5px;top:309px;width:2px;height:15px;background:#dcdcdc"></div><div style="position:absolute;left:682px;top:323px;width:46px;height:1.5px;background:#dcdcdc"></div><div style="position:absolute;left:772.5px;top:309px;width:2px;height:15px;background:#dcdcdc"></div><div style="position:absolute;left:728px;top:323px;width:46px;height:1.5px;background:#dcdcdc"></div><div style="position:absolute;left:818.5px;top:309px;width:2px;height:15px;background:#dcdcdc"></div><div style="position:absolute;left:774px;top:323px;width:46px;height:1.5px;background:#dcdcdc"></div><div style="position:absolute;left:864.5px;top:309px;width:2px;height:15px;background:#dcdcdc"></div><div style="position:absolute;left:820px;top:323px;width:46px;height:1.5px;background:#dcdcdc"></div><div style="position:absolute;left:910.5px;top:309px;width:2px;height:15px;background:#dcdcdc"></div><div style="position:absolute;left:866px;top:323px;width:46px;height:1.5px;background:#dcdcdc"></div><div style="position:absolute;left:956.5px;top:309px;width:2px;height:15px;background:#dcdcdc"></div><div style="position:absolute;left:912px;top:323px;width:46px;height:1.5px;background:#dcdcdc"></div><div style="position:absolute;left:0;top:0;font-size:11px;line-height:13px;white-space:pre"><div style="position:absolute;left:406px;top:310.7px;width:43px;text-align:right">16.52</div><div style="position:absolute;left:452px;top:310.7px;width:43px;text-align:right">21.45</div><div style="position:absolute;left:498px;top:310.7px;width:43px;text-align:right">23.91</div><div style="position:absolute;left:544px;top:310.7px;width:43px;text-align:right">21.80</div><div style="position:absolute;left:590px;top:310.7px;width:43px;text-align:right">21.80</div><div style="position:absolute;left:636px;top:310.7px;width:43px;text-align:right">19.69</div><div style="position:absolute;left:682px;top:310.7px;width:43px;text-align:right">19.69</div><div style="position:absolute;left:728px;top:310.7px;width:43px;text-align:right">18.28</div><div style="position:absolute;left:774px;top:310.7px;width:43px;text-align:right">17.93</div><div style="position:absolute;left:820px;top:310.7px;width:43px;text-align:right">16.88</div><div style="position:absolute;left:866px;top:310.7px;width:43px;text-align:right">15.82</div><div style="position:absolute;left:912px;top:310.7px;width:43px;text-align:right">13.01</div></div><div style="position:absolute;left:361px;top:324px;width:45px;height:14px;box-sizing:border-box;border:1px solid #909090;background:#d4d0c8;box-shadow:inset 1px 1px #fff"></div><div style="position:absolute;left:361px;top:326px;width:41px;text-align:right;font-size:11px;line-height:13px;white-space:pre">5200</div><div style="position:absolute;left:450.5px;top:324px;width:2px;height:15px;background:#dcdcdc"></div><div style="position:absolute;left:406px;top:338px;width:46px;height:1.5px;background:#dcdcdc"></div><div style="position:absolute;left:496.5px;top:324px;width:2px;height:15px;background:#dcdcdc"></div><div style="position:absolute;left:452px;top:338px;width:46px;height:1.5px;background:#dcdcdc"></div><div style="position:absolute;left:542.5px;top:324px;width:2px;height:15px;background:#dcdcdc"></div><div style="position:absolute;left:498px;top:338px;width:46px;height:1.5px;background:#dcdcdc"></div><div style="position:absolute;left:588.5px;top:324px;width:2px;height:15px;background:#dcdcdc"></div><div style="position:absolute;left:544px;top:338px;width:46px;height:1.5px;background:#dcdcdc"></div><div style="position:absolute;left:634.5px;top:324px;width:2px;height:15px;background:#dcdcdc"></div><div style="position:absolute;left:590px;top:338px;width:46px;height:1.5px;background:#dcdcdc"></div><div style="position:absolute;left:680.5px;top:324px;width:2px;height:15px;background:#dcdcdc"></div><div style="position:absolute;left:636px;top:338px;width:46px;height:1.5px;background:#dcdcdc"></div><div style="position:absolute;left:726.5px;top:324px;width:2px;height:15px;background:#dcdcdc"></div><div style="position:absolute;left:682px;top:338px;width:46px;height:1.5px;background:#dcdcdc"></div><div style="position:absolute;left:772.5px;top:324px;width:2px;height:15px;background:#dcdcdc"></div><div style="position:absolute;left:728px;top:338px;width:46px;height:1.5px;background:#dcdcdc"></div><div style="position:absolute;left:818.5px;top:324px;width:2px;height:15px;background:#dcdcdc"></div><div style="position:absolute;left:774px;top:338px;width:46px;height:1.5px;background:#dcdcdc"></div><div style="position:absolute;left:864.5px;top:324px;width:2px;height:15px;background:#dcdcdc"></div><div style="position:absolute;left:820px;top:338px;width:46px;height:1.5px;background:#dcdcdc"></div><div style="position:absolute;left:910.5px;top:324px;width:2px;height:15px;background:#dcdcdc"></div><div style="position:absolute;left:866px;top:338px;width:46px;height:1.5px;background:#dcdcdc"></div><div style="position:absolute;left:956.5px;top:324px;width:2px;height:15px;background:#dcdcdc"></div><div style="position:absolute;left:912px;top:338px;width:46px;height:1.5px;background:#dcdcdc"></div><div style="position:absolute;left:0;top:0;font-size:11px;line-height:13px;white-space:pre"><div style="position:absolute;left:406px;top:325.7px;width:43px;text-align:right">18.98</div><div style="position:absolute;left:452px;top:325.7px;width:43px;text-align:right">23.55</div><div style="position:absolute;left:498px;top:325.7px;width:43px;text-align:right">24.61</div><div style="position:absolute;left:544px;top:325.7px;width:43px;text-align:right">23.91</div><div style="position:absolute;left:590px;top:325.7px;width:43px;text-align:right">22.85</div><div style="position:absolute;left:636px;top:325.7px;width:43px;text-align:right">21.80</div><div style="position:absolute;left:682px;top:325.7px;width:43px;text-align:right">19.34</div><div style="position:absolute;left:728px;top:325.7px;width:43px;text-align:right">18.63</div><div style="position:absolute;left:774px;top:325.7px;width:43px;text-align:right">18.28</div><div style="position:absolute;left:820px;top:325.7px;width:43px;text-align:right">17.93</div><div style="position:absolute;left:866px;top:325.7px;width:43px;text-align:right">17.58</div><div style="position:absolute;left:912px;top:325.7px;width:43px;text-align:right">16.17</div></div><div style="position:absolute;left:361px;top:339px;width:45px;height:14px;box-sizing:border-box;border:1px solid #909090;background:#d4d0c8;box-shadow:inset 1px 1px #fff"></div><div style="position:absolute;left:361px;top:341px;width:41px;text-align:right;font-size:11px;line-height:13px;white-space:pre">5600</div><div style="position:absolute;left:450.5px;top:339px;width:2px;height:15px;background:#dcdcdc"></div><div style="position:absolute;left:406px;top:353px;width:46px;height:1.5px;background:#dcdcdc"></div><div style="position:absolute;left:496.5px;top:339px;width:2px;height:15px;background:#dcdcdc"></div><div style="position:absolute;left:452px;top:353px;width:46px;height:1.5px;background:#dcdcdc"></div><div style="position:absolute;left:542.5px;top:339px;width:2px;height:15px;background:#dcdcdc"></div><div style="position:absolute;left:498px;top:353px;width:46px;height:1.5px;background:#dcdcdc"></div><div style="position:absolute;left:588.5px;top:339px;width:2px;height:15px;background:#dcdcdc"></div><div style="position:absolute;left:544px;top:353px;width:46px;height:1.5px;background:#dcdcdc"></div><div style="position:absolute;left:634.5px;top:339px;width:2px;height:15px;background:#dcdcdc"></div><div style="position:absolute;left:590px;top:353px;width:46px;height:1.5px;background:#dcdcdc"></div><div style="position:absolute;left:680.5px;top:339px;width:2px;height:15px;background:#dcdcdc"></div><div style="position:absolute;left:636px;top:353px;width:46px;height:1.5px;background:#dcdcdc"></div><div style="position:absolute;left:726.5px;top:339px;width:2px;height:15px;background:#dcdcdc"></div><div style="position:absolute;left:682px;top:353px;width:46px;height:1.5px;background:#dcdcdc"></div><div style="position:absolute;left:772.5px;top:339px;width:2px;height:15px;background:#dcdcdc"></div><div style="position:absolute;left:728px;top:353px;width:46px;height:1.5px;background:#dcdcdc"></div><div style="position:absolute;left:818.5px;top:339px;width:2px;height:15px;background:#dcdcdc"></div><div style="position:absolute;left:774px;top:353px;width:46px;height:1.5px;background:#dcdcdc"></div><div style="position:absolute;left:864.5px;top:339px;width:2px;height:15px;background:#dcdcdc"></div><div style="position:absolute;left:820px;top:353px;width:46px;height:1.5px;background:#dcdcdc"></div><div style="position:absolute;left:910.5px;top:339px;width:2px;height:15px;background:#dcdcdc"></div><div style="position:absolute;left:866px;top:353px;width:46px;height:1.5px;background:#dcdcdc"></div><div style="position:absolute;left:956.5px;top:339px;width:2px;height:15px;background:#dcdcdc"></div><div style="position:absolute;left:912px;top:353px;width:46px;height:1.5px;background:#dcdcdc"></div><div style="position:absolute;left:0;top:0;font-size:11px;line-height:13px;white-space:pre"><div style="position:absolute;left:406px;top:340.7px;width:43px;text-align:right">17.93</div><div style="position:absolute;left:452px;top:340.7px;width:43px;text-align:right">22.50</div><div style="position:absolute;left:498px;top:340.7px;width:43px;text-align:right">23.91</div><div style="position:absolute;left:544px;top:340.7px;width:43px;text-align:right">22.85</div><div style="position:absolute;left:590px;top:340.7px;width:43px;text-align:right">22.15</div><div style="position:absolute;left:636px;top:340.7px;width:43px;text-align:right">22.15</div><div style="position:absolute;left:682px;top:340.7px;width:43px;text-align:right">22.15</div><div style="position:absolute;left:728px;top:340.7px;width:43px;text-align:right">22.15</div><div style="position:absolute;left:774px;top:340.7px;width:43px;text-align:right">20.39</div><div style="position:absolute;left:820px;top:340.7px;width:43px;text-align:right">19.69</div><div style="position:absolute;left:866px;top:340.7px;width:43px;text-align:right">17.58</div><div style="position:absolute;left:912px;top:340.7px;width:43px;text-align:right">16.17</div></div><div style="position:absolute;left:361px;top:354px;width:45px;height:14px;box-sizing:border-box;border:1px solid #909090;background:#d4d0c8;box-shadow:inset 1px 1px #fff"></div><div style="position:absolute;left:361px;top:356px;width:41px;text-align:right;font-size:11px;line-height:13px;white-space:pre">6000</div><div style="position:absolute;left:450.5px;top:354px;width:2px;height:15px;background:#dcdcdc"></div><div style="position:absolute;left:406px;top:368px;width:46px;height:1.5px;background:#dcdcdc"></div><div style="position:absolute;left:496.5px;top:354px;width:2px;height:15px;background:#dcdcdc"></div><div style="position:absolute;left:452px;top:368px;width:46px;height:1.5px;background:#dcdcdc"></div><div style="position:absolute;left:542.5px;top:354px;width:2px;height:15px;background:#dcdcdc"></div><div style="position:absolute;left:498px;top:368px;width:46px;height:1.5px;background:#dcdcdc"></div><div style="position:absolute;left:588.5px;top:354px;width:2px;height:15px;background:#dcdcdc"></div><div style="position:absolute;left:544px;top:368px;width:46px;height:1.5px;background:#dcdcdc"></div><div style="position:absolute;left:634.5px;top:354px;width:2px;height:15px;background:#dcdcdc"></div><div style="position:absolute;left:590px;top:368px;width:46px;height:1.5px;background:#dcdcdc"></div><div style="position:absolute;left:680.5px;top:354px;width:2px;height:15px;background:#dcdcdc"></div><div style="position:absolute;left:636px;top:368px;width:46px;height:1.5px;background:#dcdcdc"></div><div style="position:absolute;left:726.5px;top:354px;width:2px;height:15px;background:#dcdcdc"></div><div style="position:absolute;left:682px;top:368px;width:46px;height:1.5px;background:#dcdcdc"></div><div style="position:absolute;left:772.5px;top:354px;width:2px;height:15px;background:#dcdcdc"></div><div style="position:absolute;left:728px;top:368px;width:46px;height:1.5px;background:#dcdcdc"></div><div style="position:absolute;left:818.5px;top:354px;width:2px;height:15px;background:#dcdcdc"></div><div style="position:absolute;left:774px;top:368px;width:46px;height:1.5px;background:#dcdcdc"></div><div style="position:absolute;left:864.5px;top:354px;width:2px;height:15px;background:#dcdcdc"></div><div style="position:absolute;left:820px;top:368px;width:46px;height:1.5px;background:#dcdcdc"></div><div style="position:absolute;left:910.5px;top:354px;width:2px;height:15px;background:#dcdcdc"></div><div style="position:absolute;left:866px;top:368px;width:46px;height:1.5px;background:#dcdcdc"></div><div style="position:absolute;left:956.5px;top:354px;width:2px;height:15px;background:#dcdcdc"></div><div style="position:absolute;left:912px;top:368px;width:46px;height:1.5px;background:#dcdcdc"></div><div style="position:absolute;left:0;top:0;font-size:11px;line-height:13px;white-space:pre"><div style="position:absolute;left:406px;top:355.7px;width:43px;text-align:right">19.34</div><div style="position:absolute;left:452px;top:355.7px;width:43px;text-align:right">25.31</div><div style="position:absolute;left:498px;top:355.7px;width:43px;text-align:right">28.13</div><div style="position:absolute;left:544px;top:355.7px;width:43px;text-align:right">26.02</div><div style="position:absolute;left:590px;top:355.7px;width:43px;text-align:right">26.37</div><div style="position:absolute;left:636px;top:355.7px;width:43px;text-align:right">26.02</div><div style="position:absolute;left:682px;top:355.7px;width:43px;text-align:right">24.61</div><div style="position:absolute;left:728px;top:355.7px;width:43px;text-align:right">24.96</div><div style="position:absolute;left:774px;top:355.7px;width:43px;text-align:right">23.91</div><div style="position:absolute;left:820px;top:355.7px;width:43px;text-align:right">21.80</div><div style="position:absolute;left:866px;top:355.7px;width:43px;text-align:right">20.74</div><div style="position:absolute;left:912px;top:355.7px;width:43px;text-align:right">19.34</div></div><div style="position:absolute;left:406px;top:144px;width:46px;height:15px;box-sizing:border-box;border:1px solid #000;background:#d8d8d8"></div><div style="position:absolute;left:406px;top:145.7px;width:43px;text-align:right;font-size:11px;line-height:13px">-5.27</div><div style="position:absolute;left:942px;top:64px;width:1px;height:986px;background:#d4d0c8"></div><div style="position:absolute;left:943px;top:0px;width:1px;height:1050px;background:#fff"></div><div style="position:absolute;left:358px;top:405px;width:74px;height:17px;box-shadow:inset 1px 1px #808080,inset -1px -1px #fff"></div><div style="position:absolute;left:435px;top:405px;width:73px;height:17px;box-shadow:inset 1px 1px #808080,inset -1px -1px #fff"></div><div style="position:absolute;left:510px;top:405px;width:440px;height:17px;box-shadow:inset 1px 1px #808080,inset -1px -1px #fff"></div><div style="position:absolute;left:0px;top:1030px;width:942px;height:2px;background:#d4d0c8"></div><div style="position:absolute;left:0px;top:1032px;width:942px;height:1px;background:#808080"></div><div style="position:absolute;left:2px;top:1035px;font-size:11px;line-height:13px;color:#000;font-weight:normal;white-space:pre;">15x15 Table, Offset: 4252,  Cell Size: 8 Bit</div><div style="position:absolute;left:0px;top:1049px;width:942px;height:1px;background:#fff"></div><div style="position:absolute;left:944px;top:0px;width:976px;height:1050px;background:#d4d0c8"></div><div style="position:absolute;left:944px;top:0px;width:1px;height:1053px;background:#d4d0c8"></div><div style="position:absolute;left:946px;top:0px;width:974px;height:8px;background:linear-gradient(90deg,#0a246a,#a6caf0)"></div><div style="position:absolute;left:947px;top:0;width:300px;height:8px;overflow:hidden"><svg style="position:absolute;left:1px;top:-6px" width="16" height="14"><rect x="0" y="3" width="16" height="8" fill="#000"/><rect x="1" y="11" width="1.5" height="1.5" fill="#c8c8c8"/><rect x="4" y="11" width="1.5" height="1.5" fill="#c8c8c8"/><rect x="7" y="11" width="1.5" height="1.5" fill="#c8c8c8"/><rect x="10" y="11" width="1.5" height="1.5" fill="#c8c8c8"/><rect x="13" y="11" width="1.5" height="1.5" fill="#c8c8c8"/></svg><div style="position:absolute;left:19px;top:-7px;font-size:11px;line-height:13px;font-weight:bold;color:#fff;white-space:pre;transform:scaleX(1.12);transform-origin:0 0">+Зажигание-Октан 95</div></div><div style="position:absolute;left:1881px;top:-8px;width:16px;height:14px;background:#d4d0c8;box-shadow:inset -1px -1px #404040,inset 1px 1px #fff,inset -2px -2px #808080,inset 2px 2px #d4d0c8;"></div><div style="position:absolute;left:1897px;top:-8px;width:16px;height:14px;background:#d4d0c8;box-shadow:inset -1px -1px #404040,inset 1px 1px #fff,inset -2px -2px #808080,inset 2px 2px #d4d0c8;"></div><div style="position:absolute;left:1915px;top:-8px;width:16px;height:14px;background:#d4d0c8;box-shadow:inset -1px -1px #404040,inset 1px 1px #fff,inset -2px -2px #808080,inset 2px 2px #d4d0c8;"></div><svg style="position:absolute;left:1881px;top:0px" width="16" height="6" viewBox="0 0 16 6"><rect x="4" y="1" width="6" height="2" fill="#000"/></svg><svg style="position:absolute;left:1897px;top:0px" width="16" height="6" viewBox="0 0 16 6"><path d="M4 0v3.2h8.5V0" stroke="#000" stroke-width="1.3" fill="none"/></svg><div style="position:absolute;left:952px;top:11.6px;font-size:11px;line-height:13px;color:#000;font-weight:normal;white-space:pre;">Graph</div><div style="position:absolute;left:993px;top:11.6px;font-size:11px;line-height:13px;color:#000;font-weight:normal;white-space:pre;">View</div><div style="position:absolute;left:948px;top:30px;width:3px;height:21px;box-shadow:inset 1px 1px #fff,inset -1px -1px #808080"></div><svg style="position:absolute;left:959px;top:35px" width="13" height="14" viewBox="0 0 13 14"><path d="M1 1l11 12M12 1L1 13" stroke="#ff0000" stroke-width="2"/></svg><div style="position:absolute;left:985px;top:30px;width:3px;height:21px;box-shadow:inset 1px 1px #fff,inset -1px -1px #808080"></div><div style="position:absolute;left:992px;top:30px;width:23px;height:21px;background:repeating-conic-gradient(#fff 0 25%,#d4d0c8 0 50%) 0 0/2px 2px;box-shadow:inset 1px 1px #808080,inset -1px -1px #fff;"></div><div style="position:absolute;left:1038px;top:30px;width:23px;height:21px;background:repeating-conic-gradient(#fff 0 25%,#d4d0c8 0 50%) 0 0/2px 2px;box-shadow:inset 1px 1px #808080,inset -1px -1px #fff;"></div><div style="position:absolute;left:1061px;top:30px;width:23px;height:21px;background:repeating-conic-gradient(#fff 0 25%,#d4d0c8 0 50%) 0 0/2px 2px;box-shadow:inset 1px 1px #808080,inset -1px -1px #fff;"></div><div style="position:absolute;left:1084px;top:30px;width:23px;height:21px;background:repeating-conic-gradient(#fff 0 25%,#d4d0c8 0 50%) 0 0/2px 2px;box-shadow:inset 1px 1px #808080,inset -1px -1px #fff;"></div><svg style="position:absolute;left:995px;top:33px" width="16" height="16" viewBox="0 0 16 16"><path d="M8 1l7 7-7 7-7-7z" fill="#000"/><rect x="4.5" y="4.5" width="7" height="7" fill="#fff"/><path d="M8 4v8M4 8h8" stroke="#e00000" stroke-width="1.5"/></svg><svg style="position:absolute;left:1018px;top:33px" width="16" height="16" viewBox="0 0 16 16"><path d="M1 12l3-6 2 4 3-4 3-5v8" stroke="#e00000" stroke-width="0.8" fill="none"/><path d="M1 13l3-7 2 4 4-4 3-5 1 7" stroke="#0000ff" stroke-width="1" fill="none"/><circle cx="4" cy="6" r="1.3" fill="none" stroke="#00f"/><circle cx="6" cy="11" r="1.3" fill="none" stroke="#00f"/><circle cx="11" cy="6" r="1.3" fill="none" stroke="#00f"/><circle cx="13" cy="2" r="1.3" fill="none" stroke="#00f"/></svg><svg style="position:absolute;left:1041px;top:33px" width="16" height="16" viewBox="0 0 16 16"><path d="M1 2v13h14" stroke="#000" stroke-dasharray="1,1" fill="none"/><path d="M1 9l3-3 3 1 2-3 3 1 2 3" stroke="#0000ff" stroke-width="1.3" fill="none"/><path d="M1 13l3-2 3 1 2-3 3 1 3-3" stroke="#ff0000" stroke-width="1.3" fill="none"/></svg><svg style="position:absolute;left:1064px;top:33px" width="16" height="16" viewBox="0 0 16 16"><path d="M1.5 14.5h13M1.5 14.5l4-5h9l-3 5M5.5 9.5l3-4h6v4M8.5 5.5l2-3h4v3" stroke="#000" stroke-width="1.3" fill="none"/></svg><svg style="position:absolute;left:1087px;top:33px" width="16" height="16" viewBox="0 0 16 16"><path d="M1 4h11M1 7h11M1 10h11M1 13h11" stroke-width="1.5" fill="none"/><path d="M1 4h11" stroke="#f00" stroke-width="1.5"/><path d="M1 7h11" stroke="#c0c0c0" stroke-width="1.5"/><path d="M1 10h11" stroke="#e0e000" stroke-width="1.5"/><path d="M1 12h11" stroke="#00c000" stroke-width="1.5"/><path d="M1 14h11" stroke="#0000ff" stroke-width="1.5"/><path d="M14 1v14M12 3l2-2" stroke="#000" stroke-width="1.5"/></svg><div style="position:absolute;left:946px;top:53px;width:974px;height:997px;background:#fff"></div><div style="position:absolute;left:0px;top:1050px;width:1920px;height:1px;background:#d4d0c8"></div><div style="position:absolute;left:0px;top:1051px;width:1920px;height:1px;background:#fff"></div><div style="position:absolute;left:0px;top:1052px;width:1920px;height:1px;background:#d4d0c8"></div><div style="position:absolute;left:0px;top:1053px;width:920px;height:2px;background:#fff"></div><div style="position:absolute;left:920px;top:1053px;width:1000px;height:2px;background:#d4d0c8"></div><div style="position:absolute;left:922px;top:1053.5px;width:160px;height:1.5px;background:#303030"></div><div style="position:absolute;left:1745px;top:1053.5px;width:175px;height:1.5px;background:#303030"></div><svg width="1920" height="1055" style="position:absolute;left:0;top:0">
<g fill="none" stroke="#a8a8a8" stroke-width="1" stroke-dasharray="3,3" shape-rendering="crispEdges"><polyline points="1038.0,773.5 1408.5,565.2 1841.8,743.2"/><polyline points="1038.0,728.1 1408.5,519.8 1841.8,697.8"/><polyline points="1038.0,682.6 1408.5,474.3 1841.8,652.3"/><polyline points="1038.0,637.2 1408.5,428.9 1841.8,606.9"/><polyline points="1038.0,591.7 1408.5,383.4 1841.8,561.4"/><polyline points="1038.0,546.3 1408.5,338.0 1841.8,516.0"/><polyline points="1038.0,500.8 1408.5,292.5 1841.8,470.5"/><polyline points="1038.0,455.4 1408.5,247.1 1841.8,425.1"/><polyline points="1038.0,409.9 1408.5,201.6 1841.8,379.6"/><polyline points="1038.0,364.5 1408.5,156.2 1841.8,334.2"/><polyline points="1064.5,804.1 1497.8,982.1"/><polyline points="1090.9,789.2 1524.2,967.2"/><polyline points="1117.4,774.4 1550.7,952.4"/><polyline points="1143.9,759.5 1577.2,937.5"/><polyline points="1170.3,744.6 1603.6,922.6"/><polyline points="1196.8,729.7 1630.1,907.7"/><polyline points="1223.2,714.9 1656.5,892.9"/><polyline points="1249.7,700.0 1683.0,878.0"/><polyline points="1276.2,685.1 1709.5,863.1"/><polyline points="1302.6,670.2 1735.9,848.2"/><polyline points="1329.1,655.3 1762.4,833.3"/><polyline points="1355.6,640.5 1788.9,818.5"/><polyline points="1382.0,625.6 1815.3,803.6"/><polyline points="1065.1,830.1 1435.6,621.8"/><polyline points="1092.2,841.2 1462.7,633.0"/><polyline points="1119.2,852.4 1489.7,644.1"/><polyline points="1146.3,863.5 1516.8,655.2"/><polyline points="1173.4,874.6 1543.9,666.3"/><polyline points="1200.5,885.8 1571.0,677.5"/><polyline points="1227.6,896.9 1598.1,688.6"/><polyline points="1254.7,908.0 1625.2,699.7"/><polyline points="1281.7,919.1 1652.2,710.8"/><polyline points="1308.8,930.2 1679.3,722.0"/><polyline points="1335.9,941.4 1706.4,733.1"/><polyline points="1363.0,952.5 1733.5,744.2"/><polyline points="1390.1,963.6 1760.6,755.3"/><polyline points="1417.1,974.8 1787.6,766.5"/><polyline points="1444.2,985.9 1814.7,777.6"/></g>
<g fill="none" stroke="#a0a0a0" stroke-width="1" shape-rendering="crispEdges"><polyline points="1038.0,319.0 1038.0,819.0 1471.3,997.0 1841.8,788.7 1841.8,288.7"/><polyline points="1038.0,319.0 1408.5,110.7 1841.8,288.7"/><polyline points="1408.5,110.7 1408.5,610.7"/><polyline points="1038.0,819.0 1408.5,610.7 1841.8,788.7"/></g>
<g fill="none" stroke="#808080" stroke-width="1" shape-rendering="crispEdges"><polyline points="1038.0,710.3 1092.4,732.7 1146.8,755.0 1173.9,766.1 1201.1,777.3 1228.3,796.7 1255.5,811.9 1282.7,823.1 1309.9,834.3 1337.1,882.0 1364.3,913.5 1391.4,924.6 1418.7,939.9 1445.8,991.7 1471.3,1002.2"/><polyline points="1064.5,546.2 1118.8,523.9 1173.2,542.8 1200.4,553.9 1227.6,569.2 1254.8,588.4 1282.0,615.9 1309.1,679.9 1336.4,735.8 1363.5,767.2 1390.7,790.6 1417.9,809.9 1445.1,833.3 1472.3,864.7 1497.8,899.6"/><polyline points="1090.9,494.7 1145.3,473.8 1199.7,481.4 1226.9,498.1 1254.1,531.1 1281.2,555.9 1308.4,584.8 1335.6,621.9 1362.8,642.6 1390.0,671.6 1417.2,708.6 1444.4,745.6 1471.6,770.5 1498.7,814.5 1524.2,849.1"/><polyline points="1117.4,447.3 1171.8,410.2 1226.2,430.0 1253.3,462.9 1280.5,479.7 1307.7,504.5 1334.9,533.4 1362.1,562.3 1389.3,591.2 1416.5,616.0 1443.7,640.9 1470.8,665.7 1498.1,698.7 1525.2,738.7 1550.7,765.1"/><polyline points="1143.9,436.5 1198.2,411.5 1252.6,431.3 1279.8,443.9 1307.0,477.0 1334.2,497.7 1361.4,530.7 1388.5,559.6 1415.8,600.8 1442.9,613.4 1470.1,630.1 1497.3,650.8 1524.5,675.8 1551.7,699.4 1577.2,730.0"/><polyline points="1170.3,433.8 1224.7,429.2 1279.1,428.7 1306.2,441.3 1333.5,458.0 1360.6,482.8 1387.8,523.9 1415.0,544.8 1442.2,573.6 1469.4,598.5 1496.6,615.2 1523.8,636.0 1551.0,660.9 1578.1,680.5 1603.6,727.2"/><polyline points="1196.8,406.7 1251.2,394.0 1305.5,389.4 1332.7,414.2 1359.9,439.1 1387.1,451.7 1414.3,480.6 1441.5,493.2 1468.7,514.1 1495.8,542.9 1523.1,563.8 1550.2,600.9 1577.4,646.0 1604.6,658.7 1630.1,691.0"/><polyline points="1223.2,371.5 1277.6,342.5 1332.0,354.2 1359.2,379.0 1386.4,395.8 1413.6,420.6 1440.8,437.3 1467.9,466.2 1495.1,487.0 1522.3,520.0 1549.5,557.0 1576.7,586.0 1603.9,622.9 1631.1,647.8 1656.5,672.0"/><polyline points="1249.7,352.6 1304.1,327.6 1358.5,335.2 1385.6,372.3 1412.9,397.1 1440.0,409.7 1467.2,434.7 1494.4,451.3 1521.6,480.2 1548.8,517.2 1576.0,550.2 1603.2,583.2 1630.4,616.3 1657.5,649.2 1683.0,681.4"/><polyline points="1276.2,349.9 1330.6,337.1 1384.9,332.5 1412.1,357.4 1439.3,382.2 1466.5,398.9 1493.7,427.9 1520.9,460.9 1548.1,493.9 1575.2,530.9 1602.5,563.8 1629.6,600.8 1656.8,633.9 1684.0,654.6 1709.5,690.9"/><polyline points="1302.6,313.6 1357.0,272.4 1411.4,247.5 1438.6,272.2 1465.8,309.3 1492.9,334.2 1520.2,379.4 1547.3,420.4 1574.5,445.2 1601.7,478.2 1628.9,515.3 1656.1,552.3 1683.3,573.1 1710.5,611.3 1735.9,656.3"/><polyline points="1329.1,316.1 1383.5,283.0 1437.9,278.4 1465.0,315.4 1492.2,328.1 1519.4,365.1 1546.6,377.8 1573.8,406.7 1601.0,423.4 1628.2,448.2 1655.4,473.1 1682.5,518.3 1709.8,543.2 1736.9,593.5 1762.4,634.5"/><polyline points="1355.6,274.0 1410.0,245.0 1464.3,256.5 1491.5,277.3 1518.7,302.2 1545.9,327.0 1573.1,368.1 1600.3,388.9 1627.5,405.7 1654.6,422.3 1681.9,439.1 1709.0,468.0 1736.2,492.8 1763.4,555.4 1788.9,596.4"/><polyline points="1382.0,272.4 1436.4,243.4 1490.8,250.9 1518.0,275.8 1545.2,296.6 1572.3,309.2 1599.6,321.9 1626.7,334.5 1653.9,367.5 1681.1,388.3 1708.3,425.3 1735.5,454.3 1762.7,475.0 1789.9,521.3 1815.3,562.3"/><polyline points="1408.5,242.4 1462.9,197.2 1517.3,188.4 1544.4,225.4 1571.6,234.1 1598.8,250.8 1626.0,279.7 1653.2,288.3 1680.4,313.1 1707.6,350.2 1734.8,375.1 1761.9,403.9 1789.2,424.8 1816.3,474.0 1841.8,510.3"/><polyline points="1038.0,710.3 1064.5,546.2 1090.9,494.7 1117.4,447.3 1143.9,436.5 1170.3,433.8 1196.8,406.7 1223.2,371.5 1249.7,352.6 1276.2,349.9 1302.6,313.6 1329.1,316.1 1355.6,274.0 1382.0,272.4 1408.5,242.4"/><polyline points="1092.4,732.7 1118.8,523.9 1145.3,473.8 1171.8,410.2 1198.2,411.5 1224.7,429.2 1251.2,394.0 1277.6,342.5 1304.1,327.6 1330.6,337.1 1357.0,272.4 1383.5,283.0 1410.0,245.0 1436.4,243.4 1462.9,197.2"/><polyline points="1146.8,755.0 1173.2,542.8 1199.7,481.4 1226.2,430.0 1252.6,431.3 1279.1,428.7 1305.5,389.4 1332.0,354.2 1358.5,335.2 1384.9,332.5 1411.4,247.5 1437.9,278.4 1464.3,256.5 1490.8,250.9 1517.3,188.4"/><polyline points="1173.9,766.1 1200.4,553.9 1226.9,498.1 1253.3,462.9 1279.8,443.9 1306.2,441.3 1332.7,414.2 1359.2,379.0 1385.6,372.3 1412.1,357.4 1438.6,272.2 1465.0,315.4 1491.5,277.3 1518.0,275.8 1544.4,225.4"/><polyline points="1201.1,777.3 1227.6,569.2 1254.1,531.1 1280.5,479.7 1307.0,477.0 1333.5,458.0 1359.9,439.1 1386.4,395.8 1412.9,397.1 1439.3,382.2 1465.8,309.3 1492.2,328.1 1518.7,302.2 1545.2,296.6 1571.6,234.1"/><polyline points="1228.3,796.7 1254.8,588.4 1281.2,555.9 1307.7,504.5 1334.2,497.7 1360.6,482.8 1387.1,451.7 1413.6,420.6 1440.0,409.7 1466.5,398.9 1492.9,334.2 1519.4,365.1 1545.9,327.0 1572.3,309.2 1598.8,250.8"/><polyline points="1255.5,811.9 1282.0,615.9 1308.4,584.8 1334.9,533.4 1361.4,530.7 1387.8,523.9 1414.3,480.6 1440.8,437.3 1467.2,434.7 1493.7,427.9 1520.2,379.4 1546.6,377.8 1573.1,368.1 1599.6,321.9 1626.0,279.7"/><polyline points="1282.7,823.1 1309.1,679.9 1335.6,621.9 1362.1,562.3 1388.5,559.6 1415.0,544.8 1441.5,493.2 1467.9,466.2 1494.4,451.3 1520.9,460.9 1547.3,420.4 1573.8,406.7 1600.3,388.9 1626.7,334.5 1653.2,288.3"/><polyline points="1309.9,834.3 1336.4,735.8 1362.8,642.6 1389.3,591.2 1415.8,600.8 1442.2,573.6 1468.7,514.1 1495.1,487.0 1521.6,480.2 1548.1,493.9 1574.5,445.2 1601.0,423.4 1627.5,405.7 1653.9,367.5 1680.4,313.1"/><polyline points="1337.1,882.0 1363.5,767.2 1390.0,671.6 1416.5,616.0 1442.9,613.4 1469.4,598.5 1495.8,542.9 1522.3,520.0 1548.8,517.2 1575.2,530.9 1601.7,478.2 1628.2,448.2 1654.6,422.3 1681.1,388.3 1707.6,350.2"/><polyline points="1364.3,913.5 1390.7,790.6 1417.2,708.6 1443.7,640.9 1470.1,630.1 1496.6,615.2 1523.1,563.8 1549.5,557.0 1576.0,550.2 1602.5,563.8 1628.9,515.3 1655.4,473.1 1681.9,439.1 1708.3,425.3 1734.8,375.1"/><polyline points="1391.4,924.6 1417.9,809.9 1444.4,745.6 1470.8,665.7 1497.3,650.8 1523.8,636.0 1550.2,600.9 1576.7,586.0 1603.2,583.2 1629.6,600.8 1656.1,552.3 1682.5,518.3 1709.0,468.0 1735.5,454.3 1761.9,403.9"/><polyline points="1418.7,939.9 1445.1,833.3 1471.6,770.5 1498.1,698.7 1524.5,675.8 1551.0,660.9 1577.4,646.0 1603.9,622.9 1630.4,616.3 1656.8,633.9 1683.3,573.1 1709.8,543.2 1736.2,492.8 1762.7,475.0 1789.2,424.8"/><polyline points="1445.8,991.7 1472.3,864.7 1498.7,814.5 1525.2,738.7 1551.7,699.4 1578.1,680.5 1604.6,658.7 1631.1,647.8 1657.5,649.2 1684.0,654.6 1710.5,611.3 1736.9,593.5 1763.4,555.4 1789.9,521.3 1816.3,474.0"/><polyline points="1471.3,1002.2 1497.8,899.6 1524.2,849.1 1550.7,765.1 1577.2,730.0 1603.6,727.2 1630.1,691.0 1656.5,672.0 1683.0,681.4 1709.5,690.9 1735.9,656.3 1762.4,634.5 1788.9,596.4 1815.3,562.3 1841.8,510.3"/></g>
<g fill="none" stroke="#000" stroke-width="2" stroke-linejoin="miter" shape-rendering="crispEdges"><polyline points="1038.0,705.1 1092.4,727.4 1146.8,749.8 1173.9,760.9 1201.1,772.1 1228.3,791.5 1255.5,806.7 1282.7,817.9 1309.9,829.1 1337.1,876.7 1364.3,908.3 1391.4,919.4 1418.7,934.7 1445.8,986.5 1471.3,997.0"/><polyline points="1064.5,527.7 1118.8,513.5 1173.2,535.8 1200.4,547.0 1227.6,562.2 1254.8,581.5 1282.0,609.0 1309.1,672.9 1336.4,728.9 1363.5,760.3 1390.7,783.7 1417.9,802.9 1445.1,826.4 1472.3,857.8 1497.8,892.6"/><polyline points="1090.9,460.0 1145.3,437.6 1199.7,443.7 1226.9,458.9 1254.1,490.5 1281.2,513.8 1308.4,541.3 1335.6,576.8 1362.8,596.1 1390.0,623.5 1417.2,659.1 1444.4,694.5 1471.6,718.0 1498.7,753.5 1524.2,784.3"/><polyline points="1117.4,420.7 1171.8,382.1 1226.2,400.4 1253.3,431.8 1280.5,447.2 1307.7,470.5 1334.9,497.9 1362.1,525.3 1389.3,552.8 1416.5,576.1 1443.7,599.5 1470.8,622.8 1498.1,654.3 1525.2,685.8 1550.7,708.4"/><polyline points="1143.9,409.9 1198.2,383.4 1252.6,401.7 1279.8,412.9 1307.0,444.4 1334.2,463.7 1361.4,495.2 1388.5,522.7 1415.8,562.3 1442.9,573.4 1470.1,588.7 1497.3,607.9 1524.5,631.3 1551.7,646.5 1577.2,673.3"/><polyline points="1170.3,407.3 1224.7,401.2 1279.1,399.1 1306.2,410.3 1333.5,425.5 1360.6,448.8 1387.8,488.4 1415.0,507.8 1442.2,535.1 1469.4,558.6 1496.6,573.8 1523.8,593.0 1551.0,616.5 1578.1,627.6 1603.6,670.6"/><polyline points="1196.8,380.1 1251.2,365.9 1305.5,359.8 1332.7,383.1 1359.9,406.6 1387.1,417.7 1414.3,445.1 1441.5,456.2 1468.7,475.6 1495.8,503.0 1523.1,522.4 1550.2,557.9 1577.4,601.6 1604.6,612.7 1630.1,643.6"/><polyline points="1223.2,344.9 1277.6,314.4 1332.0,324.6 1359.2,347.9 1386.4,363.3 1413.6,386.5 1440.8,401.8 1467.9,429.2 1495.1,448.5 1522.3,480.0 1549.5,515.6 1576.7,543.0 1603.9,578.5 1631.1,601.9 1656.5,624.6"/><polyline points="1249.7,326.0 1304.1,299.5 1358.5,305.7 1385.6,341.2 1412.9,364.6 1440.0,375.7 1467.2,399.2 1494.4,414.4 1521.6,441.7 1548.8,477.3 1576.0,508.8 1603.2,540.3 1630.4,571.8 1657.5,603.3 1683.0,634.0"/><polyline points="1276.2,323.4 1330.6,309.0 1384.9,302.9 1412.1,326.4 1439.3,349.7 1466.5,364.9 1493.7,392.4 1520.9,423.9 1548.1,455.4 1575.2,490.9 1602.5,522.4 1629.6,557.9 1656.8,589.4 1684.0,608.7 1709.5,643.5"/><polyline points="1302.6,288.1 1357.0,245.5 1411.4,219.1 1438.6,242.4 1465.8,277.9 1492.9,301.3 1520.2,345.0 1547.3,384.6 1574.5,407.9 1601.7,439.4 1628.9,475.0 1656.1,510.5 1683.3,529.8 1710.5,557.3 1735.9,596.2"/><polyline points="1329.1,289.5 1383.5,254.9 1437.9,248.8 1465.0,284.3 1492.2,295.5 1519.4,331.1 1546.6,342.3 1573.8,369.7 1601.0,384.9 1628.2,408.2 1655.4,431.7 1682.5,475.3 1709.8,498.8 1736.9,538.4 1762.4,573.2"/><polyline points="1355.6,246.2 1410.0,215.7 1464.3,225.8 1491.5,245.1 1518.7,268.5 1545.9,291.8 1573.1,331.4 1600.3,350.8 1627.5,366.0 1654.6,381.2 1681.9,396.5 1709.0,423.9 1736.2,447.2 1763.4,499.1 1788.9,533.9"/><polyline points="1382.0,243.5 1436.4,213.0 1490.8,219.0 1518.0,242.5 1545.2,261.7 1572.3,272.9 1599.6,284.1 1626.7,295.2 1653.9,326.8 1681.1,346.0 1708.3,381.6 1735.5,409.0 1762.7,428.3 1789.9,463.9 1815.3,498.7"/><polyline points="1408.5,212.3 1462.9,165.6 1517.3,155.4 1544.4,190.9 1571.6,198.1 1598.8,213.3 1626.0,240.7 1653.2,247.9 1680.4,271.2 1707.6,306.7 1734.8,330.2 1761.9,357.5 1789.2,376.9 1816.3,424.6 1841.8,459.4"/><polyline points="1038.0,705.1 1064.5,527.7 1090.9,460.0 1117.4,420.7 1143.9,409.9 1170.3,407.3 1196.8,380.1 1223.2,344.9 1249.7,326.0 1276.2,323.4 1302.6,288.1 1329.1,289.5 1355.6,246.2 1382.0,243.5 1408.5,212.3"/><polyline points="1092.4,727.4 1118.8,513.5 1145.3,437.6 1171.8,382.1 1198.2,383.4 1224.7,401.2 1251.2,365.9 1277.6,314.4 1304.1,299.5 1330.6,309.0 1357.0,245.5 1383.5,254.9 1410.0,215.7 1436.4,213.0 1462.9,165.6"/><polyline points="1146.8,749.8 1173.2,535.8 1199.7,443.7 1226.2,400.4 1252.6,401.7 1279.1,399.1 1305.5,359.8 1332.0,324.6 1358.5,305.7 1384.9,302.9 1411.4,219.1 1437.9,248.8 1464.3,225.8 1490.8,219.0 1517.3,155.4"/><polyline points="1173.9,760.9 1200.4,547.0 1226.9,458.9 1253.3,431.8 1279.8,412.9 1306.2,410.3 1332.7,383.1 1359.2,347.9 1385.6,341.2 1412.1,326.4 1438.6,242.4 1465.0,284.3 1491.5,245.1 1518.0,242.5 1544.4,190.9"/><polyline points="1201.1,772.1 1227.6,562.2 1254.1,490.5 1280.5,447.2 1307.0,444.4 1333.5,425.5 1359.9,406.6 1386.4,363.3 1412.9,364.6 1439.3,349.7 1465.8,277.9 1492.2,295.5 1518.7,268.5 1545.2,261.7 1571.6,198.1"/><polyline points="1228.3,791.5 1254.8,581.5 1281.2,513.8 1307.7,470.5 1334.2,463.7 1360.6,448.8 1387.1,417.7 1413.6,386.5 1440.0,375.7 1466.5,364.9 1492.9,301.3 1519.4,331.1 1545.9,291.8 1572.3,272.9 1598.8,213.3"/><polyline points="1255.5,806.7 1282.0,609.0 1308.4,541.3 1334.9,497.9 1361.4,495.2 1387.8,488.4 1414.3,445.1 1440.8,401.8 1467.2,399.2 1493.7,392.4 1520.2,345.0 1546.6,342.3 1573.1,331.4 1599.6,284.1 1626.0,240.7"/><polyline points="1282.7,817.9 1309.1,672.9 1335.6,576.8 1362.1,525.3 1388.5,522.7 1415.0,507.8 1441.5,456.2 1467.9,429.2 1494.4,414.4 1520.9,423.9 1547.3,384.6 1573.8,369.7 1600.3,350.8 1626.7,295.2 1653.2,247.9"/><polyline points="1309.9,829.1 1336.4,728.9 1362.8,596.1 1389.3,552.8 1415.8,562.3 1442.2,535.1 1468.7,475.6 1495.1,448.5 1521.6,441.7 1548.1,455.4 1574.5,407.9 1601.0,384.9 1627.5,366.0 1653.9,326.8 1680.4,271.2"/><polyline points="1337.1,876.7 1363.5,760.3 1390.0,623.5 1416.5,576.1 1442.9,573.4 1469.4,558.6 1495.8,503.0 1522.3,480.0 1548.8,477.3 1575.2,490.9 1601.7,439.4 1628.2,408.2 1654.6,381.2 1681.1,346.0 1707.6,306.7"/><polyline points="1364.3,908.3 1390.7,783.7 1417.2,659.1 1443.7,599.5 1470.1,588.7 1496.6,573.8 1523.1,522.4 1549.5,515.6 1576.0,508.8 1602.5,522.4 1628.9,475.0 1655.4,431.7 1681.9,396.5 1708.3,381.6 1734.8,330.2"/><polyline points="1391.4,919.4 1417.9,802.9 1444.4,694.5 1470.8,622.8 1497.3,607.9 1523.8,593.0 1550.2,557.9 1576.7,543.0 1603.2,540.3 1629.6,557.9 1656.1,510.5 1682.5,475.3 1709.0,423.9 1735.5,409.0 1761.9,357.5"/><polyline points="1418.7,934.7 1445.1,826.4 1471.6,718.0 1498.1,654.3 1524.5,631.3 1551.0,616.5 1577.4,601.6 1603.9,578.5 1630.4,571.8 1656.8,589.4 1683.3,529.8 1709.8,498.8 1736.2,447.2 1762.7,428.3 1789.2,376.9"/><polyline points="1445.8,986.5 1472.3,857.8 1498.7,753.5 1525.2,685.8 1551.7,646.5 1578.1,627.6 1604.6,612.7 1631.1,601.9 1657.5,603.3 1684.0,608.7 1710.5,557.3 1736.9,538.4 1763.4,499.1 1789.9,463.9 1816.3,424.6"/><polyline points="1471.3,997.0 1497.8,892.6 1524.2,784.3 1550.7,708.4 1577.2,673.3 1603.6,670.6 1630.1,643.6 1656.5,624.6 1683.0,634.0 1709.5,643.5 1735.9,596.2 1762.4,573.2 1788.9,533.9 1815.3,498.7 1841.8,459.4"/></g>
<circle cx="1038.0" cy="705.1" r="5" fill="#22c8e0" stroke="#000" stroke-width="1"/>
</svg><div style="position:absolute;left:1238.8px;width:400px;text-align:center;top:54.5px;font-size:10px;line-height:12.0px;color:#c4c4c4;font-weight:normal;white-space:pre;transform:scaleX(0.92);transform-origin:50% 0;">TunerPro - Version 5.00</div><div style="position:absolute;left:1238.6px;width:400px;text-align:center;top:68.5px;font-size:15px;line-height:18.0px;color:#000;font-weight:bold;white-space:pre;">+Çàæèãàíèå-Îêòàí 95</div><div style="position:absolute;left:1833px;top:65px;width:83px;height:20px;box-sizing:border-box;border:1px solid #000;background:#ffff99"></div><div style="position:absolute;left:1835.5px;top:68.6px;font-size:11px;line-height:13.2px;color:#000;font-weight:normal;white-space:pre;transform:scaleX(0.95);transform-origin:0 0;">1 Point Selected</div><div style="position:absolute;right:887px;top:315.9px;font-size:10px;line-height:12.0px;color:#0000ff;font-weight:normal;white-space:pre;transform:scaleX(0.9);transform-origin:100% 0;">28.13</div><div style="position:absolute;left:1844px;top:285.5px;font-size:10px;line-height:12.0px;color:#0000ff;font-weight:normal;white-space:pre;transform:scaleX(0.9);transform-origin:0 0;">28.13</div><div style="position:absolute;right:887px;top:361.4px;font-size:10px;line-height:12.0px;color:#0000ff;font-weight:normal;white-space:pre;transform:scaleX(0.9);transform-origin:100% 0;">24.20</div><div style="position:absolute;left:1844px;top:331.0px;font-size:10px;line-height:12.0px;color:#0000ff;font-weight:normal;white-space:pre;transform:scaleX(0.9);transform-origin:0 0;">24.20</div><div style="position:absolute;right:887px;top:406.8px;font-size:10px;line-height:12.0px;color:#0000ff;font-weight:normal;white-space:pre;transform:scaleX(0.9);transform-origin:100% 0;">20.27</div><div style="position:absolute;left:1844px;top:376.4px;font-size:10px;line-height:12.0px;color:#0000ff;font-weight:normal;white-space:pre;transform:scaleX(0.9);transform-origin:0 0;">20.27</div><div style="position:absolute;right:887px;top:452.3px;font-size:10px;line-height:12.0px;color:#0000ff;font-weight:normal;white-space:pre;transform:scaleX(0.9);transform-origin:100% 0;">16.33</div><div style="position:absolute;left:1844px;top:421.9px;font-size:10px;line-height:12.0px;color:#0000ff;font-weight:normal;white-space:pre;transform:scaleX(0.9);transform-origin:0 0;">16.33</div><div style="position:absolute;right:887px;top:497.7px;font-size:10px;line-height:12.0px;color:#0000ff;font-weight:normal;white-space:pre;transform:scaleX(0.9);transform-origin:100% 0;">12.40</div><div style="position:absolute;left:1844px;top:467.3px;font-size:10px;line-height:12.0px;color:#0000ff;font-weight:normal;white-space:pre;transform:scaleX(0.9);transform-origin:0 0;">12.40</div><div style="position:absolute;right:887px;top:543.2px;font-size:10px;line-height:12.0px;color:#0000ff;font-weight:normal;white-space:pre;transform:scaleX(0.9);transform-origin:100% 0;">8.47</div><div style="position:absolute;left:1844px;top:512.8px;font-size:10px;line-height:12.0px;color:#0000ff;font-weight:normal;white-space:pre;transform:scaleX(0.9);transform-origin:0 0;">8.47</div><div style="position:absolute;right:887px;top:588.6px;font-size:10px;line-height:12.0px;color:#0000ff;font-weight:normal;white-space:pre;transform:scaleX(0.9);transform-origin:100% 0;">4.54</div><div style="position:absolute;left:1844px;top:558.2px;font-size:10px;line-height:12.0px;color:#0000ff;font-weight:normal;white-space:pre;transform:scaleX(0.9);transform-origin:0 0;">4.54</div><div style="position:absolute;right:887px;top:634.1px;font-size:10px;line-height:12.0px;color:#0000ff;font-weight:normal;white-space:pre;transform:scaleX(0.9);transform-origin:100% 0;">0.61</div><div style="position:absolute;left:1844px;top:603.7px;font-size:10px;line-height:12.0px;color:#0000ff;font-weight:normal;white-space:pre;transform:scaleX(0.9);transform-origin:0 0;">0.61</div><div style="position:absolute;right:887px;top:679.6px;font-size:10px;line-height:12.0px;color:#0000ff;font-weight:normal;white-space:pre;transform:scaleX(0.9);transform-origin:100% 0;">-3.32</div><div style="position:absolute;left:1844px;top:649.2px;font-size:10px;line-height:12.0px;color:#0000ff;font-weight:normal;white-space:pre;transform:scaleX(0.9);transform-origin:0 0;">-3.32</div><div style="position:absolute;right:887px;top:725.0px;font-size:10px;line-height:12.0px;color:#0000ff;font-weight:normal;white-space:pre;transform:scaleX(0.9);transform-origin:100% 0;">-7.26</div><div style="position:absolute;left:1844px;top:694.6px;font-size:10px;line-height:12.0px;color:#0000ff;font-weight:normal;white-space:pre;transform:scaleX(0.9);transform-origin:0 0;">-7.26</div><div style="position:absolute;right:887px;top:770.5px;font-size:10px;line-height:12.0px;color:#0000ff;font-weight:normal;white-space:pre;transform:scaleX(0.9);transform-origin:100% 0;">-11.19</div><div style="position:absolute;left:1844px;top:740.1px;font-size:10px;line-height:12.0px;color:#0000ff;font-weight:normal;white-space:pre;transform:scaleX(0.9);transform-origin:0 0;">-11.19</div><div style="position:absolute;right:887.0px;top:815.7px;font-size:10px;line-height:12.0px;color:#000;font-weight:normal;white-space:pre;transform:scaleX(0.9);transform-origin:100% 0;">19.77</div><div style="position:absolute;right:832.6201980942828px;top:838.1px;font-size:10px;line-height:12.0px;color:#000;font-weight:normal;white-space:pre;transform:scaleX(0.9);transform-origin:100% 0;">29.78</div><div style="position:absolute;right:778.2403961885657px;top:860.4px;font-size:10px;line-height:12.0px;color:#000;font-weight:normal;white-space:pre;transform:scaleX(0.9);transform-origin:100% 0;">39.79</div><div style="position:absolute;right:751.0776579739218px;top:871.6px;font-size:10px;line-height:12.0px;color:#000;font-weight:normal;white-space:pre;transform:scaleX(0.9);transform-origin:100% 0;">44.79</div><div style="position:absolute;right:723.8605942828485px;top:882.7px;font-size:10px;line-height:12.0px;color:#000;font-weight:normal;white-space:pre;transform:scaleX(0.9);transform-origin:100% 0;">49.80</div><div style="position:absolute;right:696.6978560682046px;top:893.9px;font-size:10px;line-height:12.0px;color:#000;font-weight:normal;white-space:pre;transform:scaleX(0.9);transform-origin:100% 0;">54.80</div><div style="position:absolute;right:669.4807923771314px;top:905.1px;font-size:10px;line-height:12.0px;color:#000;font-weight:normal;white-space:pre;transform:scaleX(0.9);transform-origin:100% 0;">59.81</div><div style="position:absolute;right:642.3180541624874px;top:916.2px;font-size:10px;line-height:12.0px;color:#000;font-weight:normal;white-space:pre;transform:scaleX(0.9);transform-origin:100% 0;">64.81</div><div style="position:absolute;right:615.1009904714142px;top:927.4px;font-size:10px;line-height:12.0px;color:#000;font-weight:normal;white-space:pre;transform:scaleX(0.9);transform-origin:100% 0;">69.82</div><div style="position:absolute;right:587.9382522567703px;top:938.6px;font-size:10px;line-height:12.0px;color:#000;font-weight:normal;white-space:pre;transform:scaleX(0.9);transform-origin:100% 0;">74.82</div><div style="position:absolute;right:560.721188565697px;top:949.8px;font-size:10px;line-height:12.0px;color:#000;font-weight:normal;white-space:pre;transform:scaleX(0.9);transform-origin:100% 0;">79.83</div><div style="position:absolute;right:533.5584503510531px;top:960.9px;font-size:10px;line-height:12.0px;color:#000;font-weight:normal;white-space:pre;transform:scaleX(0.9);transform-origin:100% 0;">84.83</div><div style="position:absolute;right:506.3413866599799px;top:972.1px;font-size:10px;line-height:12.0px;color:#000;font-weight:normal;white-space:pre;transform:scaleX(0.9);transform-origin:100% 0;">89.84</div><div style="position:absolute;right:479.17864844533597px;top:983.2px;font-size:10px;line-height:12.0px;color:#000;font-weight:normal;white-space:pre;transform:scaleX(0.9);transform-origin:100% 0;">94.84</div><div style="position:absolute;right:453.70000000000005px;top:993.7px;font-size:10px;line-height:12.0px;color:#000;font-weight:normal;white-space:pre;transform:scaleX(0.9);transform-origin:100% 0;">99.53</div><div style="position:absolute;left:1473.3px;top:993.6px;font-size:10px;line-height:12.0px;color:#ff0000;font-weight:normal;white-space:pre;transform:scaleX(0.9);transform-origin:0 0;">400</div><div style="position:absolute;left:1499.7642857142857px;top:978.7px;font-size:10px;line-height:12.0px;color:#ff0000;font-weight:normal;white-space:pre;transform:scaleX(0.9);transform-origin:0 0;">800</div><div style="position:absolute;left:1526.2285714285713px;top:963.9px;font-size:10px;line-height:12.0px;color:#ff0000;font-weight:normal;white-space:pre;transform:scaleX(0.9);transform-origin:0 0;">1200</div><div style="position:absolute;left:1552.692857142857px;top:949.0px;font-size:10px;line-height:12.0px;color:#ff0000;font-weight:normal;white-space:pre;transform:scaleX(0.9);transform-origin:0 0;">1600</div><div style="position:absolute;left:1579.1571428571428px;top:934.1px;font-size:10px;line-height:12.0px;color:#ff0000;font-weight:normal;white-space:pre;transform:scaleX(0.9);transform-origin:0 0;">2000</div><div style="position:absolute;left:1605.6214285714286px;top:919.2px;font-size:10px;line-height:12.0px;color:#ff0000;font-weight:normal;white-space:pre;transform:scaleX(0.9);transform-origin:0 0;">2400</div><div style="position:absolute;left:1632.0857142857142px;top:904.3px;font-size:10px;line-height:12.0px;color:#ff0000;font-weight:normal;white-space:pre;transform:scaleX(0.9);transform-origin:0 0;">2800</div><div style="position:absolute;left:1658.55px;top:889.5px;font-size:10px;line-height:12.0px;color:#ff0000;font-weight:normal;white-space:pre;transform:scaleX(0.9);transform-origin:0 0;">3200</div><div style="position:absolute;left:1685.0142857142857px;top:874.6px;font-size:10px;line-height:12.0px;color:#ff0000;font-weight:normal;white-space:pre;transform:scaleX(0.9);transform-origin:0 0;">3600</div><div style="position:absolute;left:1711.4785714285713px;top:859.7px;font-size:10px;line-height:12.0px;color:#ff0000;font-weight:normal;white-space:pre;transform:scaleX(0.9);transform-origin:0 0;">4000</div><div style="position:absolute;left:1737.942857142857px;top:844.8px;font-size:10px;line-height:12.0px;color:#ff0000;font-weight:normal;white-space:pre;transform:scaleX(0.9);transform-origin:0 0;">4400</div><div style="position:absolute;left:1764.4071428571428px;top:830.0px;font-size:10px;line-height:12.0px;color:#ff0000;font-weight:normal;white-space:pre;transform:scaleX(0.9);transform-origin:0 0;">4800</div><div style="position:absolute;left:1790.8714285714286px;top:815.1px;font-size:10px;line-height:12.0px;color:#ff0000;font-weight:normal;white-space:pre;transform:scaleX(0.9);transform-origin:0 0;">5200</div><div style="position:absolute;left:1817.3357142857142px;top:800.2px;font-size:10px;line-height:12.0px;color:#ff0000;font-weight:normal;white-space:pre;transform:scaleX(0.9);transform-origin:0 0;">5600</div><div style="position:absolute;left:1843.8px;top:785.3px;font-size:10px;line-height:12.0px;color:#ff0000;font-weight:normal;white-space:pre;transform:scaleX(0.9);transform-origin:0 0;">6000</div><div style="position:absolute;left:1026.8px;width:400px;text-align:center;top:936.7px;font-size:10px;line-height:12.0px;color:#808080;font-weight:bold;white-space:pre;-webkit-text-stroke:0.5px #808080;transform:scaleX(0.95);transform-origin:50% 0;">MAP</div><div style="position:absolute;left:1486.6px;width:400px;text-align:center;top:919.1px;font-size:10px;line-height:12.0px;color:#ff0000;font-weight:bold;white-space:pre;-webkit-text-stroke:0.4px #ff0000;">RPM</div><svg style="position:absolute;left:1760px;top:985px" width="160" height="70" viewBox="0 0 160 70"><g fill="#f6f6f6" stroke="#707070" stroke-width="0.7"><path d="M10 9l32 7v20L14 17z"/><path d="M13 21l29 1 1 10-24-2z"/><path d="M19 32l23 3 1 8-18-3z"/><path d="M27 42l15 2 2 7-12-2z"/><path d="M35 50l9 1 3 5-9-2z"/><path d="M43 56l4 1 7 7-6-1z"/><path d="M150 9l-32 7v20l28-19z"/><path d="M147 21l-29 1-1 10 24-2z"/><path d="M141 32l-23 3-1 8 18-3z"/><path d="M133 42l-15 2-2 7 12-2z"/><path d="M125 50l-9 1-3 5 9-2z"/><path d="M117 56l-4 1-7 7 6-1z"/></g><text x="0" y="0" transform="translate(85 39) scale(1.22 1.45)" text-anchor="middle" font-family="Liberation Sans" font-weight="bold" font-size="19" fill="#f6f6f6" stroke="#707070" stroke-width="0.6" letter-spacing="-0.5">LANOS</text><text x="80" y="55" text-anchor="middle" font-family="Liberation Sans" font-size="13" fill="#f6f6f6" stroke="#808080" stroke-width="0.6" letter-spacing="1">CLAN</text><text x="80" y="69" text-anchor="middle" font-family="Liberation Sans" font-weight="bold" font-size="7" fill="#d0d0d0" stroke="#606060" stroke-width="0.4">UKRAINIAN CLUB</text></svg>
</body></html>
